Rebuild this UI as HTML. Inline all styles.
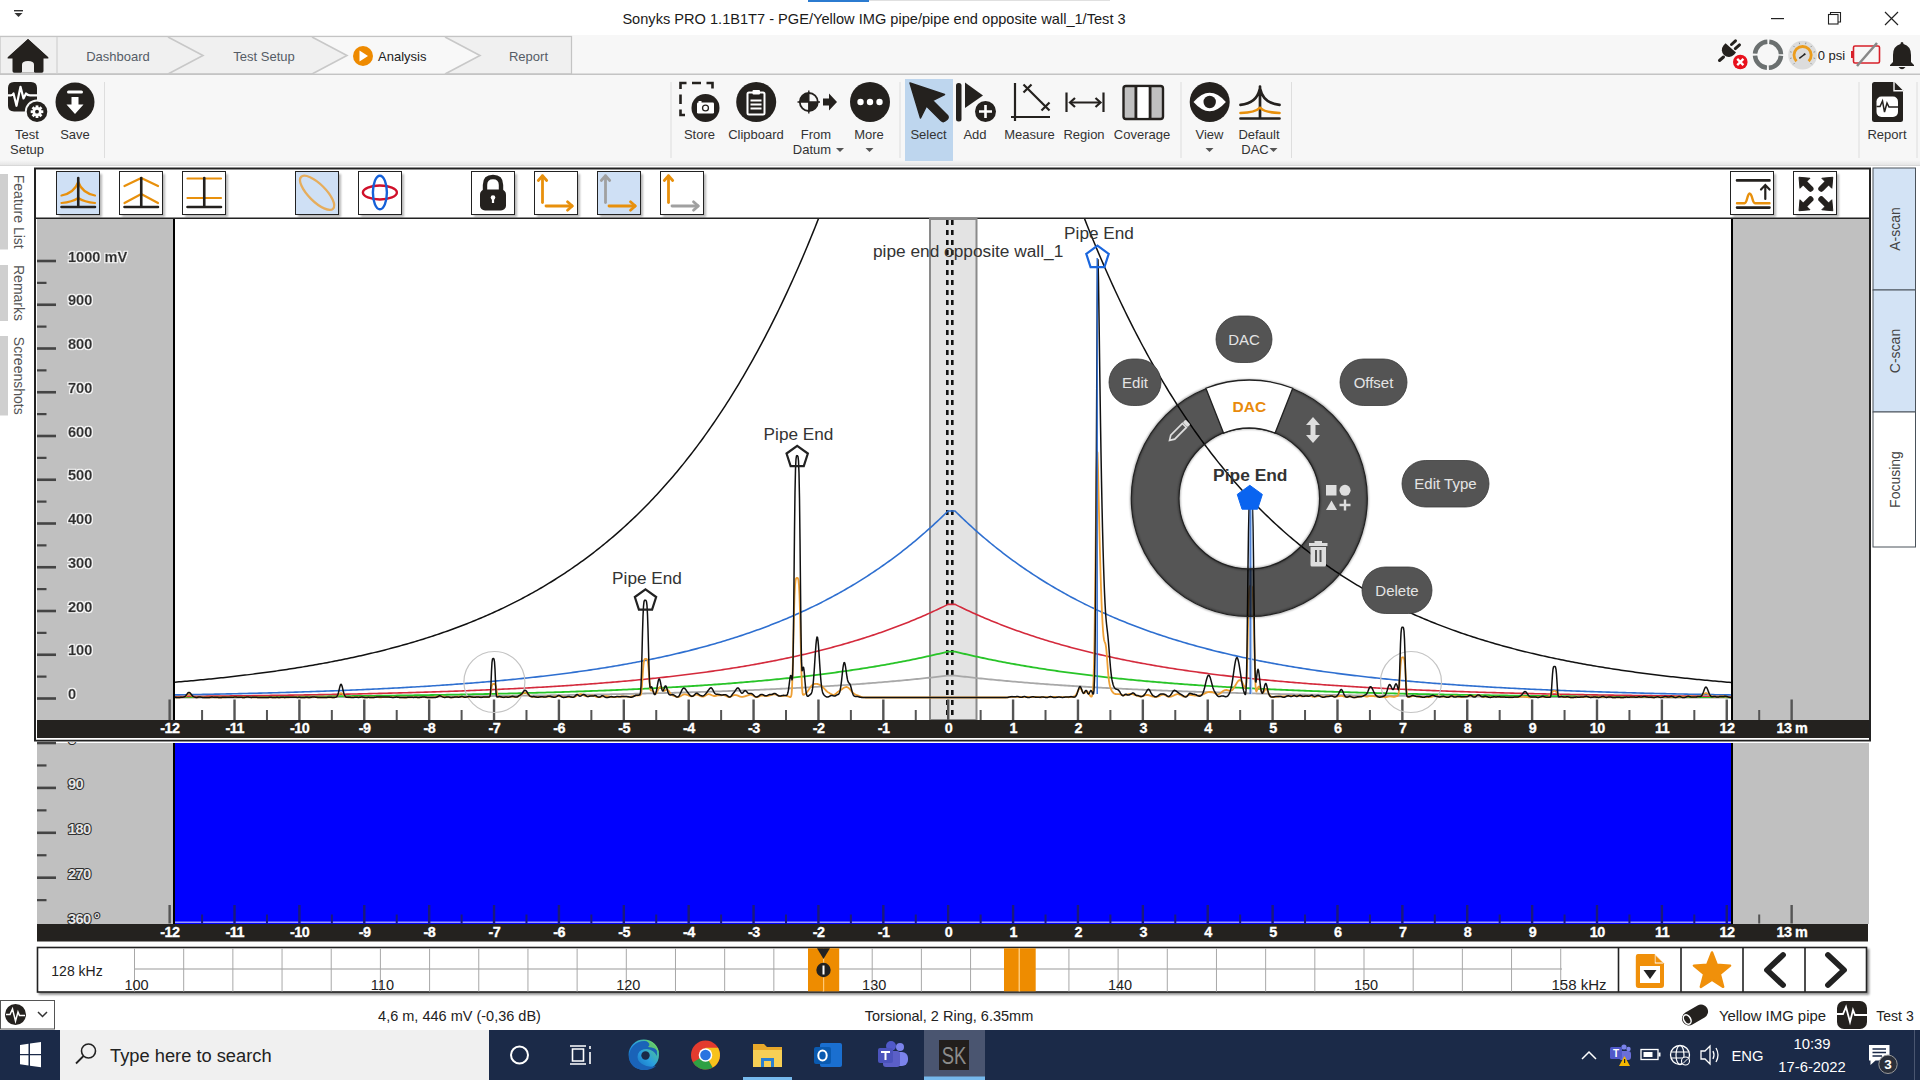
<!DOCTYPE html>
<html><head><meta charset="utf-8"><title>Sonyks PRO</title>
<style>
html,body{margin:0;padding:0;width:1920px;height:1080px;overflow:hidden;background:#fff;}
svg{position:absolute;left:0;top:0;font-family:"Liberation Sans", sans-serif;}
</style></head><body>
<svg width="1920" height="1080" viewBox="0 0 1920 1080">
<defs>
<linearGradient id="ribgrad" x1="0" y1="0" x2="0" y2="1"><stop offset="0" stop-color="#f7f7f7"/><stop offset="1" stop-color="#e6e6e6"/></linearGradient>
<filter id="btnsh" x="-20%" y="-20%" width="150%" height="150%"><feGaussianBlur in="SourceAlpha" stdDeviation="1.2"/><feOffset dx="1.5" dy="1.5"/><feComponentTransfer><feFuncA type="linear" slope="0.45"/></feComponentTransfer><feMerge><feMergeNode/><feMergeNode in="SourceGraphic"/></feMerge></filter>
<linearGradient id="edgegrad" x1="0" y1="1" x2="1" y2="0"><stop offset="0" stop-color="#0c59b0"/><stop offset="0.5" stop-color="#2a9ee0"/><stop offset="1" stop-color="#62d66a"/></linearGradient>
<filter id="blur1" x="-20%" y="-20%" width="140%" height="140%"><feGaussianBlur stdDeviation="0.9"/></filter>
<filter id="ringsh" x="-10%" y="-10%" width="120%" height="120%"><feGaussianBlur stdDeviation="0.8"/></filter>
<filter id="halo" x="-10%" y="-30%" width="120%" height="160%"><feMorphology in="SourceAlpha" operator="dilate" radius="1" result="d"/><feFlood flood-color="#ffffff" flood-opacity="0.9"/><feComposite in2="d" operator="in" result="w"/><feGaussianBlur in="w" stdDeviation="0.7" result="wb"/><feMerge><feMergeNode in="wb"/><feMergeNode in="SourceGraphic"/></feMerge></filter>
<clipPath id="plotclip"><rect x="175" y="219" width="1556" height="501"/></clipPath>
</defs>
<rect x="0" y="0" width="1920" height="35" fill="#ffffff"/>
<rect x="808" y="0" width="61" height="2" fill="#2b7bd0"/>
<rect x="869" y="0" width="241" height="1" fill="#e0e0e0"/>
<text x="874" y="24" font-size="14.6" fill="#1a1a1a" text-anchor="middle" font-weight="400" >Sonyks PRO 1.1B1T7 - PGE/Yellow IMG pipe/pipe end opposite wall_1/Test 3</text>
<rect x="14" y="10" width="9" height="1.4" fill="#333"/>
<path d="M14.5 13 L22.5 13 L18.5 17 Z" fill="#333"/>
<rect x="1771" y="18" width="13" height="1.2" fill="#222"/>
<rect x="1828.5" y="14.5" width="9.5" height="9.5" fill="none" stroke="#222" stroke-width="1.1"/>
<path d="M1830.5 14.5 V12.5 H1840.5 V22 H1838" fill="none" stroke="#222" stroke-width="1.1"/>
<path d="M1885 12 L1898 25 M1898 12 L1885 25" stroke="#222" stroke-width="1.2"/>
<rect x="0" y="35" width="1920" height="40" fill="#f7f7f7"/>
<rect x="0" y="36.5" width="571.5" height="37.5" fill="#f0f0f0" stroke="#c4c4c4" stroke-width="1.2"/>
<rect x="0" y="73.5" width="1920" height="1.5" fill="#c4c4c4"/>
<line x1="57" y1="37" x2="57" y2="74" stroke="#d0d0d0" stroke-width="1.2"/>
<path d="M312 37.2 L347 55.5 L312 73.6 L445 73.6 L480 55.5 L445 37.2 Z" fill="#f8f8f8"/>
<path d="M168 37 L203 55.5 L168 74" fill="none" stroke="#c8c8c8" stroke-width="1.6"/>
<path d="M312 37 L347 55.5 L312 74" fill="none" stroke="#c8c8c8" stroke-width="1.6"/>
<path d="M445 37 L480 55.5 L445 74" fill="none" stroke="#c8c8c8" stroke-width="1.6"/>
<path d="M28 39 L48 57 Q49.5 58.5 47 58.5 L43 58.5 L43 71 Q43 72.5 41.5 72.5 L35 72.5 L35 64 Q35 61 31.5 61 L24.5 61 Q21 61 21 64 L21 72.5 L14.5 72.5 Q13 72.5 13 71 L13 58.5 L9 58.5 Q6.5 58.5 8 57 Z" fill="#24211e"/>
<path d="M28 39 L48.2 57.5 L7.8 57.5 Z" fill="#24211e"/>
<rect x="12.5" y="56" width="31" height="16.5" rx="1.5" fill="#24211e"/>
<path d="M22 72.6 L22 64.5 Q22 61 28 61 Q34 61 34 64.5 L34 72.6 Z" fill="#f0f0f0"/>
<text x="118" y="61" font-size="13" fill="#555c66" text-anchor="middle" font-weight="400" >Dashboard</text>
<text x="264" y="61" font-size="13" fill="#555c66" text-anchor="middle" font-weight="400" >Test Setup</text>
<circle cx="363" cy="56" r="10" fill="#ee8a00"/>
<path d="M359.5 50.5 L368 56 L359.5 61.5 Z" fill="#fff"/>
<text x="378" y="61" font-size="13" fill="#222" text-anchor="start" font-weight="400" >Analysis</text>
<text x="528.5" y="61" font-size="13" fill="#555c66" text-anchor="middle" font-weight="400" >Report</text>
<rect x="0" y="75" width="1920" height="90" fill="#f7f7f7"/>
<rect x="0" y="160" width="1920" height="5" fill="url(#ribgrad)"/>
<rect x="0" y="165" width="1920" height="1" fill="#d8d8d8"/>
<rect x="104" y="82" width="1" height="76" fill="#dedede"/>
<rect x="670.5" y="82" width="1" height="76" fill="#dedede"/>
<rect x="899.5" y="82" width="1" height="76" fill="#dedede"/>
<rect x="1180.5" y="82" width="1" height="76" fill="#dedede"/>
<rect x="1291" y="82" width="1" height="76" fill="#dedede"/>
<rect x="1858.5" y="82" width="1" height="76" fill="#dedede"/>
<rect x="1916.5" y="82" width="1" height="76" fill="#dedede"/>
<rect x="905" y="79" width="48" height="82" fill="#bed6ee"/>
<text x="27" y="139" font-size="13" fill="#333" text-anchor="middle" font-weight="400" >Test</text>
<text x="27" y="153.5" font-size="13" fill="#333" text-anchor="middle" font-weight="400" >Setup</text>
<text x="75" y="139" font-size="13" fill="#333" text-anchor="middle" font-weight="400" >Save</text>
<text x="699.5" y="139" font-size="13" fill="#333" text-anchor="middle" font-weight="400" >Store</text>
<text x="756" y="139" font-size="13" fill="#333" text-anchor="middle" font-weight="400" >Clipboard</text>
<text x="816" y="139" font-size="13" fill="#333" text-anchor="middle" font-weight="400" >From</text>
<text x="812" y="153.5" font-size="13" fill="#333" text-anchor="middle" font-weight="400" >Datum</text>
<text x="869" y="139" font-size="13" fill="#333" text-anchor="middle" font-weight="400" >More</text>
<text x="928.5" y="139" font-size="13" fill="#333" text-anchor="middle" font-weight="400" >Select</text>
<text x="975" y="139" font-size="13" fill="#333" text-anchor="middle" font-weight="400" >Add</text>
<text x="1029.5" y="139" font-size="13" fill="#333" text-anchor="middle" font-weight="400" >Measure</text>
<text x="1084" y="139" font-size="13" fill="#333" text-anchor="middle" font-weight="400" >Region</text>
<text x="1142" y="139" font-size="13" fill="#333" text-anchor="middle" font-weight="400" >Coverage</text>
<text x="1209.5" y="139" font-size="13" fill="#333" text-anchor="middle" font-weight="400" >View</text>
<text x="1259" y="139" font-size="13" fill="#333" text-anchor="middle" font-weight="400" >Default</text>
<text x="1255" y="153.5" font-size="13" fill="#333" text-anchor="middle" font-weight="400" >DAC</text>
<text x="1887" y="139" font-size="13" fill="#333" text-anchor="middle" font-weight="400" >Report</text>
<path d="M836 148 L844 148 L840 152 Z" fill="#555"/>
<path d="M865.5 148 L873.5 148 L869.5 152 Z" fill="#555"/>
<path d="M1205.5 148 L1213.5 148 L1209.5 152 Z" fill="#555"/>
<path d="M1269.5 148 L1277.5 148 L1273.5 152 Z" fill="#555"/>
<path d="M14 82 H31 Q37 82 37 88 V111.4 H14 Q8 111.4 8 106 V88 Q8 82 14 82 Z" fill="#24211e"/>
<path d="M8 95.3 H11 Q12.5 95 13.5 93.5 L16.5 105.8 L20.5 86.8 L23.5 98.5 L26 93.5 Q27.5 95.3 30 95.3 H37" fill="none" stroke="#fff" stroke-width="2.2" stroke-linejoin="round"/>
<circle cx="37" cy="111.7" r="12.2" fill="#f7f7f7"/><circle cx="37" cy="111.7" r="10.3" fill="#24211e"/>
<rect x="35.6" y="105.4" width="2.8" height="12.6" fill="#fff" transform="rotate(0 37 111.7)"/><rect x="35.6" y="105.4" width="2.8" height="12.6" fill="#fff" transform="rotate(45 37 111.7)"/><rect x="35.6" y="105.4" width="2.8" height="12.6" fill="#fff" transform="rotate(90 37 111.7)"/><rect x="35.6" y="105.4" width="2.8" height="12.6" fill="#fff" transform="rotate(135 37 111.7)"/>
<circle cx="37" cy="111.7" r="4.6" fill="#fff"/><circle cx="37" cy="111.7" r="1.9" fill="#24211e"/>
<circle cx="75" cy="102" r="19.5" fill="#24211e"/>
<rect x="67" y="90.5" width="16" height="3" rx="1.5" fill="#fff"/>
<path d="M71.5 97 H78.5 V104.5 H83.5 L75 114 L66.5 104.5 H71.5 Z" fill="#fff"/>
<path d="M680.5 89 V83 H686.5 M692 83 H701 M706.5 83 H712.5 V88.5 M680.5 94.5 V104 M680.5 109.5 V115 H685" fill="none" stroke="#24211e" stroke-width="2.6"/>
<circle cx="705.5" cy="108" r="14" fill="#24211e"/>
<rect x="697" y="102.5" width="17" height="11" rx="1.2" fill="#fff"/><rect x="698.5" y="101" width="3" height="2" fill="#fff"/><circle cx="705.5" cy="108" r="3.6" fill="#24211e"/><circle cx="705.5" cy="108" r="2.3" fill="#fff"/>
<circle cx="756.2" cy="102" r="20" fill="#24211e"/>
<rect x="747.5" y="92.5" width="17" height="22" rx="1.5" fill="none" stroke="#fff" stroke-width="2"/><rect x="752.5" y="90" width="7.5" height="4.5" rx="1" fill="#fff"/>
<path d="M750.5 100.5 H761.5 M750.5 104.5 H761.5 M750.5 108.5 H761.5" stroke="#fff" stroke-width="2"/>
<circle cx="808.8" cy="102" r="9" fill="none" stroke="#24211e" stroke-width="1.8"/>
<path d="M808.8 102 V93 A9 9 0 0 0 799.8 102 Z M808.8 102 V111 A9 9 0 0 0 817.8 102 Z" fill="#24211e"/>
<path d="M808.8 90.5 V113.5 M797.5 102 H820" stroke="#24211e" stroke-width="1.4"/>
<path d="M823 98.5 H829 V93.5 L837 102 L829 110.5 V105.5 H823 Z" fill="#24211e"/>
<circle cx="870" cy="102" r="20" fill="#24211e"/>
<circle cx="860.5" cy="102" r="3.2" fill="#fff"/>
<circle cx="870" cy="102" r="3.2" fill="#fff"/>
<circle cx="879.5" cy="102" r="3.2" fill="#fff"/>
<path d="M910 83 L944.5 94.5 L932.5 100.5 L947.5 115.5 Q949 117.5 947 119.5 L945 121 Q943 122.5 941 120.5 L926.5 106 L920.5 118 Z" fill="#24211e" stroke="#24211e" stroke-width="1.5" stroke-linejoin="round"/>
<rect x="956" y="83" width="5.5" height="38.5" rx="2.5" fill="#24211e"/>
<path d="M965 82.5 L983 95.5 L965 108 Z" fill="#24211e"/>
<circle cx="985.5" cy="111.5" r="10.5" fill="#24211e"/><path d="M985.5 105 V118 M979 111.5 H992" stroke="#fff" stroke-width="2.6"/>
<path d="M1015 83 V121 M1011 117 H1050" stroke="#24211e" stroke-width="2.2"/>
<path d="M1027.5 88.5 L1045.5 106.5 M1023.5 84.5 L1031.5 92.5 M1031.5 84.5 L1023.5 92.5 M1041.5 102.5 L1049.5 110.5 M1049.5 102.5 L1041.5 110.5" stroke="#24211e" stroke-width="2.2"/>
<path d="M1066.5 92.5 V112 M1103.5 92.5 V112 M1070.5 102.5 H1100" stroke="#24211e" stroke-width="2.2"/>
<path d="M1075 98 L1070 102.5 L1075 107 M1095.5 98 L1100.5 102.5 L1095.5 107" fill="none" stroke="#24211e" stroke-width="2.2"/>
<rect x="1123.5" y="86" width="39.5" height="33" rx="2.5" fill="#c0c0c0" stroke="#24211e" stroke-width="2.4"/>
<rect x="1134.5" y="86" width="3" height="33" fill="#24211e"/><rect x="1148.5" y="86" width="3" height="33" fill="#24211e"/>
<rect x="1137.5" y="87.2" width="11" height="30.6" fill="#fff"/>
<circle cx="1209.7" cy="102" r="20" fill="#24211e"/>
<path d="M1193.5 102 Q1209.7 83.5 1225.9 102 Q1209.7 120.5 1193.5 102 Z" fill="#fff"/>
<circle cx="1209.7" cy="102" r="6.2" fill="#24211e"/>
<path d="M1260 86.5 V118 M1240.5 118.5 H1279.5 M1240.5 104.8 Q1256.5 103.5 1259.8 89 M1279.5 104.8 Q1263.5 103.5 1260.2 89" fill="none" stroke="#24211e" stroke-width="2.7" stroke-linecap="round"/>
<path d="M1240.5 113 Q1255.5 112.5 1259.5 108 M1279.5 113 Q1264.5 112.5 1260.5 108" fill="none" stroke="#e8900c" stroke-width="2.6" stroke-linecap="round"/>
<path d="M1872 84.5 Q1872 82 1874.5 82 H1894.5 L1903 90.5 V119.5 Q1903 122 1900.5 122 H1874.5 Q1872 122 1872 119.5 Z" fill="#24211e"/>
<path d="M1894 82 V90.8 H1903" fill="none" stroke="#f7f7f7" stroke-width="1.4"/>
<rect x="1876.5" y="96.5" width="21.5" height="20.5" rx="5" fill="#fff"/>
<path d="M1876.5 106.5 H1880 L1882.5 101 L1884.5 112 L1887 103 L1889 107 H1898" fill="none" stroke="#24211e" stroke-width="1.5"/>
<path d="M1725.5 43.2 L1736 52.6 L1734 54.84 A7.05 7.05 0 0 1 1723.5 45.44 Z" fill="#24211e"/>
<path d="M1731.5 44.5 L1735.5 40.8 M1735.3 48.6 L1739.5 44.9 M1719.5 60.5 L1723.5 57" stroke="#24211e" stroke-width="3" stroke-linecap="round"/>
<circle cx="1740.3" cy="62" r="8.3" fill="#f7f7f7"/><circle cx="1740.3" cy="62" r="7.3" fill="#e8101c"/><path d="M1737.2 58.9 L1743.4 65.1 M1743.4 58.9 L1737.2 65.1" stroke="#fff" stroke-width="2.3"/>
<circle cx="1768" cy="54.8" r="13" fill="none" stroke="#6b7070" stroke-width="4.5" stroke-dasharray="18.4 2" stroke-dashoffset="-1"/>
<circle cx="1802.6" cy="55.1" r="14.4" fill="#dcdcdc"/><path d="M1794.61 63.09 L1793.41 64.29 M1791.69 58.02 L1790.04 58.46 M1791.69 52.18 L1790.04 51.74 M1794.61 47.11 L1793.41 45.91 M1799.68 44.19 L1799.24 42.54 M1805.52 44.19 L1805.96 42.54 M1810.59 47.11 L1811.79 45.91 M1813.51 52.18 L1815.16 51.74 M1813.51 58.02 L1815.16 58.46 M1810.59 63.09 L1811.79 64.29 " stroke="#8a9090" stroke-width="0.9"/><path d="M1796.52 61.18 A8.6 8.6 0 1 1 1808.68 61.18" fill="none" stroke="#eb9c1c" stroke-width="2.8"/><path d="M1799.3 58.3 L1805 54" stroke="#222" stroke-width="1.5"/><circle cx="1804.6" cy="54.3" r="1" fill="#222"/>
<text x="1831.5" y="60" font-size="13" fill="#222" text-anchor="middle" font-weight="400" >0 psi</text>
<rect x="1853.5" y="46" width="26" height="17" rx="1.5" fill="none" stroke="#d8202a" stroke-width="1.6"/><rect x="1851" y="51" width="2" height="7" fill="#d8202a"/><path d="M1857 66 L1877 43" stroke="#888" stroke-width="2.5"/>
<path d="M1902 42 Q1903.5 42 1903.5 44 Q1911 46 1911 55 V62 L1914 65 V66 H1890 V65 L1893 62 V55 Q1893 46 1900.5 44 Q1900.5 42 1902 42 Z" fill="#24211e"/><path d="M1898.5 67 Q1902 71.5 1905.5 67 Z" fill="#24211e"/>
<rect x="0" y="166" width="35" height="864" fill="#ffffff"/>
<rect x="0" y="174" width="8" height="75.5" fill="#cfcfcf"/>
<text x="0" y="0" font-size="14" fill="#555" text-anchor="middle" transform="translate(13.5 211.75) rotate(90)">Feature List</text>
<rect x="0" y="265" width="8" height="56" fill="#cfcfcf"/>
<text x="0" y="0" font-size="14" fill="#555" text-anchor="middle" transform="translate(13.5 293.0) rotate(90)">Remarks</text>
<rect x="0" y="336" width="8" height="79.5" fill="#cfcfcf"/>
<text x="0" y="0" font-size="14" fill="#555" text-anchor="middle" transform="translate(13.5 375.75) rotate(90)">Screenshots</text>
<rect x="1870" y="166" width="50" height="834" fill="#ffffff"/>
<rect x="1873" y="168" width="42.5" height="122" fill="#d3e3f5" stroke="#4a525a" stroke-width="1"/>
<text x="0" y="0" font-size="14" fill="#444" text-anchor="middle" transform="translate(1899.5 229.0) rotate(-90)">A-scan</text>
<rect x="1873" y="290" width="42.5" height="122" fill="#d3e3f5" stroke="#4a525a" stroke-width="1"/>
<text x="0" y="0" font-size="14" fill="#444" text-anchor="middle" transform="translate(1899.5 351.0) rotate(-90)">C-scan</text>
<rect x="1873" y="412" width="42.5" height="135" fill="#ffffff" stroke="#4a525a" stroke-width="1"/>
<text x="0" y="0" font-size="14" fill="#444" text-anchor="middle" transform="translate(1899.5 479.5) rotate(-90)">Focusing</text>
<rect x="35" y="168.5" width="1835" height="572" fill="#ffffff" stroke="#222" stroke-width="2"/>
<rect x="59.0" y="174.0" width="43" height="43" fill="#000" opacity="0.28" filter="url(#blur1)"/>
<rect x="56.5" y="171.5" width="43" height="43" fill="#cfe0f5" stroke="#222" stroke-width="1"/>
<rect x="122.0" y="174.0" width="43" height="43" fill="#000" opacity="0.28" filter="url(#blur1)"/>
<rect x="119.5" y="171.5" width="43" height="43" fill="#fff" stroke="#222" stroke-width="1"/>
<rect x="185.0" y="174.0" width="43" height="43" fill="#000" opacity="0.28" filter="url(#blur1)"/>
<rect x="182.5" y="171.5" width="43" height="43" fill="#fff" stroke="#222" stroke-width="1"/>
<rect x="298.0" y="174.0" width="43" height="43" fill="#000" opacity="0.28" filter="url(#blur1)"/>
<rect x="295.5" y="171.5" width="43" height="43" fill="#cfe0f5" stroke="#222" stroke-width="1"/>
<rect x="361.0" y="174.0" width="43" height="43" fill="#000" opacity="0.28" filter="url(#blur1)"/>
<rect x="358.5" y="171.5" width="43" height="43" fill="#fff" stroke="#222" stroke-width="1"/>
<rect x="474.0" y="174.0" width="43" height="43" fill="#000" opacity="0.28" filter="url(#blur1)"/>
<rect x="471.5" y="171.5" width="43" height="43" fill="#fff" stroke="#222" stroke-width="1"/>
<rect x="537.0" y="174.0" width="43" height="43" fill="#000" opacity="0.28" filter="url(#blur1)"/>
<rect x="534.5" y="171.5" width="43" height="43" fill="#fff" stroke="#222" stroke-width="1"/>
<rect x="600.0" y="174.0" width="43" height="43" fill="#000" opacity="0.28" filter="url(#blur1)"/>
<rect x="597.5" y="171.5" width="43" height="43" fill="#cfe0f5" stroke="#222" stroke-width="1"/>
<rect x="663.0" y="174.0" width="43" height="43" fill="#000" opacity="0.28" filter="url(#blur1)"/>
<rect x="660.5" y="171.5" width="43" height="43" fill="#fff" stroke="#222" stroke-width="1"/>
<rect x="1733.0" y="174.0" width="43" height="43" fill="#000" opacity="0.28" filter="url(#blur1)"/>
<rect x="1730.5" y="171.5" width="43" height="43" fill="#fff" stroke="#222" stroke-width="1"/>
<rect x="1796.0" y="174.0" width="43" height="43" fill="#000" opacity="0.28" filter="url(#blur1)"/>
<rect x="1793.5" y="171.5" width="43" height="43" fill="#fff" stroke="#222" stroke-width="1"/>
<path d="M61.5 195.5 Q74.25 193 78.25 182 Q82.25 193 95.0 195.5" fill="none" stroke="#e8900c" stroke-width="2.2" stroke-linecap="round"/>
<path d="M61.5 203 Q72.25 202 78.25 198 Q84.25 202 95.0 203" fill="none" stroke="#e8900c" stroke-width="2.2" stroke-linecap="round"/>
<path d="M78.25 178 L78.25 207 M61.5 207 L95.0 207" fill="none" stroke="#24211e" stroke-width="2.6" stroke-linecap="round"/>
<path d="M124.5 186 L141.25 178 L158.0 186" fill="none" stroke="#e8900c" stroke-width="2.2" stroke-linecap="round"/>
<path d="M124.5 203 L141.25 194 L158.0 203" fill="none" stroke="#e8900c" stroke-width="2.2" stroke-linecap="round"/>
<path d="M141.25 178 L141.25 207 M124.5 207 L158.0 207" fill="none" stroke="#24211e" stroke-width="2.6" stroke-linecap="round"/>
<path d="M187.5 178.5 L221.0 178.5 M187.5 198 L221.0 198" fill="none" stroke="#e8900c" stroke-width="2.2" stroke-linecap="round"/>
<path d="M204.25 178 L204.25 207 M187.5 207 L221.0 207" fill="none" stroke="#24211e" stroke-width="2.6" stroke-linecap="round"/>
<ellipse cx="317.1" cy="192.8" rx="8.6" ry="22.6" transform="rotate(-45 317.1 192.8)" fill="none" stroke="#e6ad5c" stroke-width="2.3"/>
<ellipse cx="379.9" cy="192.5" rx="17" ry="7" fill="none" stroke="#d0102a" stroke-width="2.4"/>
<ellipse cx="379.9" cy="192.5" rx="7" ry="16.8" fill="none" stroke="#1560d8" stroke-width="2.4"/>
<path d="M485 192 L485 185 Q485 177 493 177 Q501 177 501 185 L501 192" fill="none" stroke="#24211e" stroke-width="4.4"/>
<rect x="480" y="189.5" width="26" height="21" rx="5" fill="#24211e"/>
<circle cx="493" cy="197.5" r="2.3" fill="#fff"/><rect x="491.9" y="197.5" width="2.2" height="5.5" fill="#fff"/>
<path d="M542.5 202.5 L542.5 176" stroke="#e8900c" stroke-width="2.8" stroke-linecap="round"/>
<path d="M538.3 180.5 L542.5 175.8 L546.7 180.5" fill="none" stroke="#e8900c" stroke-width="2.8" stroke-linecap="round" stroke-linejoin="round"/>
<path d="M546 206 L572 206" stroke="#e8900c" stroke-width="2.8" stroke-linecap="round"/>
<path d="M567.5 201.8 L572.3 206 L567.5 210.2" fill="none" stroke="#e8900c" stroke-width="2.8" stroke-linecap="round" stroke-linejoin="round"/>
<path d="M605.5 202.5 L605.5 176" stroke="#a0a0a0" stroke-width="2.8" stroke-linecap="round"/>
<path d="M601.3 180.5 L605.5 175.8 L609.7 180.5" fill="none" stroke="#a0a0a0" stroke-width="2.8" stroke-linecap="round" stroke-linejoin="round"/>
<path d="M609 206 L635 206" stroke="#e8900c" stroke-width="2.8" stroke-linecap="round"/>
<path d="M630.5 201.8 L635.3 206 L630.5 210.2" fill="none" stroke="#e8900c" stroke-width="2.8" stroke-linecap="round" stroke-linejoin="round"/>
<path d="M668.5 202.5 L668.5 176" stroke="#e8900c" stroke-width="2.8" stroke-linecap="round"/>
<path d="M664.3 180.5 L668.5 175.8 L672.7 180.5" fill="none" stroke="#e8900c" stroke-width="2.8" stroke-linecap="round" stroke-linejoin="round"/>
<path d="M672 206 L698 206" stroke="#a0a0a0" stroke-width="2.8" stroke-linecap="round"/>
<path d="M693.5 201.8 L698.3 206 L693.5 210.2" fill="none" stroke="#a0a0a0" stroke-width="2.8" stroke-linecap="round" stroke-linejoin="round"/>
<path d="M1737 180.4 H1769.5 M1737 207.6 H1769.5" stroke="#24211e" stroke-width="2.6" stroke-linecap="round"/>
<path d="M1737 203.2 H1744.5 Q1746 203.2 1747 199 Q1748.5 193.5 1749.5 193.5 Q1751 193.5 1752.5 199 Q1753.5 203.2 1755 203.2 H1769.5" fill="none" stroke="#e8900c" stroke-width="2.4" stroke-linecap="round"/>
<path d="M1765.3 199 V185.5 M1761 189.5 L1765.3 185 L1769.6 189.5" fill="none" stroke="#24211e" stroke-width="2.2" stroke-linecap="round"/>
<path d="M1799.0 177.25 L1810.0 178.25 L1800.0 188.25 Z" fill="#24211e" stroke="#24211e" stroke-width="1" stroke-linejoin="round"/>
<path d="M1803.0 181.25 L1810.5 188.75" stroke="#24211e" stroke-width="6" stroke-linecap="round"/>
<path d="M1832.8000000000002 177.25 L1821.8000000000002 178.25 L1831.8000000000002 188.25 Z" fill="#24211e" stroke="#24211e" stroke-width="1" stroke-linejoin="round"/>
<path d="M1828.8000000000002 181.25 L1821.3000000000002 188.75" stroke="#24211e" stroke-width="6" stroke-linecap="round"/>
<path d="M1799.0 210.75 L1810.0 209.75 L1800.0 199.75 Z" fill="#24211e" stroke="#24211e" stroke-width="1" stroke-linejoin="round"/>
<path d="M1803.0 206.75 L1810.5 199.25" stroke="#24211e" stroke-width="6" stroke-linecap="round"/>
<path d="M1832.8000000000002 210.75 L1821.8000000000002 209.75 L1831.8000000000002 199.75 Z" fill="#24211e" stroke="#24211e" stroke-width="1" stroke-linejoin="round"/>
<path d="M1828.8000000000002 206.75 L1821.3000000000002 199.25" stroke="#24211e" stroke-width="6" stroke-linecap="round"/>
<rect x="36" y="217.5" width="1833" height="1.5" fill="#222"/>
<rect x="37" y="219" width="137" height="501" fill="#c0c0c0"/>
<rect x="1732" y="219" width="137" height="501" fill="#c0c0c0"/>
<rect x="173" y="219" width="2" height="501" fill="#000"/>
<rect x="1731" y="219" width="2" height="501" fill="#000"/>
<rect x="37" y="697.20" width="19" height="2.6" fill="#444"/>
<rect x="37" y="675.52" width="9.5" height="2.2" fill="#444"/>
<rect x="37" y="653.45" width="19" height="2.6" fill="#444"/>
<rect x="37" y="631.77" width="9.5" height="2.2" fill="#444"/>
<rect x="37" y="609.70" width="19" height="2.6" fill="#444"/>
<rect x="37" y="588.02" width="9.5" height="2.2" fill="#444"/>
<rect x="37" y="565.95" width="19" height="2.6" fill="#444"/>
<rect x="37" y="544.27" width="9.5" height="2.2" fill="#444"/>
<rect x="37" y="522.20" width="19" height="2.6" fill="#444"/>
<rect x="37" y="500.52" width="9.5" height="2.2" fill="#444"/>
<rect x="37" y="478.45" width="19" height="2.6" fill="#444"/>
<rect x="37" y="456.77" width="9.5" height="2.2" fill="#444"/>
<rect x="37" y="434.70" width="19" height="2.6" fill="#444"/>
<rect x="37" y="413.02" width="9.5" height="2.2" fill="#444"/>
<rect x="37" y="390.95" width="19" height="2.6" fill="#444"/>
<rect x="37" y="369.27" width="9.5" height="2.2" fill="#444"/>
<rect x="37" y="347.20" width="19" height="2.6" fill="#444"/>
<rect x="37" y="325.52" width="9.5" height="2.2" fill="#444"/>
<rect x="37" y="303.45" width="19" height="2.6" fill="#444"/>
<rect x="37" y="281.77" width="9.5" height="2.2" fill="#444"/>
<rect x="37" y="259.70" width="19" height="2.6" fill="#444"/>
<text x="68" y="699.0" font-size="14.6" font-weight="700" fill="#2e2e2e" stroke="#2e2e2e" stroke-width="0.4" filter="url(#halo)">0</text>
<text x="68" y="655.2" font-size="14.6" font-weight="700" fill="#2e2e2e" stroke="#2e2e2e" stroke-width="0.4" filter="url(#halo)">100</text>
<text x="68" y="611.5" font-size="14.6" font-weight="700" fill="#2e2e2e" stroke="#2e2e2e" stroke-width="0.4" filter="url(#halo)">200</text>
<text x="68" y="567.8" font-size="14.6" font-weight="700" fill="#2e2e2e" stroke="#2e2e2e" stroke-width="0.4" filter="url(#halo)">300</text>
<text x="68" y="524.0" font-size="14.6" font-weight="700" fill="#2e2e2e" stroke="#2e2e2e" stroke-width="0.4" filter="url(#halo)">400</text>
<text x="68" y="480.2" font-size="14.6" font-weight="700" fill="#2e2e2e" stroke="#2e2e2e" stroke-width="0.4" filter="url(#halo)">500</text>
<text x="68" y="436.5" font-size="14.6" font-weight="700" fill="#2e2e2e" stroke="#2e2e2e" stroke-width="0.4" filter="url(#halo)">600</text>
<text x="68" y="392.8" font-size="14.6" font-weight="700" fill="#2e2e2e" stroke="#2e2e2e" stroke-width="0.4" filter="url(#halo)">700</text>
<text x="68" y="349.0" font-size="14.6" font-weight="700" fill="#2e2e2e" stroke="#2e2e2e" stroke-width="0.4" filter="url(#halo)">800</text>
<text x="68" y="305.2" font-size="14.6" font-weight="700" fill="#2e2e2e" stroke="#2e2e2e" stroke-width="0.4" filter="url(#halo)">900</text>
<text x="68" y="261.5" font-size="14.6" font-weight="700" fill="#2e2e2e" stroke="#2e2e2e" stroke-width="0.4" filter="url(#halo)">1000 mV</text>
<rect x="175" y="219" width="1556" height="501" fill="#ffffff"/>
<rect x="930" y="219" width="46.5" height="501" fill="#e3e3e3" stroke="#8a8a8a" stroke-width="2"/>
<rect x="946" y="220" width="2.6" height="5" fill="#111"/><rect x="951" y="220" width="2.6" height="5" fill="#111"/>
<rect x="946" y="230" width="2.6" height="5" fill="#111"/><rect x="951" y="230" width="2.6" height="5" fill="#111"/>
<rect x="946" y="240" width="2.6" height="5" fill="#111"/><rect x="951" y="240" width="2.6" height="5" fill="#111"/>
<rect x="946" y="250" width="2.6" height="5" fill="#111"/><rect x="951" y="250" width="2.6" height="5" fill="#111"/>
<rect x="946" y="260" width="2.6" height="5" fill="#111"/><rect x="951" y="260" width="2.6" height="5" fill="#111"/>
<rect x="946" y="270" width="2.6" height="5" fill="#111"/><rect x="951" y="270" width="2.6" height="5" fill="#111"/>
<rect x="946" y="280" width="2.6" height="5" fill="#111"/><rect x="951" y="280" width="2.6" height="5" fill="#111"/>
<rect x="946" y="290" width="2.6" height="5" fill="#111"/><rect x="951" y="290" width="2.6" height="5" fill="#111"/>
<rect x="946" y="300" width="2.6" height="5" fill="#111"/><rect x="951" y="300" width="2.6" height="5" fill="#111"/>
<rect x="946" y="310" width="2.6" height="5" fill="#111"/><rect x="951" y="310" width="2.6" height="5" fill="#111"/>
<rect x="946" y="320" width="2.6" height="5" fill="#111"/><rect x="951" y="320" width="2.6" height="5" fill="#111"/>
<rect x="946" y="330" width="2.6" height="5" fill="#111"/><rect x="951" y="330" width="2.6" height="5" fill="#111"/>
<rect x="946" y="340" width="2.6" height="5" fill="#111"/><rect x="951" y="340" width="2.6" height="5" fill="#111"/>
<rect x="946" y="350" width="2.6" height="5" fill="#111"/><rect x="951" y="350" width="2.6" height="5" fill="#111"/>
<rect x="946" y="360" width="2.6" height="5" fill="#111"/><rect x="951" y="360" width="2.6" height="5" fill="#111"/>
<rect x="946" y="370" width="2.6" height="5" fill="#111"/><rect x="951" y="370" width="2.6" height="5" fill="#111"/>
<rect x="946" y="380" width="2.6" height="5" fill="#111"/><rect x="951" y="380" width="2.6" height="5" fill="#111"/>
<rect x="946" y="390" width="2.6" height="5" fill="#111"/><rect x="951" y="390" width="2.6" height="5" fill="#111"/>
<rect x="946" y="400" width="2.6" height="5" fill="#111"/><rect x="951" y="400" width="2.6" height="5" fill="#111"/>
<rect x="946" y="410" width="2.6" height="5" fill="#111"/><rect x="951" y="410" width="2.6" height="5" fill="#111"/>
<rect x="946" y="420" width="2.6" height="5" fill="#111"/><rect x="951" y="420" width="2.6" height="5" fill="#111"/>
<rect x="946" y="430" width="2.6" height="5" fill="#111"/><rect x="951" y="430" width="2.6" height="5" fill="#111"/>
<rect x="946" y="440" width="2.6" height="5" fill="#111"/><rect x="951" y="440" width="2.6" height="5" fill="#111"/>
<rect x="946" y="450" width="2.6" height="5" fill="#111"/><rect x="951" y="450" width="2.6" height="5" fill="#111"/>
<rect x="946" y="460" width="2.6" height="5" fill="#111"/><rect x="951" y="460" width="2.6" height="5" fill="#111"/>
<rect x="946" y="470" width="2.6" height="5" fill="#111"/><rect x="951" y="470" width="2.6" height="5" fill="#111"/>
<rect x="946" y="480" width="2.6" height="5" fill="#111"/><rect x="951" y="480" width="2.6" height="5" fill="#111"/>
<rect x="946" y="490" width="2.6" height="5" fill="#111"/><rect x="951" y="490" width="2.6" height="5" fill="#111"/>
<rect x="946" y="500" width="2.6" height="5" fill="#111"/><rect x="951" y="500" width="2.6" height="5" fill="#111"/>
<rect x="946" y="510" width="2.6" height="5" fill="#111"/><rect x="951" y="510" width="2.6" height="5" fill="#111"/>
<rect x="946" y="520" width="2.6" height="5" fill="#111"/><rect x="951" y="520" width="2.6" height="5" fill="#111"/>
<rect x="946" y="530" width="2.6" height="5" fill="#111"/><rect x="951" y="530" width="2.6" height="5" fill="#111"/>
<rect x="946" y="540" width="2.6" height="5" fill="#111"/><rect x="951" y="540" width="2.6" height="5" fill="#111"/>
<rect x="946" y="550" width="2.6" height="5" fill="#111"/><rect x="951" y="550" width="2.6" height="5" fill="#111"/>
<rect x="946" y="560" width="2.6" height="5" fill="#111"/><rect x="951" y="560" width="2.6" height="5" fill="#111"/>
<rect x="946" y="570" width="2.6" height="5" fill="#111"/><rect x="951" y="570" width="2.6" height="5" fill="#111"/>
<rect x="946" y="580" width="2.6" height="5" fill="#111"/><rect x="951" y="580" width="2.6" height="5" fill="#111"/>
<rect x="946" y="590" width="2.6" height="5" fill="#111"/><rect x="951" y="590" width="2.6" height="5" fill="#111"/>
<rect x="946" y="600" width="2.6" height="5" fill="#111"/><rect x="951" y="600" width="2.6" height="5" fill="#111"/>
<rect x="946" y="610" width="2.6" height="5" fill="#111"/><rect x="951" y="610" width="2.6" height="5" fill="#111"/>
<rect x="946" y="620" width="2.6" height="5" fill="#111"/><rect x="951" y="620" width="2.6" height="5" fill="#111"/>
<rect x="946" y="630" width="2.6" height="5" fill="#111"/><rect x="951" y="630" width="2.6" height="5" fill="#111"/>
<rect x="946" y="640" width="2.6" height="5" fill="#111"/><rect x="951" y="640" width="2.6" height="5" fill="#111"/>
<rect x="946" y="650" width="2.6" height="5" fill="#111"/><rect x="951" y="650" width="2.6" height="5" fill="#111"/>
<rect x="946" y="660" width="2.6" height="5" fill="#111"/><rect x="951" y="660" width="2.6" height="5" fill="#111"/>
<rect x="946" y="670" width="2.6" height="5" fill="#111"/><rect x="951" y="670" width="2.6" height="5" fill="#111"/>
<rect x="946" y="680" width="2.6" height="5" fill="#111"/><rect x="951" y="680" width="2.6" height="5" fill="#111"/>
<rect x="946" y="690" width="2.6" height="5" fill="#111"/><rect x="951" y="690" width="2.6" height="5" fill="#111"/>
<rect x="946" y="700" width="2.6" height="5" fill="#111"/><rect x="951" y="700" width="2.6" height="5" fill="#111"/>
<rect x="946" y="710" width="2.6" height="5" fill="#111"/><rect x="951" y="710" width="2.6" height="5" fill="#111"/>
<rect x="168.44" y="699.5" width="2.4" height="20.5" fill="#555"/>
<rect x="201.08" y="710" width="2" height="10" fill="#555"/>
<rect x="233.32" y="699.5" width="2.4" height="20.5" fill="#555"/>
<rect x="265.96" y="710" width="2" height="10" fill="#555"/>
<rect x="298.20" y="699.5" width="2.4" height="20.5" fill="#555"/>
<rect x="330.84" y="710" width="2" height="10" fill="#555"/>
<rect x="363.08" y="699.5" width="2.4" height="20.5" fill="#555"/>
<rect x="395.72" y="710" width="2" height="10" fill="#555"/>
<rect x="427.96" y="699.5" width="2.4" height="20.5" fill="#555"/>
<rect x="460.60" y="710" width="2" height="10" fill="#555"/>
<rect x="492.84" y="699.5" width="2.4" height="20.5" fill="#555"/>
<rect x="525.48" y="710" width="2" height="10" fill="#555"/>
<rect x="557.72" y="699.5" width="2.4" height="20.5" fill="#555"/>
<rect x="590.36" y="710" width="2" height="10" fill="#555"/>
<rect x="622.60" y="699.5" width="2.4" height="20.5" fill="#555"/>
<rect x="655.24" y="710" width="2" height="10" fill="#555"/>
<rect x="687.48" y="699.5" width="2.4" height="20.5" fill="#555"/>
<rect x="720.12" y="710" width="2" height="10" fill="#555"/>
<rect x="752.36" y="699.5" width="2.4" height="20.5" fill="#555"/>
<rect x="785.00" y="710" width="2" height="10" fill="#555"/>
<rect x="817.24" y="699.5" width="2.4" height="20.5" fill="#555"/>
<rect x="849.88" y="710" width="2" height="10" fill="#555"/>
<rect x="882.12" y="699.5" width="2.4" height="20.5" fill="#555"/>
<rect x="914.76" y="710" width="2" height="10" fill="#555"/>
<rect x="947.00" y="699.5" width="2.4" height="20.5" fill="#555"/>
<rect x="979.64" y="710" width="2" height="10" fill="#555"/>
<rect x="1011.88" y="699.5" width="2.4" height="20.5" fill="#555"/>
<rect x="1044.52" y="710" width="2" height="10" fill="#555"/>
<rect x="1076.76" y="699.5" width="2.4" height="20.5" fill="#555"/>
<rect x="1109.40" y="710" width="2" height="10" fill="#555"/>
<rect x="1141.64" y="699.5" width="2.4" height="20.5" fill="#555"/>
<rect x="1174.28" y="710" width="2" height="10" fill="#555"/>
<rect x="1206.52" y="699.5" width="2.4" height="20.5" fill="#555"/>
<rect x="1239.16" y="710" width="2" height="10" fill="#555"/>
<rect x="1271.40" y="699.5" width="2.4" height="20.5" fill="#555"/>
<rect x="1304.04" y="710" width="2" height="10" fill="#555"/>
<rect x="1336.28" y="699.5" width="2.4" height="20.5" fill="#555"/>
<rect x="1368.92" y="710" width="2" height="10" fill="#555"/>
<rect x="1401.16" y="699.5" width="2.4" height="20.5" fill="#555"/>
<rect x="1433.80" y="710" width="2" height="10" fill="#555"/>
<rect x="1466.04" y="699.5" width="2.4" height="20.5" fill="#555"/>
<rect x="1498.68" y="710" width="2" height="10" fill="#555"/>
<rect x="1530.92" y="699.5" width="2.4" height="20.5" fill="#555"/>
<rect x="1563.56" y="710" width="2" height="10" fill="#555"/>
<rect x="1595.80" y="699.5" width="2.4" height="20.5" fill="#555"/>
<rect x="1628.44" y="710" width="2" height="10" fill="#555"/>
<rect x="1660.68" y="699.5" width="2.4" height="20.5" fill="#555"/>
<rect x="1693.32" y="710" width="2" height="10" fill="#555"/>
<rect x="1725.56" y="699.5" width="2.4" height="20.5" fill="#555"/>
<rect x="1758.20" y="710" width="2" height="10" fill="#555"/>
<rect x="1790.44" y="699.5" width="2.4" height="20.5" fill="#555"/>
<g clip-path="url(#plotclip)">
<path d="M175,697.63 L177,697.62 L179,697.62 L181,697.62 L183,697.61 L185,697.61 L187,697.60 L189,697.60 L191,697.60 L193,697.59 L195,697.59 L197,697.58 L199,697.58 L201,697.57 L203,697.57 L205,697.56 L207,697.56 L209,697.56 L211,697.55 L213,697.55 L215,697.54 L217,697.54 L219,697.53 L221,697.53 L223,697.52 L225,697.52 L227,697.51 L229,697.51 L231,697.50 L233,697.50 L235,697.49 L237,697.48 L239,697.48 L241,697.47 L243,697.47 L245,697.46 L247,697.46 L249,697.45 L251,697.44 L253,697.44 L255,697.43 L257,697.43 L259,697.42 L261,697.41 L263,697.41 L265,697.40 L267,697.40 L269,697.39 L271,697.38 L273,697.38 L275,697.37 L277,697.36 L279,697.36 L281,697.35 L283,697.34 L285,697.33 L287,697.33 L289,697.32 L291,697.31 L293,697.31 L295,697.30 L297,697.29 L299,697.28 L301,697.28 L303,697.27 L305,697.26 L307,697.25 L309,697.24 L311,697.24 L313,697.23 L315,697.22 L317,697.21 L319,697.20 L321,697.19 L323,697.19 L325,697.18 L327,697.17 L329,697.16 L331,697.15 L333,697.14 L335,697.13 L337,697.12 L339,697.11 L341,697.10 L343,697.10 L345,697.09 L347,697.08 L349,697.07 L351,697.06 L353,697.05 L355,697.04 L357,697.03 L359,697.01 L361,697.00 L363,696.99 L365,696.98 L367,696.97 L369,696.96 L371,696.95 L373,696.94 L375,696.93 L377,696.92 L379,696.90 L381,696.89 L383,696.88 L385,696.87 L387,696.86 L389,696.84 L391,696.83 L393,696.82 L395,696.81 L397,696.79 L399,696.78 L401,696.77 L403,696.76 L405,696.74 L407,696.73 L409,696.72 L411,696.70 L413,696.69 L415,696.67 L417,696.66 L419,696.65 L421,696.63 L423,696.62 L425,696.60 L427,696.59 L429,696.57 L431,696.56 L433,696.54 L435,696.53 L437,696.51 L439,696.49 L441,696.48 L443,696.46 L445,696.45 L447,696.43 L449,696.41 L451,696.40 L453,696.38 L455,696.36 L457,696.34 L459,696.33 L461,696.31 L463,696.29 L465,696.27 L467,696.25 L469,696.23 L471,696.22 L473,696.20 L475,696.18 L477,696.16 L479,696.14 L481,696.12 L483,696.10 L485,696.08 L487,696.06 L489,696.04 L491,696.02 L493,695.99 L495,695.97 L497,695.95 L499,695.93 L501,695.91 L503,695.89 L505,695.86 L507,695.84 L509,695.82 L511,695.79 L513,695.77 L515,695.75 L517,695.72 L519,695.70 L521,695.67 L523,695.65 L525,695.62 L527,695.60 L529,695.57 L531,695.55 L533,695.52 L535,695.49 L537,695.47 L539,695.44 L541,695.41 L543,695.39 L545,695.36 L547,695.33 L549,695.30 L551,695.27 L553,695.24 L555,695.21 L557,695.18 L559,695.15 L561,695.12 L563,695.09 L565,695.06 L567,695.03 L569,695.00 L571,694.97 L573,694.93 L575,694.90 L577,694.87 L579,694.84 L581,694.80 L583,694.77 L585,694.73 L587,694.70 L589,694.66 L591,694.63 L593,694.59 L595,694.56 L597,694.52 L599,694.48 L601,694.44 L603,694.41 L605,694.37 L607,694.33 L609,694.29 L611,694.25 L613,694.21 L615,694.17 L617,694.13 L619,694.09 L621,694.05 L623,694.00 L625,693.96 L627,693.92 L629,693.87 L631,693.83 L633,693.79 L635,693.74 L637,693.70 L639,693.65 L641,693.60 L643,693.56 L645,693.51 L647,693.46 L649,693.41 L651,693.36 L653,693.31 L655,693.26 L657,693.21 L659,693.16 L661,693.11 L663,693.06 L665,693.01 L667,692.95 L669,692.90 L671,692.85 L673,692.79 L675,692.74 L677,692.68 L679,692.62 L681,692.56 L683,692.51 L685,692.45 L687,692.39 L689,692.33 L691,692.27 L693,692.21 L695,692.15 L697,692.08 L699,692.02 L701,691.96 L703,691.89 L705,691.83 L707,691.76 L709,691.69 L711,691.63 L713,691.56 L715,691.49 L717,691.42 L719,691.35 L721,691.28 L723,691.21 L725,691.14 L727,691.06 L729,690.99 L731,690.91 L733,690.84 L735,690.76 L737,690.69 L739,690.61 L741,690.53 L743,690.45 L745,690.37 L747,690.29 L749,690.20 L751,690.12 L753,690.04 L755,689.95 L757,689.87 L759,689.78 L761,689.69 L763,689.60 L765,689.51 L767,689.42 L769,689.33 L771,689.24 L773,689.15 L775,689.05 L777,688.96 L779,688.86 L781,688.76 L783,688.66 L785,688.56 L787,688.46 L789,688.36 L791,688.26 L793,688.16 L795,688.05 L797,687.94 L799,687.84 L801,687.73 L803,687.62 L805,687.51 L807,687.40 L809,687.28 L811,687.17 L813,687.05 L815,686.94 L817,686.82 L819,686.70 L821,686.58 L823,686.46 L825,686.33 L827,686.21 L829,686.08 L831,685.96 L833,685.83 L835,685.70 L837,685.57 L839,685.43 L841,685.30 L843,685.17 L845,685.03 L847,684.89 L849,684.75 L851,684.61 L853,684.47 L855,684.32 L857,684.18 L859,684.03 L861,683.88 L863,683.73 L865,683.58 L867,683.42 L869,683.27 L871,683.11 L873,682.95 L875,682.79 L877,682.63 L879,682.47 L881,682.30 L883,682.13 L885,681.96 L887,681.79 L889,681.62 L891,681.44 L893,681.27 L895,681.09 L897,680.91 L899,680.73 L901,680.54 L903,680.36 L905,680.17 L907,679.98 L909,679.79 L911,679.59 L913,679.40 L915,679.20 L917,679.00 L919,678.79 L921,678.59 L923,678.38 L925,678.17 L927,677.96 L929,677.75 L931,677.53 L933,677.31 L935,677.09 L937,676.87 L939,676.64 L941,676.42 L943,676.19 L945,675.95 L947,675.72 L948.0,675.60 L955.0,675.60 L949,675.60 L951,675.60 L953,675.60 L955,675.60 L957,675.84 L959,676.07 L961,676.30 L963,676.53 L965,676.76 L967,676.98 L969,677.20 L971,677.42 L973,677.64 L975,677.85 L977,678.07 L979,678.28 L981,678.49 L983,678.69 L985,678.90 L987,679.10 L989,679.30 L991,679.49 L993,679.69 L995,679.88 L997,680.07 L999,680.26 L1001,680.45 L1003,680.63 L1005,680.82 L1007,681.00 L1009,681.18 L1011,681.36 L1013,681.53 L1015,681.71 L1017,681.88 L1019,682.05 L1021,682.22 L1023,682.38 L1025,682.55 L1027,682.71 L1029,682.87 L1031,683.03 L1033,683.19 L1035,683.35 L1037,683.50 L1039,683.65 L1041,683.80 L1043,683.95 L1045,684.10 L1047,684.25 L1049,684.39 L1051,684.54 L1053,684.68 L1055,684.82 L1057,684.96 L1059,685.10 L1061,685.23 L1063,685.37 L1065,685.50 L1067,685.63 L1069,685.76 L1071,685.89 L1073,686.02 L1075,686.15 L1077,686.27 L1079,686.40 L1081,686.52 L1083,686.64 L1085,686.76 L1087,686.88 L1089,687.00 L1091,687.11 L1093,687.23 L1095,687.34 L1097,687.45 L1099,687.56 L1101,687.67 L1103,687.78 L1105,687.89 L1107,688.00 L1109,688.10 L1111,688.21 L1113,688.31 L1115,688.41 L1117,688.51 L1119,688.61 L1121,688.71 L1123,688.81 L1125,688.91 L1127,689.00 L1129,689.10 L1131,689.19 L1133,689.29 L1135,689.38 L1137,689.47 L1139,689.56 L1141,689.65 L1143,689.74 L1145,689.82 L1147,689.91 L1149,689.99 L1151,690.08 L1153,690.16 L1155,690.25 L1157,690.33 L1159,690.41 L1161,690.49 L1163,690.57 L1165,690.65 L1167,690.72 L1169,690.80 L1171,690.88 L1173,690.95 L1175,691.03 L1177,691.10 L1179,691.17 L1181,691.24 L1183,691.32 L1185,691.39 L1187,691.46 L1189,691.53 L1191,691.59 L1193,691.66 L1195,691.73 L1197,691.79 L1199,691.86 L1201,691.92 L1203,691.99 L1205,692.05 L1207,692.11 L1209,692.18 L1211,692.24 L1213,692.30 L1215,692.36 L1217,692.42 L1219,692.48 L1221,692.54 L1223,692.59 L1225,692.65 L1227,692.71 L1229,692.76 L1231,692.82 L1233,692.87 L1235,692.93 L1237,692.98 L1239,693.03 L1241,693.09 L1243,693.14 L1245,693.19 L1247,693.24 L1249,693.29 L1251,693.34 L1253,693.39 L1255,693.44 L1257,693.49 L1259,693.53 L1261,693.58 L1263,693.63 L1265,693.67 L1267,693.72 L1269,693.76 L1271,693.81 L1273,693.85 L1275,693.90 L1277,693.94 L1279,693.98 L1281,694.03 L1283,694.07 L1285,694.11 L1287,694.15 L1289,694.19 L1291,694.23 L1293,694.27 L1295,694.31 L1297,694.35 L1299,694.39 L1301,694.43 L1303,694.46 L1305,694.50 L1307,694.54 L1309,694.57 L1311,694.61 L1313,694.65 L1315,694.68 L1317,694.72 L1319,694.75 L1321,694.79 L1323,694.82 L1325,694.85 L1327,694.89 L1329,694.92 L1331,694.95 L1333,694.98 L1335,695.02 L1337,695.05 L1339,695.08 L1341,695.11 L1343,695.14 L1345,695.17 L1347,695.20 L1349,695.23 L1351,695.26 L1353,695.29 L1355,695.32 L1357,695.34 L1359,695.37 L1361,695.40 L1363,695.43 L1365,695.45 L1367,695.48 L1369,695.51 L1371,695.53 L1373,695.56 L1375,695.59 L1377,695.61 L1379,695.64 L1381,695.66 L1383,695.69 L1385,695.71 L1387,695.73 L1389,695.76 L1391,695.78 L1393,695.81 L1395,695.83 L1397,695.85 L1399,695.87 L1401,695.90 L1403,695.92 L1405,695.94 L1407,695.96 L1409,695.98 L1411,696.01 L1413,696.03 L1415,696.05 L1417,696.07 L1419,696.09 L1421,696.11 L1423,696.13 L1425,696.15 L1427,696.17 L1429,696.19 L1431,696.21 L1433,696.23 L1435,696.24 L1437,696.26 L1439,696.28 L1441,696.30 L1443,696.32 L1445,696.33 L1447,696.35 L1449,696.37 L1451,696.39 L1453,696.40 L1455,696.42 L1457,696.44 L1459,696.45 L1461,696.47 L1463,696.49 L1465,696.50 L1467,696.52 L1469,696.53 L1471,696.55 L1473,696.56 L1475,696.58 L1477,696.59 L1479,696.61 L1481,696.62 L1483,696.64 L1485,696.65 L1487,696.67 L1489,696.68 L1491,696.70 L1493,696.71 L1495,696.72 L1497,696.74 L1499,696.75 L1501,696.76 L1503,696.78 L1505,696.79 L1507,696.80 L1509,696.81 L1511,696.83 L1513,696.84 L1515,696.85 L1517,696.86 L1519,696.88 L1521,696.89 L1523,696.90 L1525,696.91 L1527,696.92 L1529,696.93 L1531,696.94 L1533,696.96 L1535,696.97 L1537,696.98 L1539,696.99 L1541,697.00 L1543,697.01 L1545,697.02 L1547,697.03 L1549,697.04 L1551,697.05 L1553,697.06 L1555,697.07 L1557,697.08 L1559,697.09 L1561,697.10 L1563,697.11 L1565,697.12 L1567,697.13 L1569,697.14 L1571,697.15 L1573,697.16 L1575,697.16 L1577,697.17 L1579,697.18 L1581,697.19 L1583,697.20 L1585,697.21 L1587,697.22 L1589,697.22 L1591,697.23 L1593,697.24 L1595,697.25 L1597,697.26 L1599,697.26 L1601,697.27 L1603,697.28 L1605,697.29 L1607,697.29 L1609,697.30 L1611,697.31 L1613,697.32 L1615,697.32 L1617,697.33 L1619,697.34 L1621,697.35 L1623,697.35 L1625,697.36 L1627,697.37 L1629,697.37 L1631,697.38 L1633,697.39 L1635,697.39 L1637,697.40 L1639,697.40 L1641,697.41 L1643,697.42 L1645,697.42 L1647,697.43 L1649,697.44 L1651,697.44 L1653,697.45 L1655,697.45 L1657,697.46 L1659,697.46 L1661,697.47 L1663,697.48 L1665,697.48 L1667,697.49 L1669,697.49 L1671,697.50 L1673,697.50 L1675,697.51 L1677,697.51 L1679,697.52 L1681,697.52 L1683,697.53 L1685,697.53 L1687,697.54 L1689,697.54 L1691,697.55 L1693,697.55 L1695,697.56 L1697,697.56 L1699,697.57 L1701,697.57 L1703,697.58 L1705,697.58 L1707,697.59 L1709,697.59 L1711,697.59 L1713,697.60 L1715,697.60 L1717,697.61 L1719,697.61 L1721,697.61 L1723,697.62 L1725,697.62 L1727,697.63 L1729,697.63 L1731,697.63" fill="none" stroke="#a8a8a8" stroke-width="1.8"/>
<path d="M175,697.23 L177,697.22 L179,697.21 L181,697.21 L183,697.20 L185,697.19 L187,697.18 L189,697.17 L191,697.16 L193,697.15 L195,697.14 L197,697.14 L199,697.13 L201,697.12 L203,697.11 L205,697.10 L207,697.09 L209,697.08 L211,697.07 L213,697.06 L215,697.05 L217,697.04 L219,697.03 L221,697.02 L223,697.01 L225,697.00 L227,696.99 L229,696.98 L231,696.97 L233,696.95 L235,696.94 L237,696.93 L239,696.92 L241,696.91 L243,696.90 L245,696.89 L247,696.87 L249,696.86 L251,696.85 L253,696.84 L255,696.82 L257,696.81 L259,696.80 L261,696.79 L263,696.77 L265,696.76 L267,696.75 L269,696.73 L271,696.72 L273,696.71 L275,696.69 L277,696.68 L279,696.67 L281,696.65 L283,696.64 L285,696.62 L287,696.61 L289,696.59 L291,696.58 L293,696.56 L295,696.55 L297,696.53 L299,696.52 L301,696.50 L303,696.48 L305,696.47 L307,696.45 L309,696.43 L311,696.42 L313,696.40 L315,696.38 L317,696.37 L319,696.35 L321,696.33 L323,696.31 L325,696.30 L327,696.28 L329,696.26 L331,696.24 L333,696.22 L335,696.20 L337,696.18 L339,696.16 L341,696.15 L343,696.13 L345,696.11 L347,696.09 L349,696.06 L351,696.04 L353,696.02 L355,696.00 L357,695.98 L359,695.96 L361,695.94 L363,695.92 L365,695.89 L367,695.87 L369,695.85 L371,695.83 L373,695.80 L375,695.78 L377,695.75 L379,695.73 L381,695.71 L383,695.68 L385,695.66 L387,695.63 L389,695.61 L391,695.58 L393,695.56 L395,695.53 L397,695.50 L399,695.48 L401,695.45 L403,695.42 L405,695.40 L407,695.37 L409,695.34 L411,695.31 L413,695.28 L415,695.25 L417,695.22 L419,695.19 L421,695.16 L423,695.13 L425,695.10 L427,695.07 L429,695.04 L431,695.01 L433,694.98 L435,694.95 L437,694.91 L439,694.88 L441,694.85 L443,694.81 L445,694.78 L447,694.75 L449,694.71 L451,694.68 L453,694.64 L455,694.60 L457,694.57 L459,694.53 L461,694.49 L463,694.46 L465,694.42 L467,694.38 L469,694.34 L471,694.30 L473,694.26 L475,694.22 L477,694.18 L479,694.14 L481,694.10 L483,694.06 L485,694.02 L487,693.98 L489,693.93 L491,693.89 L493,693.85 L495,693.80 L497,693.76 L499,693.71 L501,693.67 L503,693.62 L505,693.57 L507,693.53 L509,693.48 L511,693.43 L513,693.38 L515,693.33 L517,693.28 L519,693.23 L521,693.18 L523,693.13 L525,693.08 L527,693.03 L529,692.97 L531,692.92 L533,692.86 L535,692.81 L537,692.75 L539,692.70 L541,692.64 L543,692.58 L545,692.53 L547,692.47 L549,692.41 L551,692.35 L553,692.29 L555,692.23 L557,692.17 L559,692.11 L561,692.04 L563,691.98 L565,691.91 L567,691.85 L569,691.78 L571,691.72 L573,691.65 L575,691.58 L577,691.51 L579,691.45 L581,691.38 L583,691.31 L585,691.23 L587,691.16 L589,691.09 L591,691.01 L593,690.94 L595,690.87 L597,690.79 L599,690.71 L601,690.63 L603,690.56 L605,690.48 L607,690.40 L609,690.32 L611,690.23 L613,690.15 L615,690.07 L617,689.98 L619,689.90 L621,689.81 L623,689.72 L625,689.63 L627,689.55 L629,689.46 L631,689.36 L633,689.27 L635,689.18 L637,689.08 L639,688.99 L641,688.89 L643,688.80 L645,688.70 L647,688.60 L649,688.50 L651,688.40 L653,688.30 L655,688.19 L657,688.09 L659,687.98 L661,687.87 L663,687.77 L665,687.66 L667,687.55 L669,687.44 L671,687.32 L673,687.21 L675,687.09 L677,686.98 L679,686.86 L681,686.74 L683,686.62 L685,686.50 L687,686.38 L689,686.25 L691,686.13 L693,686.00 L695,685.87 L697,685.74 L699,685.61 L701,685.48 L703,685.35 L705,685.21 L707,685.08 L709,684.94 L711,684.80 L713,684.66 L715,684.52 L717,684.37 L719,684.23 L721,684.08 L723,683.93 L725,683.78 L727,683.63 L729,683.48 L731,683.32 L733,683.17 L735,683.01 L737,682.85 L739,682.69 L741,682.52 L743,682.36 L745,682.19 L747,682.02 L749,681.85 L751,681.68 L753,681.51 L755,681.33 L757,681.15 L759,680.97 L761,680.79 L763,680.61 L765,680.42 L767,680.23 L769,680.04 L771,679.85 L773,679.66 L775,679.46 L777,679.27 L779,679.07 L781,678.86 L783,678.66 L785,678.45 L787,678.25 L789,678.04 L791,677.82 L793,677.61 L795,677.39 L797,677.17 L799,676.95 L801,676.72 L803,676.50 L805,676.27 L807,676.04 L809,675.80 L811,675.56 L813,675.33 L815,675.08 L817,674.84 L819,674.59 L821,674.34 L823,674.09 L825,673.83 L827,673.58 L829,673.32 L831,673.05 L833,672.79 L835,672.52 L837,672.25 L839,671.97 L841,671.69 L843,671.41 L845,671.13 L847,670.84 L849,670.55 L851,670.26 L853,669.97 L855,669.67 L857,669.36 L859,669.06 L861,668.75 L863,668.44 L865,668.12 L867,667.81 L869,667.48 L871,667.16 L873,666.83 L875,666.50 L877,666.16 L879,665.82 L881,665.48 L883,665.13 L885,664.78 L887,664.43 L889,664.07 L891,663.71 L893,663.34 L895,662.97 L897,662.60 L899,662.22 L901,661.84 L903,661.45 L905,661.06 L907,660.67 L909,660.27 L911,659.87 L913,659.46 L915,659.05 L917,658.64 L919,658.22 L921,657.79 L923,657.36 L925,656.93 L927,656.49 L929,656.05 L931,655.60 L933,655.15 L935,654.69 L937,654.23 L939,653.76 L941,653.29 L943,652.81 L945,652.33 L947,651.85 L948.0,651.60 L955.0,651.60 L949,651.60 L951,651.60 L953,651.60 L955,651.60 L957,652.09 L959,652.57 L961,653.05 L963,653.53 L965,654.00 L967,654.46 L969,654.92 L971,655.38 L973,655.83 L975,656.27 L977,656.71 L979,657.15 L981,657.58 L983,658.00 L985,658.43 L987,658.84 L989,659.26 L991,659.67 L993,660.07 L995,660.47 L997,660.87 L999,661.26 L1001,661.65 L1003,662.03 L1005,662.41 L1007,662.78 L1009,663.16 L1011,663.52 L1013,663.89 L1015,664.25 L1017,664.60 L1019,664.96 L1021,665.30 L1023,665.65 L1025,665.99 L1027,666.33 L1029,666.66 L1031,666.99 L1033,667.32 L1035,667.64 L1037,667.96 L1039,668.28 L1041,668.60 L1043,668.91 L1045,669.21 L1047,669.52 L1049,669.82 L1051,670.11 L1053,670.41 L1055,670.70 L1057,670.99 L1059,671.27 L1061,671.55 L1063,671.83 L1065,672.11 L1067,672.38 L1069,672.65 L1071,672.92 L1073,673.19 L1075,673.45 L1077,673.71 L1079,673.96 L1081,674.22 L1083,674.47 L1085,674.72 L1087,674.96 L1089,675.20 L1091,675.45 L1093,675.68 L1095,675.92 L1097,676.15 L1099,676.38 L1101,676.61 L1103,676.84 L1105,677.06 L1107,677.28 L1109,677.50 L1111,677.72 L1113,677.93 L1115,678.14 L1117,678.35 L1119,678.56 L1121,678.76 L1123,678.97 L1125,679.17 L1127,679.37 L1129,679.56 L1131,679.76 L1133,679.95 L1135,680.14 L1137,680.33 L1139,680.51 L1141,680.70 L1143,680.88 L1145,681.06 L1147,681.24 L1149,681.42 L1151,681.59 L1153,681.77 L1155,681.94 L1157,682.11 L1159,682.27 L1161,682.44 L1163,682.60 L1165,682.77 L1167,682.93 L1169,683.09 L1171,683.24 L1173,683.40 L1175,683.55 L1177,683.71 L1179,683.86 L1181,684.01 L1183,684.15 L1185,684.30 L1187,684.44 L1189,684.59 L1191,684.73 L1193,684.87 L1195,685.01 L1197,685.15 L1199,685.28 L1201,685.41 L1203,685.55 L1205,685.68 L1207,685.81 L1209,685.94 L1211,686.06 L1213,686.19 L1215,686.32 L1217,686.44 L1219,686.56 L1221,686.68 L1223,686.80 L1225,686.92 L1227,687.04 L1229,687.15 L1231,687.27 L1233,687.38 L1235,687.49 L1237,687.60 L1239,687.71 L1241,687.82 L1243,687.93 L1245,688.03 L1247,688.14 L1249,688.24 L1251,688.35 L1253,688.45 L1255,688.55 L1257,688.65 L1259,688.75 L1261,688.85 L1263,688.94 L1265,689.04 L1267,689.13 L1269,689.23 L1271,689.32 L1273,689.41 L1275,689.50 L1277,689.59 L1279,689.68 L1281,689.77 L1283,689.85 L1285,689.94 L1287,690.02 L1289,690.11 L1291,690.19 L1293,690.27 L1295,690.36 L1297,690.44 L1299,690.52 L1301,690.60 L1303,690.67 L1305,690.75 L1307,690.83 L1309,690.90 L1311,690.98 L1313,691.05 L1315,691.13 L1317,691.20 L1319,691.27 L1321,691.34 L1323,691.41 L1325,691.48 L1327,691.55 L1329,691.62 L1331,691.68 L1333,691.75 L1335,691.82 L1337,691.88 L1339,691.95 L1341,692.01 L1343,692.07 L1345,692.14 L1347,692.20 L1349,692.26 L1351,692.32 L1353,692.38 L1355,692.44 L1357,692.50 L1359,692.56 L1361,692.61 L1363,692.67 L1365,692.73 L1367,692.78 L1369,692.84 L1371,692.89 L1373,692.95 L1375,693.00 L1377,693.05 L1379,693.10 L1381,693.16 L1383,693.21 L1385,693.26 L1387,693.31 L1389,693.36 L1391,693.41 L1393,693.45 L1395,693.50 L1397,693.55 L1399,693.60 L1401,693.64 L1403,693.69 L1405,693.73 L1407,693.78 L1409,693.82 L1411,693.87 L1413,693.91 L1415,693.96 L1417,694.00 L1419,694.04 L1421,694.08 L1423,694.12 L1425,694.16 L1427,694.20 L1429,694.24 L1431,694.28 L1433,694.32 L1435,694.36 L1437,694.40 L1439,694.44 L1441,694.48 L1443,694.51 L1445,694.55 L1447,694.59 L1449,694.62 L1451,694.66 L1453,694.69 L1455,694.73 L1457,694.76 L1459,694.80 L1461,694.83 L1463,694.86 L1465,694.90 L1467,694.93 L1469,694.96 L1471,694.99 L1473,695.03 L1475,695.06 L1477,695.09 L1479,695.12 L1481,695.15 L1483,695.18 L1485,695.21 L1487,695.24 L1489,695.27 L1491,695.30 L1493,695.33 L1495,695.35 L1497,695.38 L1499,695.41 L1501,695.44 L1503,695.46 L1505,695.49 L1507,695.52 L1509,695.54 L1511,695.57 L1513,695.59 L1515,695.62 L1517,695.65 L1519,695.67 L1521,695.69 L1523,695.72 L1525,695.74 L1527,695.77 L1529,695.79 L1531,695.81 L1533,695.84 L1535,695.86 L1537,695.88 L1539,695.90 L1541,695.93 L1543,695.95 L1545,695.97 L1547,695.99 L1549,696.01 L1551,696.03 L1553,696.05 L1555,696.08 L1557,696.10 L1559,696.12 L1561,696.14 L1563,696.16 L1565,696.17 L1567,696.19 L1569,696.21 L1571,696.23 L1573,696.25 L1575,696.27 L1577,696.29 L1579,696.31 L1581,696.32 L1583,696.34 L1585,696.36 L1587,696.38 L1589,696.39 L1591,696.41 L1593,696.43 L1595,696.44 L1597,696.46 L1599,696.48 L1601,696.49 L1603,696.51 L1605,696.52 L1607,696.54 L1609,696.55 L1611,696.57 L1613,696.58 L1615,696.60 L1617,696.61 L1619,696.63 L1621,696.64 L1623,696.66 L1625,696.67 L1627,696.69 L1629,696.70 L1631,696.71 L1633,696.73 L1635,696.74 L1637,696.75 L1639,696.77 L1641,696.78 L1643,696.79 L1645,696.81 L1647,696.82 L1649,696.83 L1651,696.84 L1653,696.86 L1655,696.87 L1657,696.88 L1659,696.89 L1661,696.90 L1663,696.91 L1665,696.93 L1667,696.94 L1669,696.95 L1671,696.96 L1673,696.97 L1675,696.98 L1677,696.99 L1679,697.00 L1681,697.01 L1683,697.02 L1685,697.03 L1687,697.04 L1689,697.05 L1691,697.06 L1693,697.07 L1695,697.08 L1697,697.09 L1699,697.10 L1701,697.11 L1703,697.12 L1705,697.13 L1707,697.14 L1709,697.15 L1711,697.16 L1713,697.17 L1715,697.18 L1717,697.18 L1719,697.19 L1721,697.20 L1723,697.21 L1725,697.22 L1727,697.23 L1729,697.24 L1731,697.24" fill="none" stroke="#28c428" stroke-width="1.8"/>
<path d="M175,696.45 L177,696.43 L179,696.42 L181,696.40 L183,696.38 L185,696.36 L187,696.35 L189,696.33 L191,696.31 L193,696.29 L195,696.28 L197,696.26 L199,696.24 L201,696.22 L203,696.20 L205,696.18 L207,696.16 L209,696.14 L211,696.12 L213,696.10 L215,696.08 L217,696.06 L219,696.04 L221,696.02 L223,696.00 L225,695.98 L227,695.96 L229,695.93 L231,695.91 L233,695.89 L235,695.87 L237,695.84 L239,695.82 L241,695.80 L243,695.78 L245,695.75 L247,695.73 L249,695.70 L251,695.68 L253,695.65 L255,695.63 L257,695.60 L259,695.58 L261,695.55 L263,695.53 L265,695.50 L267,695.47 L269,695.45 L271,695.42 L273,695.39 L275,695.36 L277,695.34 L279,695.31 L281,695.28 L283,695.25 L285,695.22 L287,695.19 L289,695.16 L291,695.13 L293,695.10 L295,695.07 L297,695.04 L299,695.01 L301,694.97 L303,694.94 L305,694.91 L307,694.88 L309,694.84 L311,694.81 L313,694.77 L315,694.74 L317,694.71 L319,694.67 L321,694.64 L323,694.60 L325,694.56 L327,694.53 L329,694.49 L331,694.45 L333,694.41 L335,694.38 L337,694.34 L339,694.30 L341,694.26 L343,694.22 L345,694.18 L347,694.14 L349,694.10 L351,694.05 L353,694.01 L355,693.97 L357,693.93 L359,693.88 L361,693.84 L363,693.80 L365,693.75 L367,693.71 L369,693.66 L371,693.61 L373,693.57 L375,693.52 L377,693.47 L379,693.42 L381,693.37 L383,693.32 L385,693.27 L387,693.22 L389,693.17 L391,693.12 L393,693.07 L395,693.02 L397,692.96 L399,692.91 L401,692.86 L403,692.80 L405,692.75 L407,692.69 L409,692.63 L411,692.58 L413,692.52 L415,692.46 L417,692.40 L419,692.34 L421,692.28 L423,692.22 L425,692.16 L427,692.10 L429,692.03 L431,691.97 L433,691.90 L435,691.84 L437,691.77 L439,691.71 L441,691.64 L443,691.57 L445,691.50 L447,691.44 L449,691.37 L451,691.29 L453,691.22 L455,691.15 L457,691.08 L459,691.00 L461,690.93 L463,690.85 L465,690.78 L467,690.70 L469,690.62 L471,690.54 L473,690.46 L475,690.38 L477,690.30 L479,690.22 L481,690.14 L483,690.05 L485,689.97 L487,689.88 L489,689.80 L491,689.71 L493,689.62 L495,689.53 L497,689.44 L499,689.35 L501,689.26 L503,689.16 L505,689.07 L507,688.98 L509,688.88 L511,688.78 L513,688.68 L515,688.58 L517,688.48 L519,688.38 L521,688.28 L523,688.18 L525,688.07 L527,687.97 L529,687.86 L531,687.75 L533,687.64 L535,687.53 L537,687.42 L539,687.31 L541,687.19 L543,687.08 L545,686.96 L547,686.84 L549,686.72 L551,686.60 L553,686.48 L555,686.36 L557,686.23 L559,686.11 L561,685.98 L563,685.85 L565,685.72 L567,685.59 L569,685.46 L571,685.33 L573,685.19 L575,685.06 L577,684.92 L579,684.78 L581,684.64 L583,684.49 L585,684.35 L587,684.21 L589,684.06 L591,683.91 L593,683.76 L595,683.61 L597,683.45 L599,683.30 L601,683.14 L603,682.98 L605,682.82 L607,682.66 L609,682.50 L611,682.33 L613,682.17 L615,682.00 L617,681.83 L619,681.65 L621,681.48 L623,681.30 L625,681.12 L627,680.94 L629,680.76 L631,680.58 L633,680.39 L635,680.21 L637,680.02 L639,679.82 L641,679.63 L643,679.43 L645,679.24 L647,679.04 L649,678.83 L651,678.63 L653,678.42 L655,678.21 L657,678.00 L659,677.79 L661,677.57 L663,677.36 L665,677.14 L667,676.91 L669,676.69 L671,676.46 L673,676.23 L675,676.00 L677,675.77 L679,675.53 L681,675.29 L683,675.05 L685,674.80 L687,674.55 L689,674.30 L691,674.05 L693,673.80 L695,673.54 L697,673.28 L699,673.01 L701,672.75 L703,672.48 L705,672.21 L707,671.93 L709,671.65 L711,671.37 L713,671.09 L715,670.80 L717,670.51 L719,670.22 L721,669.92 L723,669.62 L725,669.32 L727,669.01 L729,668.70 L731,668.39 L733,668.08 L735,667.76 L737,667.43 L739,667.11 L741,666.78 L743,666.45 L745,666.11 L747,665.77 L749,665.43 L751,665.08 L753,664.73 L755,664.37 L757,664.01 L759,663.65 L761,663.28 L763,662.91 L765,662.54 L767,662.16 L769,661.78 L771,661.39 L773,661.00 L775,660.61 L777,660.21 L779,659.81 L781,659.40 L783,658.99 L785,658.57 L787,658.15 L789,657.73 L791,657.30 L793,656.86 L795,656.42 L797,655.98 L799,655.53 L801,655.08 L803,654.62 L805,654.16 L807,653.69 L809,653.22 L811,652.74 L813,652.26 L815,651.77 L817,651.28 L819,650.78 L821,650.28 L823,649.77 L825,649.25 L827,648.73 L829,648.21 L831,647.68 L833,647.14 L835,646.60 L837,646.05 L839,645.50 L841,644.94 L843,644.37 L845,643.80 L847,643.22 L849,642.64 L851,642.05 L853,641.45 L855,640.85 L857,640.24 L859,639.62 L861,639.00 L863,638.37 L865,637.73 L867,637.09 L869,636.44 L871,635.78 L873,635.12 L875,634.45 L877,633.77 L879,633.09 L881,632.39 L883,631.69 L885,630.99 L887,630.27 L889,629.55 L891,628.82 L893,628.08 L895,627.34 L897,626.58 L899,625.82 L901,625.05 L903,624.27 L905,623.49 L907,622.69 L909,621.89 L911,621.08 L913,620.26 L915,619.43 L917,618.59 L919,617.74 L921,616.89 L923,616.02 L925,615.15 L927,614.27 L929,613.37 L931,612.47 L933,611.56 L935,610.64 L937,609.70 L939,608.76 L941,607.81 L943,606.85 L945,605.88 L947,604.90 L948.0,604.40 L955.0,604.40 L949,604.40 L951,604.40 L953,604.40 L955,604.40 L957,605.39 L959,606.36 L961,607.33 L963,608.29 L965,609.24 L967,610.17 L969,611.10 L971,612.02 L973,612.92 L975,613.82 L977,614.71 L979,615.59 L981,616.46 L983,617.32 L985,618.17 L987,619.01 L989,619.84 L991,620.67 L993,621.49 L995,622.29 L997,623.09 L999,623.88 L1001,624.66 L1003,625.44 L1005,626.20 L1007,626.96 L1009,627.71 L1011,628.45 L1013,629.19 L1015,629.91 L1017,630.63 L1019,631.34 L1021,632.05 L1023,632.74 L1025,633.43 L1027,634.11 L1029,634.79 L1031,635.45 L1033,636.11 L1035,636.77 L1037,637.41 L1039,638.05 L1041,638.68 L1043,639.31 L1045,639.93 L1047,640.54 L1049,641.15 L1051,641.75 L1053,642.34 L1055,642.93 L1057,643.51 L1059,644.08 L1061,644.65 L1063,645.22 L1065,645.77 L1067,646.32 L1069,646.87 L1071,647.41 L1073,647.94 L1075,648.47 L1077,648.99 L1079,649.51 L1081,650.02 L1083,650.53 L1085,651.03 L1087,651.53 L1089,652.02 L1091,652.50 L1093,652.98 L1095,653.46 L1097,653.93 L1099,654.39 L1101,654.85 L1103,655.31 L1105,655.76 L1107,656.20 L1109,656.64 L1111,657.08 L1113,657.51 L1115,657.94 L1117,658.36 L1119,658.78 L1121,659.19 L1123,659.60 L1125,660.01 L1127,660.41 L1129,660.81 L1131,661.20 L1133,661.59 L1135,661.97 L1137,662.35 L1139,662.73 L1141,663.10 L1143,663.47 L1145,663.83 L1147,664.19 L1149,664.55 L1151,664.90 L1153,665.25 L1155,665.60 L1157,665.94 L1159,666.28 L1161,666.61 L1163,666.94 L1165,667.27 L1167,667.60 L1169,667.92 L1171,668.23 L1173,668.55 L1175,668.86 L1177,669.17 L1179,669.47 L1181,669.77 L1183,670.07 L1185,670.36 L1187,670.66 L1189,670.94 L1191,671.23 L1193,671.51 L1195,671.79 L1197,672.07 L1199,672.34 L1201,672.61 L1203,672.88 L1205,673.15 L1207,673.41 L1209,673.67 L1211,673.92 L1213,674.18 L1215,674.43 L1217,674.68 L1219,674.92 L1221,675.17 L1223,675.41 L1225,675.65 L1227,675.88 L1229,676.12 L1231,676.35 L1233,676.58 L1235,676.80 L1237,677.03 L1239,677.25 L1241,677.47 L1243,677.68 L1245,677.90 L1247,678.11 L1249,678.32 L1251,678.53 L1253,678.73 L1255,678.94 L1257,679.14 L1259,679.34 L1261,679.53 L1263,679.73 L1265,679.92 L1267,680.11 L1269,680.30 L1271,680.49 L1273,680.67 L1275,680.85 L1277,681.04 L1279,681.21 L1281,681.39 L1283,681.57 L1285,681.74 L1287,681.91 L1289,682.08 L1291,682.25 L1293,682.42 L1295,682.58 L1297,682.74 L1299,682.90 L1301,683.06 L1303,683.22 L1305,683.38 L1307,683.53 L1309,683.68 L1311,683.83 L1313,683.98 L1315,684.13 L1317,684.28 L1319,684.42 L1321,684.57 L1323,684.71 L1325,684.85 L1327,684.99 L1329,685.12 L1331,685.26 L1333,685.39 L1335,685.53 L1337,685.66 L1339,685.79 L1341,685.92 L1343,686.05 L1345,686.17 L1347,686.30 L1349,686.42 L1351,686.54 L1353,686.66 L1355,686.78 L1357,686.90 L1359,687.02 L1361,687.13 L1363,687.25 L1365,687.36 L1367,687.47 L1369,687.59 L1371,687.70 L1373,687.80 L1375,687.91 L1377,688.02 L1379,688.12 L1381,688.23 L1383,688.33 L1385,688.43 L1387,688.53 L1389,688.63 L1391,688.73 L1393,688.83 L1395,688.93 L1397,689.02 L1399,689.12 L1401,689.21 L1403,689.30 L1405,689.40 L1407,689.49 L1409,689.58 L1411,689.67 L1413,689.75 L1415,689.84 L1417,689.93 L1419,690.01 L1421,690.10 L1423,690.18 L1425,690.26 L1427,690.34 L1429,690.42 L1431,690.50 L1433,690.58 L1435,690.66 L1437,690.74 L1439,690.82 L1441,690.89 L1443,690.97 L1445,691.04 L1447,691.11 L1449,691.19 L1451,691.26 L1453,691.33 L1455,691.40 L1457,691.47 L1459,691.54 L1461,691.61 L1463,691.67 L1465,691.74 L1467,691.81 L1469,691.87 L1471,691.94 L1473,692.00 L1475,692.06 L1477,692.13 L1479,692.19 L1481,692.25 L1483,692.31 L1485,692.37 L1487,692.43 L1489,692.49 L1491,692.55 L1493,692.60 L1495,692.66 L1497,692.72 L1499,692.77 L1501,692.83 L1503,692.88 L1505,692.94 L1507,692.99 L1509,693.04 L1511,693.10 L1513,693.15 L1515,693.20 L1517,693.25 L1519,693.30 L1521,693.35 L1523,693.40 L1525,693.45 L1527,693.50 L1529,693.54 L1531,693.59 L1533,693.64 L1535,693.68 L1537,693.73 L1539,693.77 L1541,693.82 L1543,693.86 L1545,693.91 L1547,693.95 L1549,693.99 L1551,694.03 L1553,694.08 L1555,694.12 L1557,694.16 L1559,694.20 L1561,694.24 L1563,694.28 L1565,694.32 L1567,694.36 L1569,694.39 L1571,694.43 L1573,694.47 L1575,694.51 L1577,694.54 L1579,694.58 L1581,694.62 L1583,694.65 L1585,694.69 L1587,694.72 L1589,694.76 L1591,694.79 L1593,694.83 L1595,694.86 L1597,694.89 L1599,694.93 L1601,694.96 L1603,694.99 L1605,695.02 L1607,695.05 L1609,695.08 L1611,695.11 L1613,695.15 L1615,695.18 L1617,695.21 L1619,695.23 L1621,695.26 L1623,695.29 L1625,695.32 L1627,695.35 L1629,695.38 L1631,695.41 L1633,695.43 L1635,695.46 L1637,695.49 L1639,695.51 L1641,695.54 L1643,695.57 L1645,695.59 L1647,695.62 L1649,695.64 L1651,695.67 L1653,695.69 L1655,695.72 L1657,695.74 L1659,695.76 L1661,695.79 L1663,695.81 L1665,695.83 L1667,695.86 L1669,695.88 L1671,695.90 L1673,695.92 L1675,695.95 L1677,695.97 L1679,695.99 L1681,696.01 L1683,696.03 L1685,696.05 L1687,696.07 L1689,696.09 L1691,696.11 L1693,696.13 L1695,696.15 L1697,696.17 L1699,696.19 L1701,696.21 L1703,696.23 L1705,696.25 L1707,696.27 L1709,696.28 L1711,696.30 L1713,696.32 L1715,696.34 L1717,696.36 L1719,696.37 L1721,696.39 L1723,696.41 L1725,696.42 L1727,696.44 L1729,696.46 L1731,696.47" fill="none" stroke="#d42a3c" stroke-width="1.6"/>
<path d="M175,694.90 L177,694.87 L179,694.83 L181,694.80 L183,694.77 L185,694.73 L187,694.70 L189,694.66 L191,694.63 L193,694.59 L195,694.55 L197,694.52 L199,694.48 L201,694.44 L203,694.40 L205,694.37 L207,694.33 L209,694.29 L211,694.25 L213,694.21 L215,694.17 L217,694.13 L219,694.09 L221,694.04 L223,694.00 L225,693.96 L227,693.92 L229,693.87 L231,693.83 L233,693.78 L235,693.74 L237,693.69 L239,693.65 L241,693.60 L243,693.55 L245,693.51 L247,693.46 L249,693.41 L251,693.36 L253,693.31 L255,693.26 L257,693.21 L259,693.16 L261,693.11 L263,693.06 L265,693.00 L267,692.95 L269,692.90 L271,692.84 L273,692.79 L275,692.73 L277,692.68 L279,692.62 L281,692.56 L283,692.50 L285,692.45 L287,692.39 L289,692.33 L291,692.27 L293,692.21 L295,692.14 L297,692.08 L299,692.02 L301,691.95 L303,691.89 L305,691.82 L307,691.76 L309,691.69 L311,691.62 L313,691.56 L315,691.49 L317,691.42 L319,691.35 L321,691.28 L323,691.21 L325,691.13 L327,691.06 L329,690.99 L331,690.91 L333,690.84 L335,690.76 L337,690.68 L339,690.60 L341,690.52 L343,690.45 L345,690.36 L347,690.28 L349,690.20 L351,690.12 L353,690.03 L355,689.95 L357,689.86 L359,689.78 L361,689.69 L363,689.60 L365,689.51 L367,689.42 L369,689.33 L371,689.24 L373,689.14 L375,689.05 L377,688.95 L379,688.86 L381,688.76 L383,688.66 L385,688.56 L387,688.46 L389,688.36 L391,688.25 L393,688.15 L395,688.05 L397,687.94 L399,687.83 L401,687.72 L403,687.61 L405,687.50 L407,687.39 L409,687.28 L411,687.16 L413,687.05 L415,686.93 L417,686.81 L419,686.69 L421,686.57 L423,686.45 L425,686.33 L427,686.20 L429,686.08 L431,685.95 L433,685.82 L435,685.69 L437,685.56 L439,685.43 L441,685.30 L443,685.16 L445,685.02 L447,684.88 L449,684.74 L451,684.60 L453,684.46 L455,684.32 L457,684.17 L459,684.02 L461,683.87 L463,683.72 L465,683.57 L467,683.42 L469,683.26 L471,683.10 L473,682.95 L475,682.78 L477,682.62 L479,682.46 L481,682.29 L483,682.12 L485,681.96 L487,681.78 L489,681.61 L491,681.44 L493,681.26 L495,681.08 L497,680.90 L499,680.72 L501,680.53 L503,680.35 L505,680.16 L507,679.97 L509,679.78 L511,679.58 L513,679.39 L515,679.19 L517,678.99 L519,678.78 L521,678.58 L523,678.37 L525,678.16 L527,677.95 L529,677.74 L531,677.52 L533,677.30 L535,677.08 L537,676.86 L539,676.63 L541,676.41 L543,676.18 L545,675.94 L547,675.71 L549,675.47 L551,675.23 L553,674.99 L555,674.74 L557,674.49 L559,674.24 L561,673.99 L563,673.73 L565,673.48 L567,673.21 L569,672.95 L571,672.68 L573,672.41 L575,672.14 L577,671.86 L579,671.58 L581,671.30 L583,671.02 L585,670.73 L587,670.44 L589,670.15 L591,669.85 L593,669.55 L595,669.25 L597,668.94 L599,668.63 L601,668.32 L603,668.00 L605,667.68 L607,667.36 L609,667.03 L611,666.70 L613,666.36 L615,666.03 L617,665.69 L619,665.34 L621,664.99 L623,664.64 L625,664.29 L627,663.93 L629,663.56 L631,663.20 L633,662.82 L635,662.45 L637,662.07 L639,661.69 L641,661.30 L643,660.91 L645,660.51 L647,660.11 L649,659.71 L651,659.30 L653,658.89 L655,658.47 L657,658.05 L659,657.62 L661,657.19 L663,656.76 L665,656.32 L667,655.87 L669,655.42 L671,654.97 L673,654.51 L675,654.05 L677,653.58 L679,653.10 L681,652.63 L683,652.14 L685,651.65 L687,651.16 L689,650.66 L691,650.15 L693,649.64 L695,649.13 L697,648.61 L699,648.08 L701,647.55 L703,647.01 L705,646.47 L707,645.92 L709,645.36 L711,644.80 L713,644.23 L715,643.66 L717,643.08 L719,642.49 L721,641.90 L723,641.30 L725,640.70 L727,640.09 L729,639.47 L731,638.85 L733,638.22 L735,637.58 L737,636.93 L739,636.28 L741,635.62 L743,634.96 L745,634.29 L747,633.61 L749,632.92 L751,632.23 L753,631.52 L755,630.82 L757,630.10 L759,629.38 L761,628.64 L763,627.90 L765,627.16 L767,626.40 L769,625.64 L771,624.87 L773,624.09 L775,623.30 L777,622.50 L779,621.70 L781,620.88 L783,620.06 L785,619.23 L787,618.39 L789,617.54 L791,616.68 L793,615.81 L795,614.94 L797,614.05 L799,613.16 L801,612.25 L803,611.34 L805,610.41 L807,609.48 L809,608.53 L811,607.58 L813,606.62 L815,605.64 L817,604.66 L819,603.66 L821,602.66 L823,601.64 L825,600.61 L827,599.57 L829,598.52 L831,597.46 L833,596.39 L835,595.31 L837,594.21 L839,593.10 L841,591.98 L843,590.85 L845,589.71 L847,588.56 L849,587.39 L851,586.21 L853,585.02 L855,583.81 L857,582.60 L859,581.36 L861,580.12 L863,578.86 L865,577.59 L867,576.31 L869,575.01 L871,573.70 L873,572.37 L875,571.03 L877,569.68 L879,568.31 L881,566.93 L883,565.53 L885,564.12 L887,562.69 L889,561.25 L891,559.79 L893,558.32 L895,556.83 L897,555.32 L899,553.80 L901,552.26 L903,550.71 L905,549.14 L907,547.55 L909,545.94 L911,544.32 L913,542.68 L915,541.03 L917,539.35 L919,537.66 L921,535.95 L923,534.22 L925,532.48 L927,530.71 L929,528.93 L931,527.12 L933,525.30 L935,523.46 L937,521.60 L939,519.72 L941,517.82 L943,515.89 L945,513.95 L947,511.99 L948.0,511.00 L955.0,511.00 L949,511.00 L951,511.00 L953,511.00 L955,511.00 L957,512.97 L959,514.93 L961,516.86 L963,518.77 L965,520.66 L967,522.53 L969,524.38 L971,526.21 L973,528.03 L975,529.82 L977,531.60 L979,533.35 L981,535.09 L983,536.81 L985,538.51 L987,540.19 L989,541.86 L991,543.50 L993,545.13 L995,546.75 L997,548.34 L999,549.92 L1001,551.49 L1003,553.03 L1005,554.56 L1007,556.07 L1009,557.57 L1011,559.05 L1013,560.52 L1015,561.97 L1017,563.41 L1019,564.83 L1021,566.23 L1023,567.62 L1025,569.00 L1027,570.36 L1029,571.71 L1031,573.04 L1033,574.36 L1035,575.66 L1037,576.95 L1039,578.23 L1041,579.49 L1043,580.74 L1045,581.98 L1047,583.21 L1049,584.42 L1051,585.62 L1053,586.80 L1055,587.97 L1057,589.14 L1059,590.28 L1061,591.42 L1063,592.55 L1065,593.66 L1067,594.76 L1069,595.85 L1071,596.93 L1073,597.99 L1075,599.05 L1077,600.09 L1079,601.13 L1081,602.15 L1083,603.16 L1085,604.16 L1087,605.15 L1089,606.13 L1091,607.10 L1093,608.06 L1095,609.01 L1097,609.95 L1099,610.88 L1101,611.80 L1103,612.70 L1105,613.60 L1107,614.50 L1109,615.38 L1111,616.25 L1113,617.11 L1115,617.96 L1117,618.81 L1119,619.64 L1121,620.47 L1123,621.29 L1125,622.10 L1127,622.90 L1129,623.69 L1131,624.48 L1133,625.25 L1135,626.02 L1137,626.78 L1139,627.53 L1141,628.27 L1143,629.01 L1145,629.74 L1147,630.46 L1149,631.17 L1151,631.88 L1153,632.57 L1155,633.26 L1157,633.95 L1159,634.62 L1161,635.29 L1163,635.95 L1165,636.61 L1167,637.26 L1169,637.90 L1171,638.53 L1173,639.16 L1175,639.78 L1177,640.39 L1179,641.00 L1181,641.60 L1183,642.20 L1185,642.79 L1187,643.37 L1189,643.95 L1191,644.52 L1193,645.08 L1195,645.64 L1197,646.19 L1199,646.74 L1201,647.28 L1203,647.81 L1205,648.34 L1207,648.87 L1209,649.39 L1211,649.90 L1213,650.41 L1215,650.91 L1217,651.41 L1219,651.90 L1221,652.38 L1223,652.87 L1225,653.34 L1227,653.81 L1229,654.28 L1231,654.74 L1233,655.20 L1235,655.65 L1237,656.10 L1239,656.54 L1241,656.98 L1243,657.41 L1245,657.84 L1247,658.26 L1249,658.68 L1251,659.09 L1253,659.51 L1255,659.91 L1257,660.31 L1259,660.71 L1261,661.10 L1263,661.49 L1265,661.88 L1267,662.26 L1269,662.64 L1271,663.01 L1273,663.38 L1275,663.75 L1277,664.11 L1279,664.46 L1281,664.82 L1283,665.17 L1285,665.51 L1287,665.86 L1289,666.20 L1291,666.53 L1293,666.86 L1295,667.19 L1297,667.52 L1299,667.84 L1301,668.16 L1303,668.47 L1305,668.78 L1307,669.09 L1309,669.40 L1311,669.70 L1313,670.00 L1315,670.29 L1317,670.59 L1319,670.88 L1321,671.16 L1323,671.44 L1325,671.72 L1327,672.00 L1329,672.28 L1331,672.55 L1333,672.82 L1335,673.08 L1337,673.34 L1339,673.61 L1341,673.86 L1343,674.12 L1345,674.37 L1347,674.62 L1349,674.87 L1351,675.11 L1353,675.35 L1355,675.59 L1357,675.83 L1359,676.06 L1361,676.29 L1363,676.52 L1365,676.75 L1367,676.97 L1369,677.19 L1371,677.41 L1373,677.63 L1375,677.85 L1377,678.06 L1379,678.27 L1381,678.48 L1383,678.68 L1385,678.89 L1387,679.09 L1389,679.29 L1391,679.49 L1393,679.68 L1395,679.87 L1397,680.07 L1399,680.25 L1401,680.44 L1403,680.63 L1405,680.81 L1407,680.99 L1409,681.17 L1411,681.35 L1413,681.52 L1415,681.70 L1417,681.87 L1419,682.04 L1421,682.21 L1423,682.38 L1425,682.54 L1427,682.70 L1429,682.86 L1431,683.02 L1433,683.18 L1435,683.34 L1437,683.49 L1439,683.65 L1441,683.80 L1443,683.95 L1445,684.10 L1447,684.24 L1449,684.39 L1451,684.53 L1453,684.67 L1455,684.81 L1457,684.95 L1459,685.09 L1461,685.23 L1463,685.36 L1465,685.50 L1467,685.63 L1469,685.76 L1471,685.89 L1473,686.02 L1475,686.14 L1477,686.27 L1479,686.39 L1481,686.51 L1483,686.63 L1485,686.75 L1487,686.87 L1489,686.99 L1491,687.11 L1493,687.22 L1495,687.34 L1497,687.45 L1499,687.56 L1501,687.67 L1503,687.78 L1505,687.89 L1507,687.99 L1509,688.10 L1511,688.20 L1513,688.31 L1515,688.41 L1517,688.51 L1519,688.61 L1521,688.71 L1523,688.81 L1525,688.90 L1527,689.00 L1529,689.10 L1531,689.19 L1533,689.28 L1535,689.37 L1537,689.46 L1539,689.56 L1541,689.64 L1543,689.73 L1545,689.82 L1547,689.91 L1549,689.99 L1551,690.08 L1553,690.16 L1555,690.24 L1557,690.32 L1559,690.40 L1561,690.49 L1563,690.56 L1565,690.64 L1567,690.72 L1569,690.80 L1571,690.87 L1573,690.95 L1575,691.02 L1577,691.10 L1579,691.17 L1581,691.24 L1583,691.31 L1585,691.38 L1587,691.45 L1589,691.52 L1591,691.59 L1593,691.66 L1595,691.73 L1597,691.79 L1599,691.86 L1601,691.92 L1603,691.99 L1605,692.05 L1607,692.11 L1609,692.17 L1611,692.24 L1613,692.30 L1615,692.36 L1617,692.42 L1619,692.48 L1621,692.53 L1623,692.59 L1625,692.65 L1627,692.70 L1629,692.76 L1631,692.82 L1633,692.87 L1635,692.92 L1637,692.98 L1639,693.03 L1641,693.08 L1643,693.14 L1645,693.19 L1647,693.24 L1649,693.29 L1651,693.34 L1653,693.39 L1655,693.44 L1657,693.48 L1659,693.53 L1661,693.58 L1663,693.63 L1665,693.67 L1667,693.72 L1669,693.76 L1671,693.81 L1673,693.85 L1675,693.89 L1677,693.94 L1679,693.98 L1681,694.02 L1683,694.07 L1685,694.11 L1687,694.15 L1689,694.19 L1691,694.23 L1693,694.27 L1695,694.31 L1697,694.35 L1699,694.39 L1701,694.42 L1703,694.46 L1705,694.50 L1707,694.54 L1709,694.57 L1711,694.61 L1713,694.64 L1715,694.68 L1717,694.71 L1719,694.75 L1721,694.78 L1723,694.82 L1725,694.85 L1727,694.88 L1729,694.92 L1731,694.95" fill="none" stroke="#2e6fd0" stroke-width="1.6"/>
<circle cx="494.4" cy="682" r="30.5" fill="none" stroke="#c4c4c4" stroke-width="1.2"/>
<circle cx="1411" cy="682" r="30.5" fill="none" stroke="#c4c4c4" stroke-width="1.2"/>
<path d="M175.0,697.3 L175.5,697.3 L176.0,697.3 L176.5,697.3 L177.0,697.4 L177.5,697.4 L178.0,697.4 L178.5,697.4 L179.0,697.4 L179.5,697.4 L180.0,697.3 L180.5,697.3 L181.0,697.3 L181.5,697.3 L182.0,697.3 L182.5,697.2 L183.0,697.2 L183.5,697.1 L184.0,696.9 L184.5,696.8 L185.0,696.5 L185.5,696.3 L186.0,695.9 L186.5,695.6 L187.0,695.2 L187.5,694.9 L188.0,694.6 L188.5,694.5 L189.0,694.4 L189.5,694.5 L190.0,694.6 L190.5,694.9 L191.0,695.2 L191.5,695.6 L192.0,695.9 L192.5,696.3 L193.0,696.5 L193.5,696.8 L194.0,697.0 L194.5,697.1 L195.0,697.2 L195.5,697.2 L196.0,697.3 L196.5,697.3 L197.0,697.3 L197.5,697.3 L198.0,697.3 L198.5,697.2 L199.0,697.2 L199.5,697.2 L200.0,697.2 L200.5,697.1 L201.0,697.1 L201.5,697.1 L202.0,697.1 L202.5,697.2 L203.0,697.2 L203.5,697.2 L204.0,697.3 L204.5,697.3 L205.0,697.3 L205.5,697.3 L206.0,697.3 L206.5,697.4 L207.0,697.4 L207.5,697.4 L208.0,697.4 L208.5,697.4 L209.0,697.4 L209.5,697.3 L210.0,697.3 L210.5,697.3 L211.0,697.3 L211.5,697.2 L212.0,697.2 L212.5,697.2 L213.0,697.2 L213.5,697.2 L214.0,697.2 L214.5,697.3 L215.0,697.3 L215.5,697.3 L216.0,697.3 L216.5,697.3 L217.0,697.3 L217.5,697.4 L218.0,697.4 L218.5,697.4 L219.0,697.4 L219.5,697.4 L220.0,697.4 L220.5,697.4 L221.0,697.4 L221.5,697.4 L222.0,697.4 L222.5,697.4 L223.0,697.3 L223.5,697.3 L224.0,697.3 L224.5,697.3 L225.0,697.3 L225.5,697.3 L226.0,697.3 L226.5,697.2 L227.0,697.2 L227.5,697.2 L228.0,697.2 L228.5,697.2 L229.0,697.2 L229.5,697.2 L230.0,697.2 L230.5,697.1 L231.0,697.1 L231.5,697.1 L232.0,697.1 L232.5,697.0 L233.0,697.0 L233.5,697.0 L234.0,697.0 L234.5,697.0 L235.0,697.0 L235.5,697.1 L236.0,697.1 L236.5,697.1 L237.0,697.1 L237.5,697.1 L238.0,697.2 L238.5,697.2 L239.0,697.2 L239.5,697.2 L240.0,697.2 L240.5,697.2 L241.0,697.2 L241.5,697.2 L242.0,697.3 L242.5,697.3 L243.0,697.3 L243.5,697.3 L244.0,697.3 L244.5,697.3 L245.0,697.3 L245.5,697.2 L246.0,697.2 L246.5,697.2 L247.0,697.2 L247.5,697.2 L248.0,697.2 L248.5,697.2 L249.0,697.2 L249.5,697.2 L250.0,697.2 L250.5,697.2 L251.0,697.3 L251.5,697.3 L252.0,697.3 L252.5,697.3 L253.0,697.3 L253.5,697.3 L254.0,697.3 L254.5,697.3 L255.0,697.3 L255.5,697.3 L256.0,697.3 L256.5,697.3 L257.0,697.3 L257.5,697.3 L258.0,697.3 L258.5,697.3 L259.0,697.3 L259.5,697.3 L260.0,697.4 L260.5,697.4 L261.0,697.4 L261.5,697.4 L262.0,697.4 L262.5,697.4 L263.0,697.4 L263.5,697.4 L264.0,697.4 L264.5,697.4 L265.0,697.4 L265.5,697.4 L266.0,697.4 L266.5,697.4 L267.0,697.4 L267.5,697.4 L268.0,697.4 L268.5,697.4 L269.0,697.4 L269.5,697.4 L270.0,697.3 L270.5,697.3 L271.0,697.3 L271.5,697.3 L272.0,697.3 L272.5,697.3 L273.0,697.3 L273.5,697.3 L274.0,697.3 L274.5,697.3 L275.0,697.4 L275.5,697.4 L276.0,697.4 L276.5,697.4 L277.0,697.4 L277.5,697.4 L278.0,697.4 L278.5,697.4 L279.0,697.4 L279.5,697.4 L280.0,697.4 L280.5,697.4 L281.0,697.4 L281.5,697.4 L282.0,697.4 L282.5,697.4 L283.0,697.3 L283.5,697.3 L284.0,697.3 L284.5,697.3 L285.0,697.3 L285.5,697.3 L286.0,697.3 L286.5,697.3 L287.0,697.3 L287.5,697.3 L288.0,697.3 L288.5,697.3 L289.0,697.3 L289.5,697.2 L290.0,697.2 L290.5,697.2 L291.0,697.2 L291.5,697.2 L292.0,697.2 L292.5,697.2 L293.0,697.2 L293.5,697.2 L294.0,697.2 L294.5,697.2 L295.0,697.2 L295.5,697.2 L296.0,697.2 L296.5,697.2 L297.0,697.2 L297.5,697.2 L298.0,697.2 L298.5,697.2 L299.0,697.3 L299.5,697.3 L300.0,697.3 L300.5,697.3 L301.0,697.4 L301.5,697.4 L302.0,697.4 L302.5,697.4 L303.0,697.4 L303.5,697.4 L304.0,697.4 L304.5,697.4 L305.0,697.4 L305.5,697.4 L306.0,697.3 L306.5,697.3 L307.0,697.3 L307.5,697.3 L308.0,697.3 L308.5,697.3 L309.0,697.3 L309.5,697.3 L310.0,697.3 L310.5,697.3 L311.0,697.3 L311.5,697.2 L312.0,697.2 L312.5,697.2 L313.0,697.2 L313.5,697.2 L314.0,697.2 L314.5,697.2 L315.0,697.2 L315.5,697.2 L316.0,697.2 L316.5,697.3 L317.0,697.3 L317.5,697.3 L318.0,697.4 L318.5,697.4 L319.0,697.4 L319.5,697.4 L320.0,697.4 L320.5,697.4 L321.0,697.4 L321.5,697.4 L322.0,697.4 L322.5,697.4 L323.0,697.4 L323.5,697.4 L324.0,697.3 L324.5,697.3 L325.0,697.3 L325.5,697.3 L326.0,697.3 L326.5,697.3 L327.0,697.3 L327.5,697.3 L328.0,697.3 L328.5,697.3 L329.0,697.3 L329.5,697.3 L330.0,697.3 L330.5,697.3 L331.0,697.3 L331.5,697.3 L332.0,697.3 L332.5,697.3 L333.0,697.3 L333.5,697.3 L334.0,697.3 L334.5,697.2 L335.0,697.2 L335.5,697.0 L336.0,696.8 L336.5,696.6 L337.0,696.3 L337.5,695.9 L338.0,695.4 L338.5,694.9 L339.0,694.4 L339.5,693.9 L340.0,693.5 L340.5,693.3 L341.0,693.2 L341.5,693.3 L342.0,693.5 L342.5,693.8 L343.0,694.3 L343.5,694.8 L344.0,695.3 L344.5,695.8 L345.0,696.2 L345.5,696.6 L346.0,696.8 L346.5,697.0 L347.0,697.2 L347.5,697.2 L348.0,697.3 L348.5,697.3 L349.0,697.3 L349.5,697.3 L350.0,697.3 L350.5,697.3 L351.0,697.2 L351.5,697.2 L352.0,697.2 L352.5,697.2 L353.0,697.2 L353.5,697.1 L354.0,697.1 L354.5,697.1 L355.0,697.1 L355.5,697.1 L356.0,697.1 L356.5,697.1 L357.0,697.1 L357.5,697.1 L358.0,697.2 L358.5,697.2 L359.0,697.2 L359.5,697.2 L360.0,697.2 L360.5,697.2 L361.0,697.2 L361.5,697.2 L362.0,697.2 L362.5,697.3 L363.0,697.3 L363.5,697.3 L364.0,697.3 L364.5,697.3 L365.0,697.3 L365.5,697.3 L366.0,697.3 L366.5,697.4 L367.0,697.4 L367.5,697.4 L368.0,697.4 L368.5,697.4 L369.0,697.4 L369.5,697.4 L370.0,697.4 L370.5,697.4 L371.0,697.4 L371.5,697.4 L372.0,697.4 L372.5,697.4 L373.0,697.4 L373.5,697.3 L374.0,697.3 L374.5,697.3 L375.0,697.2 L375.5,697.2 L376.0,697.2 L376.5,697.2 L377.0,697.2 L377.5,697.2 L378.0,697.2 L378.5,697.2 L379.0,697.3 L379.5,697.3 L380.0,697.3 L380.5,697.3 L381.0,697.3 L381.5,697.3 L382.0,697.2 L382.5,697.2 L383.0,697.2 L383.5,697.2 L384.0,697.2 L384.5,697.2 L385.0,697.2 L385.5,697.2 L386.0,697.2 L386.5,697.2 L387.0,697.2 L387.5,697.2 L388.0,697.2 L388.5,697.2 L389.0,697.2 L389.5,697.2 L390.0,697.2 L390.5,697.2 L391.0,697.2 L391.5,697.2 L392.0,697.2 L392.5,697.2 L393.0,697.2 L393.5,697.2 L394.0,697.2 L394.5,697.2 L395.0,697.2 L395.5,697.2 L396.0,697.2 L396.5,697.2 L397.0,697.2 L397.5,697.2 L398.0,697.2 L398.5,697.2 L399.0,697.3 L399.5,697.3 L400.0,697.3 L400.5,697.3 L401.0,697.4 L401.5,697.4 L402.0,697.4 L402.5,697.4 L403.0,697.4 L403.5,697.4 L404.0,697.5 L404.5,697.5 L405.0,697.5 L405.5,697.5 L406.0,697.5 L406.5,697.4 L407.0,697.4 L407.5,697.4 L408.0,697.4 L408.5,697.4 L409.0,697.4 L409.5,697.3 L410.0,697.3 L410.5,697.3 L411.0,697.3 L411.5,697.3 L412.0,697.2 L412.5,697.2 L413.0,697.2 L413.5,697.2 L414.0,697.2 L414.5,697.2 L415.0,697.2 L415.5,697.3 L416.0,697.3 L416.5,697.3 L417.0,697.3 L417.5,697.3 L418.0,697.4 L418.5,697.4 L419.0,697.4 L419.5,697.3 L420.0,697.3 L420.5,697.3 L421.0,697.3 L421.5,697.2 L422.0,697.2 L422.5,697.2 L423.0,697.2 L423.5,697.2 L424.0,697.2 L424.5,697.2 L425.0,697.2 L425.5,697.3 L426.0,697.3 L426.5,697.3 L427.0,697.4 L427.5,697.4 L428.0,697.4 L428.5,697.4 L429.0,697.4 L429.5,697.4 L430.0,697.4 L430.5,697.4 L431.0,697.4 L431.5,697.4 L432.0,697.4 L432.5,697.3 L433.0,697.3 L433.5,697.2 L434.0,697.2 L434.5,697.1 L435.0,697.1 L435.5,697.0 L436.0,696.9 L436.5,696.8 L437.0,696.6 L437.5,696.5 L438.0,696.4 L438.5,696.4 L439.0,696.3 L439.5,696.2 L440.0,696.2 L440.5,696.2 L441.0,696.3 L441.5,696.4 L442.0,696.4 L442.5,696.5 L443.0,696.6 L443.5,696.7 L444.0,696.8 L444.5,696.8 L445.0,696.9 L445.5,697.0 L446.0,697.0 L446.5,697.0 L447.0,697.1 L447.5,697.1 L448.0,697.2 L448.5,697.2 L449.0,697.2 L449.5,697.3 L450.0,697.3 L450.5,697.3 L451.0,697.4 L451.5,697.4 L452.0,697.4 L452.5,697.4 L453.0,697.3 L453.5,697.3 L454.0,697.2 L454.5,697.2 L455.0,697.1 L455.5,697.0 L456.0,696.9 L456.5,696.8 L457.0,696.8 L457.5,696.7 L458.0,696.6 L458.5,696.6 L459.0,696.6 L459.5,696.6 L460.0,696.6 L460.5,696.6 L461.0,696.7 L461.5,696.7 L462.0,696.8 L462.5,696.9 L463.0,696.9 L463.5,697.0 L464.0,697.0 L464.5,697.0 L465.0,697.0 L465.5,697.0 L466.0,697.0 L466.5,697.0 L467.0,696.9 L467.5,696.9 L468.0,696.9 L468.5,696.8 L469.0,696.8 L469.5,696.8 L470.0,696.9 L470.5,696.9 L471.0,696.9 L471.5,697.0 L472.0,697.0 L472.5,697.1 L473.0,697.1 L473.5,697.1 L474.0,697.1 L474.5,697.1 L475.0,697.1 L475.5,697.1 L476.0,697.1 L476.5,697.0 L477.0,697.0 L477.5,697.0 L478.0,697.0 L478.5,697.1 L479.0,697.1 L479.5,697.1 L480.0,697.1 L480.5,697.1 L481.0,697.1 L481.5,697.1 L482.0,697.1 L482.5,697.1 L483.0,697.1 L483.5,697.1 L484.0,697.1 L484.5,697.1 L485.0,697.1 L485.5,697.2 L486.0,697.2 L486.5,697.2 L487.0,697.2 L487.5,697.2 L488.0,697.2 L488.5,697.2 L489.0,697.1 L489.5,696.8 L490.0,695.7 L490.5,693.5 L491.0,690.3 L491.5,687.4 L492.0,685.3 L492.5,684.3 L493.0,684.0 L493.5,683.9 L494.0,684.0 L494.5,684.0 L495.0,684.3 L495.5,685.2 L496.0,687.0 L496.5,689.8 L497.0,692.9 L497.5,695.3 L498.0,696.5 L498.5,696.8 L499.0,696.9 L499.5,696.9 L500.0,696.9 L500.5,696.9 L501.0,697.0 L501.5,697.0 L502.0,697.1 L502.5,697.2 L503.0,697.2 L503.5,697.3 L504.0,697.3 L504.5,697.2 L505.0,697.2 L505.5,697.1 L506.0,697.1 L506.5,697.0 L507.0,697.0 L507.5,696.9 L508.0,696.9 L508.5,696.8 L509.0,696.8 L509.5,696.7 L510.0,696.7 L510.5,696.6 L511.0,696.6 L511.5,696.6 L512.0,696.6 L512.5,696.7 L513.0,696.7 L513.5,696.8 L514.0,696.8 L514.5,696.9 L515.0,696.9 L515.5,696.9 L516.0,696.9 L516.5,696.9 L517.0,696.8 L517.5,696.7 L518.0,696.5 L518.5,696.3 L519.0,696.0 L519.5,695.8 L520.0,695.5 L520.5,695.2 L521.0,694.8 L521.5,694.5 L522.0,694.1 L522.5,693.7 L523.0,693.3 L523.5,693.0 L524.0,692.8 L524.5,692.6 L525.0,692.6 L525.5,692.6 L526.0,692.8 L526.5,693.1 L527.0,693.5 L527.5,693.9 L528.0,694.4 L528.5,694.9 L529.0,695.3 L529.5,695.7 L530.0,696.0 L530.5,696.3 L531.0,696.5 L531.5,696.6 L532.0,696.7 L532.5,696.8 L533.0,696.8 L533.5,696.8 L534.0,696.8 L534.5,696.8 L535.0,696.9 L535.5,696.9 L536.0,696.9 L536.5,697.0 L537.0,697.0 L537.5,697.0 L538.0,697.0 L538.5,697.0 L539.0,697.0 L539.5,696.9 L540.0,696.9 L540.5,696.9 L541.0,696.9 L541.5,696.8 L542.0,696.8 L542.5,696.8 L543.0,696.8 L543.5,696.8 L544.0,696.8 L544.5,696.8 L545.0,696.7 L545.5,696.7 L546.0,696.6 L546.5,696.6 L547.0,696.5 L547.5,696.5 L548.0,696.5 L548.5,696.5 L549.0,696.5 L549.5,696.6 L550.0,696.7 L550.5,696.7 L551.0,696.8 L551.5,696.9 L552.0,696.9 L552.5,696.9 L553.0,696.9 L553.5,696.8 L554.0,696.7 L554.5,696.6 L555.0,696.5 L555.5,696.4 L556.0,696.3 L556.5,696.3 L557.0,696.2 L557.5,696.2 L558.0,696.2 L558.5,696.2 L559.0,696.2 L559.5,696.3 L560.0,696.3 L560.5,696.4 L561.0,696.5 L561.5,696.6 L562.0,696.6 L562.5,696.7 L563.0,696.8 L563.5,696.9 L564.0,697.0 L564.5,697.0 L565.0,697.1 L565.5,697.1 L566.0,697.1 L566.5,697.0 L567.0,697.0 L567.5,696.9 L568.0,696.9 L568.5,696.8 L569.0,696.8 L569.5,696.8 L570.0,696.8 L570.5,696.9 L571.0,697.0 L571.5,697.0 L572.0,697.1 L572.5,697.1 L573.0,697.1 L573.5,697.1 L574.0,697.0 L574.5,696.9 L575.0,696.7 L575.5,696.5 L576.0,696.2 L576.5,695.9 L577.0,695.6 L577.5,695.3 L578.0,695.0 L578.5,694.8 L579.0,694.5 L579.5,694.4 L580.0,694.3 L580.5,694.2 L581.0,694.2 L581.5,694.3 L582.0,694.4 L582.5,694.6 L583.0,694.9 L583.5,695.1 L584.0,695.4 L584.5,695.6 L585.0,695.9 L585.5,696.1 L586.0,696.2 L586.5,696.3 L587.0,696.4 L587.5,696.4 L588.0,696.3 L588.5,696.2 L589.0,696.1 L589.5,696.0 L590.0,695.9 L590.5,695.8 L591.0,695.6 L591.5,695.6 L592.0,695.5 L592.5,695.6 L593.0,695.6 L593.5,695.7 L594.0,695.9 L594.5,696.0 L595.0,696.2 L595.5,696.4 L596.0,696.6 L596.5,696.8 L597.0,697.0 L597.5,697.1 L598.0,697.1 L598.5,697.2 L599.0,697.1 L599.5,697.1 L600.0,697.0 L600.5,696.9 L601.0,696.8 L601.5,696.7 L602.0,696.5 L602.5,696.4 L603.0,696.3 L603.5,696.2 L604.0,696.1 L604.5,696.1 L605.0,696.1 L605.5,696.1 L606.0,696.1 L606.5,696.1 L607.0,696.2 L607.5,696.3 L608.0,696.4 L608.5,696.4 L609.0,696.5 L609.5,696.6 L610.0,696.7 L610.5,696.8 L611.0,696.8 L611.5,696.9 L612.0,697.0 L612.5,697.0 L613.0,697.1 L613.5,697.1 L614.0,697.1 L614.5,697.1 L615.0,697.1 L615.5,697.0 L616.0,697.0 L616.5,696.9 L617.0,696.8 L617.5,696.8 L618.0,696.7 L618.5,696.7 L619.0,696.6 L619.5,696.6 L620.0,696.5 L620.5,696.5 L621.0,696.5 L621.5,696.5 L622.0,696.5 L622.5,696.5 L623.0,696.5 L623.5,696.5 L624.0,696.6 L624.5,696.6 L625.0,696.6 L625.5,696.6 L626.0,696.6 L626.5,696.6 L627.0,696.7 L627.5,696.7 L628.0,696.7 L628.5,696.7 L629.0,696.8 L629.5,696.8 L630.0,696.7 L630.5,696.7 L631.0,696.6 L631.5,696.5 L632.0,696.4 L632.5,696.3 L633.0,696.1 L633.5,696.0 L634.0,695.9 L634.5,695.8 L635.0,695.8 L635.5,695.7 L636.0,695.7 L636.5,695.6 L637.0,695.5 L637.5,695.5 L638.0,695.4 L638.5,695.4 L639.0,695.3 L639.5,695.3 L640.0,695.3 L640.5,695.1 L641.0,694.1 L641.5,691.0 L642.0,685.3 L642.5,677.7 L643.0,670.2 L643.5,664.5 L644.0,661.0 L644.5,659.4 L645.0,659.0 L645.5,658.9 L646.0,658.9 L646.5,658.9 L647.0,659.2 L647.5,660.3 L648.0,663.1 L648.5,668.0 L649.0,674.7 L649.5,681.7 L650.0,687.2 L650.5,689.9 L651.0,690.6 L651.5,690.4 L652.0,690.3 L652.5,690.5 L653.0,691.0 L653.5,691.7 L654.0,692.5 L654.5,693.2 L655.0,693.7 L655.5,693.8 L656.0,693.6 L656.5,693.1 L657.0,692.2 L657.5,691.2 L658.0,690.0 L658.5,688.9 L659.0,687.9 L659.5,687.3 L660.0,686.9 L660.5,686.9 L661.0,687.2 L661.5,687.8 L662.0,688.6 L662.5,689.3 L663.0,690.0 L663.5,690.5 L664.0,690.8 L664.5,690.8 L665.0,690.6 L665.5,690.3 L666.0,689.9 L666.5,689.7 L667.0,689.6 L667.5,689.7 L668.0,690.1 L668.5,690.6 L669.0,691.3 L669.5,692.0 L670.0,692.7 L670.5,693.5 L671.0,694.1 L671.5,694.6 L672.0,695.0 L672.5,695.3 L673.0,695.6 L673.5,695.8 L674.0,695.9 L674.5,696.1 L675.0,696.2 L675.5,696.4 L676.0,696.5 L676.5,696.7 L677.0,696.8 L677.5,696.9 L678.0,696.9 L678.5,696.9 L679.0,696.8 L679.5,696.7 L680.0,696.5 L680.5,696.2 L681.0,695.9 L681.5,695.6 L682.0,695.3 L682.5,695.0 L683.0,694.7 L683.5,694.6 L684.0,694.4 L684.5,694.4 L685.0,694.4 L685.5,694.4 L686.0,694.5 L686.5,694.6 L687.0,694.8 L687.5,695.0 L688.0,695.2 L688.5,695.4 L689.0,695.7 L689.5,695.9 L690.0,696.1 L690.5,696.2 L691.0,696.3 L691.5,696.4 L692.0,696.3 L692.5,696.2 L693.0,696.0 L693.5,695.8 L694.0,695.5 L694.5,695.2 L695.0,695.0 L695.5,694.8 L696.0,694.7 L696.5,694.7 L697.0,694.7 L697.5,694.8 L698.0,695.0 L698.5,695.2 L699.0,695.4 L699.5,695.7 L700.0,695.9 L700.5,696.1 L701.0,696.3 L701.5,696.4 L702.0,696.6 L702.5,696.6 L703.0,696.6 L703.5,696.5 L704.0,696.4 L704.5,696.1 L705.0,695.9 L705.5,695.5 L706.0,695.2 L706.5,694.9 L707.0,694.6 L707.5,694.4 L708.0,694.3 L708.5,694.2 L709.0,694.2 L709.5,694.3 L710.0,694.4 L710.5,694.6 L711.0,694.8 L711.5,695.0 L712.0,695.3 L712.5,695.5 L713.0,695.7 L713.5,695.9 L714.0,696.0 L714.5,696.0 L715.0,696.0 L715.5,695.9 L716.0,695.8 L716.5,695.6 L717.0,695.5 L717.5,695.4 L718.0,695.3 L718.5,695.3 L719.0,695.3 L719.5,695.3 L720.0,695.3 L720.5,695.3 L721.0,695.3 L721.5,695.3 L722.0,695.2 L722.5,695.2 L723.0,695.2 L723.5,695.2 L724.0,695.2 L724.5,695.3 L725.0,695.5 L725.5,695.7 L726.0,695.9 L726.5,696.1 L727.0,696.4 L727.5,696.6 L728.0,696.8 L728.5,697.0 L729.0,697.0 L729.5,697.0 L730.0,696.9 L730.5,696.7 L731.0,696.5 L731.5,696.2 L732.0,696.0 L732.5,695.7 L733.0,695.4 L733.5,695.3 L734.0,695.1 L734.5,695.1 L735.0,695.0 L735.5,695.1 L736.0,695.1 L736.5,695.2 L737.0,695.4 L737.5,695.5 L738.0,695.7 L738.5,695.9 L739.0,696.2 L739.5,696.4 L740.0,696.5 L740.5,696.7 L741.0,696.8 L741.5,696.9 L742.0,696.9 L742.5,696.9 L743.0,696.8 L743.5,696.7 L744.0,696.6 L744.5,696.4 L745.0,696.3 L745.5,696.1 L746.0,696.0 L746.5,695.8 L747.0,695.6 L747.5,695.5 L748.0,695.3 L748.5,695.1 L749.0,695.0 L749.5,694.8 L750.0,694.7 L750.5,694.7 L751.0,694.7 L751.5,694.9 L752.0,695.0 L752.5,695.3 L753.0,695.6 L753.5,695.9 L754.0,696.2 L754.5,696.5 L755.0,696.8 L755.5,697.0 L756.0,697.1 L756.5,697.2 L757.0,697.1 L757.5,697.0 L758.0,696.9 L758.5,696.7 L759.0,696.5 L759.5,696.2 L760.0,696.0 L760.5,695.8 L761.0,695.6 L761.5,695.5 L762.0,695.5 L762.5,695.5 L763.0,695.6 L763.5,695.7 L764.0,695.8 L764.5,695.9 L765.0,696.0 L765.5,696.1 L766.0,696.2 L766.5,696.2 L767.0,696.1 L767.5,696.0 L768.0,695.9 L768.5,695.8 L769.0,695.6 L769.5,695.4 L770.0,695.3 L770.5,695.1 L771.0,694.9 L771.5,694.8 L772.0,694.6 L772.5,694.5 L773.0,694.4 L773.5,694.4 L774.0,694.3 L774.5,694.3 L775.0,694.4 L775.5,694.4 L776.0,694.6 L776.5,694.7 L777.0,694.9 L777.5,695.2 L778.0,695.4 L778.5,695.6 L779.0,695.8 L779.5,696.0 L780.0,696.1 L780.5,696.1 L781.0,696.2 L781.5,696.1 L782.0,696.1 L782.5,696.0 L783.0,695.9 L783.5,695.8 L784.0,695.7 L784.5,695.7 L785.0,695.6 L785.5,695.7 L786.0,695.7 L786.5,695.8 L787.0,696.0 L787.5,696.1 L788.0,696.3 L788.5,696.5 L789.0,696.7 L789.5,696.9 L790.0,697.0 L790.5,697.0 L791.0,696.6 L791.5,694.6 L792.0,688.6 L792.5,676.0 L793.0,656.8 L793.5,634.1 L794.0,612.7 L794.5,596.4 L795.0,586.0 L795.5,580.7 L796.0,578.6 L796.5,578.0 L797.0,577.9 L797.5,577.9 L798.0,578.4 L798.5,580.4 L799.0,585.6 L799.5,595.8 L800.0,612.1 L800.5,633.2 L801.0,655.7 L801.5,674.8 L802.0,687.1 L802.5,692.9 L803.0,694.7 L803.5,694.9 L804.0,694.7 L804.5,694.3 L805.0,694.0 L805.5,693.6 L806.0,693.1 L806.5,692.6 L807.0,692.1 L807.5,691.5 L808.0,690.8 L808.5,690.1 L809.0,689.3 L809.5,688.5 L810.0,687.8 L810.5,687.0 L811.0,686.4 L811.5,685.8 L812.0,685.3 L812.5,684.9 L813.0,684.5 L813.5,684.3 L814.0,684.1 L814.5,683.9 L815.0,683.8 L815.5,683.8 L816.0,683.8 L816.5,683.8 L817.0,683.9 L817.5,684.0 L818.0,684.1 L818.5,684.3 L819.0,684.5 L819.5,684.7 L820.0,685.0 L820.5,685.3 L821.0,685.6 L821.5,685.9 L822.0,686.3 L822.5,686.8 L823.0,687.2 L823.5,687.8 L824.0,688.3 L824.5,688.9 L825.0,689.4 L825.5,690.0 L826.0,690.5 L826.5,691.0 L827.0,691.5 L827.5,691.9 L828.0,692.2 L828.5,692.5 L829.0,692.8 L829.5,693.1 L830.0,693.4 L830.5,693.7 L831.0,694.0 L831.5,694.2 L832.0,694.5 L832.5,694.7 L833.0,694.8 L833.5,694.9 L834.0,694.8 L834.5,694.6 L835.0,694.3 L835.5,694.0 L836.0,693.5 L836.5,693.1 L837.0,692.6 L837.5,692.2 L838.0,691.8 L838.5,691.5 L839.0,691.1 L839.5,690.8 L840.0,690.5 L840.5,690.2 L841.0,689.9 L841.5,689.5 L842.0,689.2 L842.5,688.8 L843.0,688.4 L843.5,688.1 L844.0,687.8 L844.5,687.5 L845.0,687.3 L845.5,687.2 L846.0,687.1 L846.5,687.0 L847.0,687.1 L847.5,687.3 L848.0,687.5 L848.5,687.9 L849.0,688.4 L849.5,688.9 L850.0,689.4 L850.5,690.0 L851.0,690.6 L851.5,691.2 L852.0,691.8 L852.5,692.3 L853.0,692.8 L853.5,693.2 L854.0,693.6 L854.5,694.0 L855.0,694.3 L855.5,694.6 L856.0,694.8 L856.5,695.0 L857.0,695.2 L857.5,695.3 L858.0,695.5 L858.5,695.7 L859.0,695.9 L859.5,696.2 L860.0,696.4 L860.5,696.6 L861.0,696.8 L861.5,696.9 L862.0,697.1 L862.5,697.2 L863.0,697.3 L863.5,697.3 L864.0,697.4 L864.5,697.4 L865.0,697.4 L865.5,697.5 L866.0,697.5 L866.5,697.5 L867.0,697.5 L867.5,697.5 L868.0,697.5 L868.5,697.5 L869.0,697.5 L869.5,697.5 L870.0,697.5 L870.5,697.5 L871.0,697.5 L871.5,697.5 L872.0,697.5 L872.5,697.5 L873.0,697.5 L873.5,697.5 L874.0,697.5 L874.5,697.5 L875.0,697.5 L875.5,697.5 L876.0,697.5 L876.5,697.5 L877.0,697.5 L877.5,697.5 L878.0,697.5 L878.5,697.5 L879.0,697.5 L879.5,697.5 L880.0,697.5 L880.5,697.5 L881.0,697.5 L881.5,697.5 L882.0,697.5 L882.5,697.5 L883.0,697.5 L883.5,697.5 L884.0,697.5 L884.5,697.5 L885.0,697.5 L885.5,697.5 L886.0,697.5 L886.5,697.5 L887.0,697.5 L887.5,697.5 L888.0,697.5 L888.5,697.5 L889.0,697.5 L889.5,697.5 L890.0,697.5 L890.5,697.5 L891.0,697.5 L891.5,697.5 L892.0,697.5 L892.5,697.5 L893.0,697.5 L893.5,697.5 L894.0,697.5 L894.5,697.5 L895.0,697.5 L895.5,697.5 L896.0,697.5 L896.5,697.5 L897.0,697.5 L897.5,697.5 L898.0,697.5 L898.5,697.5 L899.0,697.5 L899.5,697.5 L900.0,697.5 L900.5,697.5 L901.0,697.5 L901.5,697.5 L902.0,697.5 L902.5,697.5 L903.0,697.5 L903.5,697.5 L904.0,697.5 L904.5,697.5 L905.0,697.5 L905.5,697.5 L906.0,697.5 L906.5,697.5 L907.0,697.5 L907.5,697.5 L908.0,697.5 L908.5,697.5 L909.0,697.5 L909.5,697.5 L910.0,697.5 L910.5,697.5 L911.0,697.5 L911.5,697.5 L912.0,697.5 L912.5,697.5 L913.0,697.5 L913.5,697.5 L914.0,697.5 L914.5,697.5 L915.0,697.5 L915.5,697.5 L916.0,697.5 L916.5,697.5 L917.0,697.5 L917.5,697.5 L918.0,697.5 L918.5,697.5 L919.0,697.5 L919.5,697.5 L920.0,697.5 L920.5,697.5 L921.0,697.5 L921.5,697.5 L922.0,697.5 L922.5,697.5 L923.0,697.5 L923.5,697.5 L924.0,697.5 L924.5,697.5 L925.0,697.5 L925.5,697.5 L926.0,697.5 L926.5,697.5 L927.0,697.5 L927.5,697.5 L928.0,697.5 L928.5,697.5 L929.0,697.5 L929.5,697.5 L930.0,697.5 L930.5,697.5 L931.0,697.5 L931.5,697.5 L932.0,697.5 L932.5,697.5 L933.0,697.5 L933.5,697.5 L934.0,697.5 L934.5,697.5 L935.0,697.5 L935.5,697.5 L936.0,697.5 L936.5,697.5 L937.0,697.5 L937.5,697.5 L938.0,697.5 L938.5,697.5 L939.0,697.5 L939.5,697.5 L940.0,697.5 L940.5,697.5 L941.0,697.5 L941.5,697.5 L942.0,697.5 L942.5,697.5 L943.0,697.5 L943.5,697.5 L944.0,697.5 L944.5,697.5 L945.0,697.5 L945.5,697.5 L946.0,697.5 L946.5,697.5 L947.0,697.5 L947.5,697.5 L948.0,697.5 L948.5,697.5 L949.0,697.5 L949.5,697.5 L950.0,697.5 L950.5,697.5 L951.0,697.5 L951.5,697.5 L952.0,697.5 L952.5,697.5 L953.0,697.5 L953.5,697.5 L954.0,697.5 L954.5,697.5 L955.0,697.5 L955.5,697.5 L956.0,697.5 L956.5,697.5 L957.0,697.5 L957.5,697.5 L958.0,697.5 L958.5,697.5 L959.0,697.5 L959.5,697.5 L960.0,697.5 L960.5,697.5 L961.0,697.5 L961.5,697.5 L962.0,697.5 L962.5,697.5 L963.0,697.5 L963.5,697.5 L964.0,697.5 L964.5,697.5 L965.0,697.5 L965.5,697.5 L966.0,697.5 L966.5,697.5 L967.0,697.5 L967.5,697.5 L968.0,697.5 L968.5,697.5 L969.0,697.5 L969.5,697.5 L970.0,697.5 L970.5,697.5 L971.0,697.5 L971.5,697.5 L972.0,697.5 L972.5,697.5 L973.0,697.5 L973.5,697.5 L974.0,697.5 L974.5,697.5 L975.0,697.5 L975.5,697.5 L976.0,697.5 L976.5,697.5 L977.0,697.5 L977.5,697.5 L978.0,697.5 L978.5,697.5 L979.0,697.5 L979.5,697.5 L980.0,697.5 L980.5,697.5 L981.0,697.5 L981.5,697.5 L982.0,697.5 L982.5,697.5 L983.0,697.5 L983.5,697.5 L984.0,697.5 L984.5,697.5 L985.0,697.5 L985.5,697.5 L986.0,697.5 L986.5,697.5 L987.0,697.5 L987.5,697.5 L988.0,697.5 L988.5,697.5 L989.0,697.5 L989.5,697.5 L990.0,697.5 L990.5,697.5 L991.0,697.5 L991.5,697.5 L992.0,697.5 L992.5,697.5 L993.0,697.5 L993.5,697.5 L994.0,697.5 L994.5,697.5 L995.0,697.5 L995.5,697.5 L996.0,697.5 L996.5,697.5 L997.0,697.5 L997.5,697.5 L998.0,697.5 L998.5,697.5 L999.0,697.5 L999.5,697.5 L1000.0,697.5 L1000.5,697.5 L1001.0,697.5 L1001.5,697.5 L1002.0,697.5 L1002.5,697.5 L1003.0,697.5 L1003.5,697.5 L1004.0,697.5 L1004.5,697.5 L1005.0,697.5 L1005.5,697.5 L1006.0,697.5 L1006.5,697.4 L1007.0,697.4 L1007.5,697.4 L1008.0,697.3 L1008.5,697.3 L1009.0,697.2 L1009.5,697.1 L1010.0,697.0 L1010.5,697.0 L1011.0,696.9 L1011.5,696.9 L1012.0,696.9 L1012.5,696.9 L1013.0,696.9 L1013.5,696.9 L1014.0,696.9 L1014.5,696.9 L1015.0,696.9 L1015.5,696.9 L1016.0,696.9 L1016.5,696.8 L1017.0,696.8 L1017.5,696.8 L1018.0,696.8 L1018.5,696.8 L1019.0,696.9 L1019.5,696.9 L1020.0,697.0 L1020.5,697.0 L1021.0,697.1 L1021.5,697.1 L1022.0,697.1 L1022.5,697.1 L1023.0,697.0 L1023.5,697.0 L1024.0,696.9 L1024.5,696.9 L1025.0,696.8 L1025.5,696.8 L1026.0,696.8 L1026.5,696.9 L1027.0,696.9 L1027.5,697.0 L1028.0,697.0 L1028.5,697.1 L1029.0,697.1 L1029.5,697.2 L1030.0,697.2 L1030.5,697.2 L1031.0,697.2 L1031.5,697.1 L1032.0,697.1 L1032.5,697.0 L1033.0,697.0 L1033.5,696.9 L1034.0,696.9 L1034.5,696.9 L1035.0,696.9 L1035.5,696.9 L1036.0,696.9 L1036.5,697.0 L1037.0,697.0 L1037.5,697.1 L1038.0,697.1 L1038.5,697.2 L1039.0,697.2 L1039.5,697.3 L1040.0,697.3 L1040.5,697.3 L1041.0,697.3 L1041.5,697.3 L1042.0,697.2 L1042.5,697.2 L1043.0,697.2 L1043.5,697.2 L1044.0,697.2 L1044.5,697.2 L1045.0,697.2 L1045.5,697.2 L1046.0,697.2 L1046.5,697.2 L1047.0,697.2 L1047.5,697.2 L1048.0,697.2 L1048.5,697.2 L1049.0,697.1 L1049.5,697.1 L1050.0,697.0 L1050.5,697.0 L1051.0,696.9 L1051.5,696.9 L1052.0,696.9 L1052.5,696.8 L1053.0,696.8 L1053.5,696.9 L1054.0,696.9 L1054.5,696.9 L1055.0,697.0 L1055.5,697.0 L1056.0,697.0 L1056.5,697.1 L1057.0,697.1 L1057.5,697.1 L1058.0,697.1 L1058.5,697.1 L1059.0,697.2 L1059.5,697.2 L1060.0,697.2 L1060.5,697.2 L1061.0,697.2 L1061.5,697.2 L1062.0,697.2 L1062.5,697.2 L1063.0,697.2 L1063.5,697.2 L1064.0,697.1 L1064.5,697.1 L1065.0,697.1 L1065.5,697.1 L1066.0,697.1 L1066.5,697.2 L1067.0,697.2 L1067.5,697.2 L1068.0,697.2 L1068.5,697.3 L1069.0,697.2 L1069.5,697.2 L1070.0,697.1 L1070.5,697.1 L1071.0,697.0 L1071.5,696.9 L1072.0,696.9 L1072.5,696.8 L1073.0,696.7 L1073.5,696.6 L1074.0,696.5 L1074.5,696.2 L1075.0,695.9 L1075.5,695.4 L1076.0,694.7 L1076.5,693.9 L1077.0,693.0 L1077.5,691.9 L1078.0,690.9 L1078.5,689.9 L1079.0,689.2 L1079.5,688.7 L1080.0,688.5 L1080.5,688.6 L1081.0,689.1 L1081.5,689.8 L1082.0,690.7 L1082.5,691.6 L1083.0,692.3 L1083.5,692.8 L1084.0,693.0 L1084.5,693.0 L1085.0,692.6 L1085.5,692.2 L1086.0,691.7 L1086.5,691.4 L1087.0,691.3 L1087.5,691.6 L1088.0,692.2 L1088.5,692.9 L1089.0,693.8 L1089.5,694.7 L1090.0,695.5 L1090.5,696.2 L1091.0,696.6 L1091.5,696.6 L1092.0,696.0 L1092.5,694.0 L1093.0,689.5 L1093.5,680.4 L1094.0,663.9 L1094.5,637.8 L1095.0,601.1 L1095.5,556.5 L1096.0,510.3 L1096.5,472.1 L1097.0,451.4 L1097.5,452.5 L1098.0,468.1 L1098.5,489.9 L1099.0,512.7 L1099.5,534.4 L1100.0,554.1 L1100.5,571.8 L1101.0,587.5 L1101.5,601.2 L1102.0,612.9 L1102.5,622.8 L1103.0,630.5 L1103.5,636.1 L1104.0,639.7 L1104.5,641.5 L1105.0,642.6 L1105.5,644.0 L1106.0,646.8 L1106.5,651.5 L1107.0,657.7 L1107.5,664.6 L1108.0,671.2 L1108.5,676.8 L1109.0,681.1 L1109.5,684.1 L1110.0,686.3 L1110.5,688.0 L1111.0,689.2 L1111.5,690.3 L1112.0,691.2 L1112.5,691.9 L1113.0,692.5 L1113.5,693.0 L1114.0,693.4 L1114.5,693.7 L1115.0,693.9 L1115.5,694.0 L1116.0,694.1 L1116.5,694.1 L1117.0,694.1 L1117.5,694.1 L1118.0,694.1 L1118.5,694.1 L1119.0,694.1 L1119.5,694.2 L1120.0,694.3 L1120.5,694.5 L1121.0,694.7 L1121.5,694.9 L1122.0,695.1 L1122.5,695.2 L1123.0,695.3 L1123.5,695.3 L1124.0,695.3 L1124.5,695.2 L1125.0,695.1 L1125.5,695.0 L1126.0,694.8 L1126.5,694.7 L1127.0,694.5 L1127.5,694.4 L1128.0,694.3 L1128.5,694.2 L1129.0,694.1 L1129.5,694.0 L1130.0,694.0 L1130.5,694.0 L1131.0,694.0 L1131.5,694.0 L1132.0,694.1 L1132.5,694.2 L1133.0,694.3 L1133.5,694.5 L1134.0,694.6 L1134.5,694.8 L1135.0,695.0 L1135.5,695.2 L1136.0,695.4 L1136.5,695.5 L1137.0,695.7 L1137.5,695.9 L1138.0,696.0 L1138.5,696.2 L1139.0,696.3 L1139.5,696.4 L1140.0,696.5 L1140.5,696.5 L1141.0,696.5 L1141.5,696.5 L1142.0,696.4 L1142.5,696.3 L1143.0,696.1 L1143.5,695.9 L1144.0,695.7 L1144.5,695.5 L1145.0,695.3 L1145.5,695.2 L1146.0,695.0 L1146.5,695.0 L1147.0,694.9 L1147.5,695.0 L1148.0,695.0 L1148.5,695.1 L1149.0,695.3 L1149.5,695.4 L1150.0,695.6 L1150.5,695.8 L1151.0,695.9 L1151.5,696.1 L1152.0,696.3 L1152.5,696.4 L1153.0,696.6 L1153.5,696.7 L1154.0,696.8 L1154.5,696.9 L1155.0,697.0 L1155.5,697.0 L1156.0,697.0 L1156.5,696.9 L1157.0,696.8 L1157.5,696.7 L1158.0,696.5 L1158.5,696.3 L1159.0,696.1 L1159.5,695.9 L1160.0,695.6 L1160.5,695.4 L1161.0,695.2 L1161.5,695.0 L1162.0,694.8 L1162.5,694.7 L1163.0,694.7 L1163.5,694.7 L1164.0,694.7 L1164.5,694.9 L1165.0,695.1 L1165.5,695.3 L1166.0,695.6 L1166.5,695.9 L1167.0,696.2 L1167.5,696.4 L1168.0,696.6 L1168.5,696.7 L1169.0,696.8 L1169.5,696.9 L1170.0,696.8 L1170.5,696.7 L1171.0,696.6 L1171.5,696.4 L1172.0,696.3 L1172.5,696.0 L1173.0,695.8 L1173.5,695.6 L1174.0,695.3 L1174.5,695.1 L1175.0,694.9 L1175.5,694.6 L1176.0,694.5 L1176.5,694.3 L1177.0,694.2 L1177.5,694.2 L1178.0,694.2 L1178.5,694.3 L1179.0,694.4 L1179.5,694.6 L1180.0,694.8 L1180.5,695.0 L1181.0,695.3 L1181.5,695.5 L1182.0,695.8 L1182.5,696.1 L1183.0,696.3 L1183.5,696.5 L1184.0,696.6 L1184.5,696.6 L1185.0,696.6 L1185.5,696.5 L1186.0,696.3 L1186.5,696.1 L1187.0,695.8 L1187.5,695.5 L1188.0,695.3 L1188.5,695.1 L1189.0,695.0 L1189.5,694.9 L1190.0,694.9 L1190.5,694.9 L1191.0,695.0 L1191.5,695.0 L1192.0,695.1 L1192.5,695.2 L1193.0,695.3 L1193.5,695.4 L1194.0,695.4 L1194.5,695.5 L1195.0,695.5 L1195.5,695.6 L1196.0,695.6 L1196.5,695.6 L1197.0,695.6 L1197.5,695.6 L1198.0,695.6 L1198.5,695.6 L1199.0,695.5 L1199.5,695.4 L1200.0,695.3 L1200.5,695.2 L1201.0,695.1 L1201.5,694.9 L1202.0,694.8 L1202.5,694.6 L1203.0,694.3 L1203.5,694.1 L1204.0,693.9 L1204.5,693.6 L1205.0,693.4 L1205.5,693.1 L1206.0,692.9 L1206.5,692.6 L1207.0,692.4 L1207.5,692.3 L1208.0,692.2 L1208.5,692.1 L1209.0,692.0 L1209.5,692.0 L1210.0,692.0 L1210.5,692.0 L1211.0,692.0 L1211.5,692.0 L1212.0,692.1 L1212.5,692.2 L1213.0,692.3 L1213.5,692.5 L1214.0,692.7 L1214.5,693.0 L1215.0,693.3 L1215.5,693.6 L1216.0,693.9 L1216.5,694.1 L1217.0,694.3 L1217.5,694.4 L1218.0,694.4 L1218.5,694.3 L1219.0,694.1 L1219.5,693.8 L1220.0,693.5 L1220.5,693.1 L1221.0,692.7 L1221.5,692.3 L1222.0,691.9 L1222.5,691.5 L1223.0,691.1 L1223.5,690.8 L1224.0,690.5 L1224.5,690.3 L1225.0,690.1 L1225.5,690.1 L1226.0,690.0 L1226.5,690.0 L1227.0,690.1 L1227.5,690.2 L1228.0,690.3 L1228.5,690.5 L1229.0,690.6 L1229.5,690.7 L1230.0,690.8 L1230.5,690.8 L1231.0,690.7 L1231.5,690.6 L1232.0,690.2 L1232.5,689.8 L1233.0,689.2 L1233.5,688.5 L1234.0,687.8 L1234.5,686.9 L1235.0,686.1 L1235.5,685.2 L1236.0,684.3 L1236.5,683.5 L1237.0,682.6 L1237.5,681.9 L1238.0,681.2 L1238.5,680.7 L1239.0,680.3 L1239.5,680.1 L1240.0,680.1 L1240.5,680.3 L1241.0,680.7 L1241.5,681.3 L1242.0,682.1 L1242.5,682.9 L1243.0,683.9 L1243.5,684.9 L1244.0,686.0 L1244.5,687.0 L1245.0,688.0 L1245.5,688.6 L1246.0,687.6 L1246.5,682.1 L1247.0,669.0 L1247.5,648.9 L1248.0,626.5 L1248.5,607.4 L1249.0,594.7 L1249.5,588.3 L1250.0,586.0 L1250.5,585.7 L1251.0,586.0 L1251.5,586.2 L1252.0,587.0 L1252.5,589.8 L1253.0,596.7 L1253.5,609.9 L1254.0,629.4 L1254.5,652.2 L1255.0,672.5 L1255.5,685.6 L1256.0,690.9 L1256.5,691.5 L1257.0,690.4 L1257.5,688.9 L1258.0,687.6 L1258.5,686.8 L1259.0,686.4 L1259.5,686.7 L1260.0,687.6 L1260.5,688.8 L1261.0,690.1 L1261.5,691.4 L1262.0,692.3 L1262.5,692.8 L1263.0,692.8 L1263.5,692.4 L1264.0,691.6 L1264.5,690.7 L1265.0,689.8 L1265.5,689.1 L1266.0,688.9 L1266.5,689.1 L1267.0,689.8 L1267.5,690.8 L1268.0,692.0 L1268.5,693.1 L1269.0,694.2 L1269.5,695.1 L1270.0,695.8 L1270.5,696.2 L1271.0,696.6 L1271.5,696.8 L1272.0,696.9 L1272.5,697.0 L1273.0,697.1 L1273.5,697.1 L1274.0,697.1 L1274.5,697.0 L1275.0,697.0 L1275.5,696.9 L1276.0,696.8 L1276.5,696.7 L1277.0,696.6 L1277.5,696.6 L1278.0,696.5 L1278.5,696.5 L1279.0,696.4 L1279.5,696.4 L1280.0,696.4 L1280.5,696.4 L1281.0,696.4 L1281.5,696.4 L1282.0,696.4 L1282.5,696.4 L1283.0,696.4 L1283.5,696.4 L1284.0,696.4 L1284.5,696.4 L1285.0,696.3 L1285.5,696.2 L1286.0,696.2 L1286.5,696.1 L1287.0,696.1 L1287.5,696.0 L1288.0,696.0 L1288.5,696.0 L1289.0,696.0 L1289.5,695.9 L1290.0,695.9 L1290.5,695.9 L1291.0,695.9 L1291.5,695.9 L1292.0,695.9 L1292.5,695.9 L1293.0,695.9 L1293.5,695.9 L1294.0,695.9 L1294.5,695.9 L1295.0,695.9 L1295.5,695.9 L1296.0,695.9 L1296.5,695.8 L1297.0,695.8 L1297.5,695.7 L1298.0,695.7 L1298.5,695.7 L1299.0,695.8 L1299.5,695.9 L1300.0,696.0 L1300.5,696.1 L1301.0,696.2 L1301.5,696.3 L1302.0,696.3 L1302.5,696.3 L1303.0,696.3 L1303.5,696.3 L1304.0,696.3 L1304.5,696.2 L1305.0,696.2 L1305.5,696.2 L1306.0,696.1 L1306.5,696.1 L1307.0,696.0 L1307.5,696.0 L1308.0,695.9 L1308.5,695.8 L1309.0,695.8 L1309.5,695.8 L1310.0,695.8 L1310.5,695.9 L1311.0,696.0 L1311.5,696.2 L1312.0,696.4 L1312.5,696.5 L1313.0,696.6 L1313.5,696.7 L1314.0,696.8 L1314.5,696.8 L1315.0,696.7 L1315.5,696.6 L1316.0,696.5 L1316.5,696.4 L1317.0,696.3 L1317.5,696.2 L1318.0,696.1 L1318.5,696.1 L1319.0,696.1 L1319.5,696.1 L1320.0,696.2 L1320.5,696.2 L1321.0,696.3 L1321.5,696.4 L1322.0,696.5 L1322.5,696.6 L1323.0,696.7 L1323.5,696.8 L1324.0,696.8 L1324.5,696.8 L1325.0,696.8 L1325.5,696.8 L1326.0,696.7 L1326.5,696.6 L1327.0,696.4 L1327.5,696.3 L1328.0,696.1 L1328.5,696.0 L1329.0,695.9 L1329.5,695.8 L1330.0,695.8 L1330.5,695.8 L1331.0,695.8 L1331.5,695.9 L1332.0,696.0 L1332.5,696.1 L1333.0,696.3 L1333.5,696.4 L1334.0,696.5 L1334.5,696.6 L1335.0,696.7 L1335.5,696.7 L1336.0,696.7 L1336.5,696.6 L1337.0,696.5 L1337.5,696.4 L1338.0,696.3 L1338.5,696.2 L1339.0,696.1 L1339.5,696.0 L1340.0,696.0 L1340.5,695.9 L1341.0,695.9 L1341.5,695.9 L1342.0,696.0 L1342.5,696.1 L1343.0,696.2 L1343.5,696.4 L1344.0,696.5 L1344.5,696.6 L1345.0,696.7 L1345.5,696.8 L1346.0,696.8 L1346.5,696.8 L1347.0,696.8 L1347.5,696.8 L1348.0,696.7 L1348.5,696.7 L1349.0,696.6 L1349.5,696.6 L1350.0,696.6 L1350.5,696.7 L1351.0,696.7 L1351.5,696.8 L1352.0,696.9 L1352.5,697.0 L1353.0,697.1 L1353.5,697.2 L1354.0,697.3 L1354.5,697.3 L1355.0,697.4 L1355.5,697.4 L1356.0,697.3 L1356.5,697.3 L1357.0,697.2 L1357.5,697.1 L1358.0,697.0 L1358.5,696.9 L1359.0,696.7 L1359.5,696.6 L1360.0,696.4 L1360.5,696.3 L1361.0,696.1 L1361.5,696.0 L1362.0,695.9 L1362.5,695.9 L1363.0,695.9 L1363.5,696.0 L1364.0,696.1 L1364.5,696.2 L1365.0,696.3 L1365.5,696.4 L1366.0,696.5 L1366.5,696.5 L1367.0,696.5 L1367.5,696.5 L1368.0,696.4 L1368.5,696.3 L1369.0,696.2 L1369.5,696.1 L1370.0,696.0 L1370.5,696.0 L1371.0,696.0 L1371.5,696.0 L1372.0,696.0 L1372.5,696.1 L1373.0,696.1 L1373.5,696.2 L1374.0,696.2 L1374.5,696.3 L1375.0,696.3 L1375.5,696.4 L1376.0,696.4 L1376.5,696.5 L1377.0,696.5 L1377.5,696.5 L1378.0,696.6 L1378.5,696.6 L1379.0,696.6 L1379.5,696.7 L1380.0,696.7 L1380.5,696.7 L1381.0,696.7 L1381.5,696.7 L1382.0,696.8 L1382.5,696.8 L1383.0,696.9 L1383.5,696.9 L1384.0,697.0 L1384.5,697.0 L1385.0,697.0 L1385.5,697.1 L1386.0,697.0 L1386.5,697.0 L1387.0,696.9 L1387.5,696.8 L1388.0,696.7 L1388.5,696.6 L1389.0,696.5 L1389.5,696.4 L1390.0,696.4 L1390.5,696.4 L1391.0,696.5 L1391.5,696.5 L1392.0,696.6 L1392.5,696.7 L1393.0,696.8 L1393.5,696.8 L1394.0,696.8 L1394.5,696.8 L1395.0,696.7 L1395.5,696.6 L1396.0,696.4 L1396.5,696.2 L1397.0,696.1 L1397.5,695.9 L1398.0,695.6 L1398.5,694.3 L1399.0,690.4 L1399.5,683.1 L1400.0,674.1 L1400.5,666.1 L1401.0,660.8 L1401.5,658.3 L1402.0,657.4 L1402.5,657.4 L1403.0,657.4 L1403.5,657.5 L1404.0,658.3 L1404.5,660.5 L1405.0,665.3 L1405.5,673.0 L1406.0,682.2 L1406.5,690.2 L1407.0,694.8 L1407.5,696.6 L1408.0,697.0 L1408.5,697.0 L1409.0,697.0 L1409.5,696.9 L1410.0,696.8 L1410.5,696.7 L1411.0,696.5 L1411.5,696.4 L1412.0,696.2 L1412.5,696.1 L1413.0,696.0 L1413.5,695.9 L1414.0,695.9 L1414.5,695.9 L1415.0,695.9 L1415.5,696.0 L1416.0,696.1 L1416.5,696.2 L1417.0,696.3 L1417.5,696.4 L1418.0,696.5 L1418.5,696.7 L1419.0,696.8 L1419.5,696.9 L1420.0,697.0 L1420.5,697.0 L1421.0,697.1 L1421.5,697.1 L1422.0,697.0 L1422.5,697.0 L1423.0,697.0 L1423.5,696.9 L1424.0,696.9 L1424.5,696.9 L1425.0,696.9 L1425.5,696.9 L1426.0,696.9 L1426.5,697.0 L1427.0,697.0 L1427.5,697.1 L1428.0,697.1 L1428.5,697.2 L1429.0,697.2 L1429.5,697.2 L1430.0,697.1 L1430.5,697.0 L1431.0,696.9 L1431.5,696.8 L1432.0,696.6 L1432.5,696.4 L1433.0,696.2 L1433.5,696.0 L1434.0,695.9 L1434.5,695.8 L1435.0,695.8 L1435.5,695.8 L1436.0,695.9 L1436.5,696.0 L1437.0,696.1 L1437.5,696.2 L1438.0,696.4 L1438.5,696.5 L1439.0,696.6 L1439.5,696.6 L1440.0,696.6 L1440.5,696.7 L1441.0,696.7 L1441.5,696.6 L1442.0,696.6 L1442.5,696.6 L1443.0,696.6 L1443.5,696.6 L1444.0,696.6 L1444.5,696.7 L1445.0,696.7 L1445.5,696.8 L1446.0,696.8 L1446.5,696.9 L1447.0,697.0 L1447.5,697.0 L1448.0,697.0 L1448.5,697.0 L1449.0,697.0 L1449.5,696.9 L1450.0,696.8 L1450.5,696.7 L1451.0,696.6 L1451.5,696.4 L1452.0,696.3 L1452.5,696.3 L1453.0,696.2 L1453.5,696.2 L1454.0,696.2 L1454.5,696.2 L1455.0,696.2 L1455.5,696.3 L1456.0,696.3 L1456.5,696.4 L1457.0,696.5 L1457.5,696.5 L1458.0,696.6 L1458.5,696.7 L1459.0,696.8 L1459.5,696.9 L1460.0,696.9 L1460.5,697.0 L1461.0,697.0 L1461.5,697.0 L1462.0,697.0 L1462.5,696.9 L1463.0,696.8 L1463.5,696.8 L1464.0,696.7 L1464.5,696.6 L1465.0,696.5 L1465.5,696.3 L1466.0,696.2 L1466.5,696.1 L1467.0,696.1 L1467.5,696.0 L1468.0,695.9 L1468.5,695.9 L1469.0,695.9 L1469.5,695.9 L1470.0,695.9 L1470.5,696.0 L1471.0,696.1 L1471.5,696.1 L1472.0,696.2 L1472.5,696.3 L1473.0,696.3 L1473.5,696.3 L1474.0,696.3 L1474.5,696.2 L1475.0,696.1 L1475.5,695.9 L1476.0,695.8 L1476.5,695.6 L1477.0,695.4 L1477.5,695.3 L1478.0,695.3 L1478.5,695.3 L1479.0,695.3 L1479.5,695.4 L1480.0,695.6 L1480.5,695.8 L1481.0,696.0 L1481.5,696.3 L1482.0,696.5 L1482.5,696.6 L1483.0,696.7 L1483.5,696.8 L1484.0,696.8 L1484.5,696.8 L1485.0,696.8 L1485.5,696.7 L1486.0,696.7 L1486.5,696.7 L1487.0,696.6 L1487.5,696.6 L1488.0,696.7 L1488.5,696.7 L1489.0,696.8 L1489.5,696.9 L1490.0,696.9 L1490.5,697.0 L1491.0,697.0 L1491.5,697.0 L1492.0,697.0 L1492.5,697.0 L1493.0,696.9 L1493.5,696.9 L1494.0,696.8 L1494.5,696.7 L1495.0,696.7 L1495.5,696.6 L1496.0,696.6 L1496.5,696.6 L1497.0,696.6 L1497.5,696.6 L1498.0,696.6 L1498.5,696.7 L1499.0,696.8 L1499.5,696.8 L1500.0,696.9 L1500.5,697.0 L1501.0,697.0 L1501.5,697.1 L1502.0,697.1 L1502.5,697.1 L1503.0,697.1 L1503.5,697.1 L1504.0,697.2 L1504.5,697.2 L1505.0,697.2 L1505.5,697.2 L1506.0,697.2 L1506.5,697.2 L1507.0,697.2 L1507.5,697.2 L1508.0,697.2 L1508.5,697.3 L1509.0,697.3 L1509.5,697.3 L1510.0,697.3 L1510.5,697.3 L1511.0,697.3 L1511.5,697.3 L1512.0,697.3 L1512.5,697.3 L1513.0,697.2 L1513.5,697.2 L1514.0,697.2 L1514.5,697.2 L1515.0,697.2 L1515.5,697.1 L1516.0,697.1 L1516.5,697.1 L1517.0,697.1 L1517.5,697.1 L1518.0,697.1 L1518.5,697.1 L1519.0,697.0 L1519.5,697.0 L1520.0,696.9 L1520.5,696.9 L1521.0,696.8 L1521.5,696.8 L1522.0,696.7 L1522.5,696.7 L1523.0,696.7 L1523.5,696.7 L1524.0,696.7 L1524.5,696.8 L1525.0,696.8 L1525.5,696.9 L1526.0,696.9 L1526.5,697.0 L1527.0,697.1 L1527.5,697.2 L1528.0,697.2 L1528.5,697.3 L1529.0,697.3 L1529.5,697.3 L1530.0,697.3 L1530.5,697.3 L1531.0,697.2 L1531.5,697.2 L1532.0,697.2 L1532.5,697.1 L1533.0,697.1 L1533.5,697.1 L1534.0,697.1 L1534.5,697.1 L1535.0,697.1 L1535.5,697.1 L1536.0,697.1 L1536.5,697.1 L1537.0,697.1 L1537.5,697.0 L1538.0,697.0 L1538.5,696.9 L1539.0,696.8 L1539.5,696.8 L1540.0,696.7 L1540.5,696.7 L1541.0,696.6 L1541.5,696.6 L1542.0,696.7 L1542.5,696.7 L1543.0,696.7 L1543.5,696.8 L1544.0,696.8 L1544.5,696.9 L1545.0,697.0 L1545.5,697.0 L1546.0,697.0 L1546.5,697.0 L1547.0,696.9 L1547.5,696.8 L1548.0,696.6 L1548.5,696.4 L1549.0,696.0 L1549.5,695.6 L1550.0,695.1 L1550.5,694.5 L1551.0,693.8 L1551.5,693.2 L1552.0,692.5 L1552.5,691.9 L1553.0,691.4 L1553.5,691.0 L1554.0,690.8 L1554.5,690.8 L1555.0,690.9 L1555.5,691.2 L1556.0,691.6 L1556.5,692.2 L1557.0,692.7 L1557.5,693.3 L1558.0,693.9 L1558.5,694.4 L1559.0,694.9 L1559.5,695.4 L1560.0,695.8 L1560.5,696.1 L1561.0,696.3 L1561.5,696.5 L1562.0,696.7 L1562.5,696.8 L1563.0,696.9 L1563.5,696.9 L1564.0,697.0 L1564.5,697.0 L1565.0,697.0 L1565.5,697.0 L1566.0,697.0 L1566.5,697.0 L1567.0,697.0 L1567.5,697.0 L1568.0,697.0 L1568.5,697.1 L1569.0,697.1 L1569.5,697.2 L1570.0,697.3 L1570.5,697.3 L1571.0,697.3 L1571.5,697.4 L1572.0,697.4 L1572.5,697.4 L1573.0,697.4 L1573.5,697.4 L1574.0,697.3 L1574.5,697.3 L1575.0,697.3 L1575.5,697.3 L1576.0,697.3 L1576.5,697.3 L1577.0,697.2 L1577.5,697.2 L1578.0,697.2 L1578.5,697.2 L1579.0,697.2 L1579.5,697.2 L1580.0,697.2 L1580.5,697.2 L1581.0,697.2 L1581.5,697.1 L1582.0,697.1 L1582.5,697.1 L1583.0,697.0 L1583.5,697.0 L1584.0,696.9 L1584.5,696.9 L1585.0,696.8 L1585.5,696.7 L1586.0,696.7 L1586.5,696.7 L1587.0,696.6 L1587.5,696.6 L1588.0,696.6 L1588.5,696.6 L1589.0,696.7 L1589.5,696.7 L1590.0,696.8 L1590.5,696.8 L1591.0,696.9 L1591.5,696.9 L1592.0,697.0 L1592.5,697.0 L1593.0,697.1 L1593.5,697.1 L1594.0,697.1 L1594.5,697.2 L1595.0,697.2 L1595.5,697.2 L1596.0,697.3 L1596.5,697.3 L1597.0,697.2 L1597.5,697.2 L1598.0,697.2 L1598.5,697.1 L1599.0,697.0 L1599.5,697.0 L1600.0,696.9 L1600.5,696.8 L1601.0,696.8 L1601.5,696.8 L1602.0,696.7 L1602.5,696.8 L1603.0,696.8 L1603.5,696.8 L1604.0,696.9 L1604.5,696.9 L1605.0,697.0 L1605.5,697.0 L1606.0,697.0 L1606.5,697.0 L1607.0,697.0 L1607.5,697.0 L1608.0,697.0 L1608.5,697.1 L1609.0,697.1 L1609.5,697.1 L1610.0,697.1 L1610.5,697.2 L1611.0,697.2 L1611.5,697.2 L1612.0,697.3 L1612.5,697.3 L1613.0,697.4 L1613.5,697.4 L1614.0,697.4 L1614.5,697.4 L1615.0,697.4 L1615.5,697.4 L1616.0,697.4 L1616.5,697.4 L1617.0,697.4 L1617.5,697.3 L1618.0,697.3 L1618.5,697.3 L1619.0,697.3 L1619.5,697.3 L1620.0,697.3 L1620.5,697.3 L1621.0,697.3 L1621.5,697.3 L1622.0,697.3 L1622.5,697.3 L1623.0,697.3 L1623.5,697.3 L1624.0,697.3 L1624.5,697.3 L1625.0,697.3 L1625.5,697.2 L1626.0,697.2 L1626.5,697.2 L1627.0,697.2 L1627.5,697.1 L1628.0,697.1 L1628.5,697.1 L1629.0,697.1 L1629.5,697.0 L1630.0,697.0 L1630.5,697.0 L1631.0,697.0 L1631.5,697.0 L1632.0,697.0 L1632.5,697.0 L1633.0,697.0 L1633.5,697.0 L1634.0,697.1 L1634.5,697.1 L1635.0,697.1 L1635.5,697.1 L1636.0,697.1 L1636.5,697.1 L1637.0,697.1 L1637.5,697.0 L1638.0,697.0 L1638.5,697.0 L1639.0,697.0 L1639.5,696.9 L1640.0,696.9 L1640.5,696.9 L1641.0,696.8 L1641.5,696.8 L1642.0,696.8 L1642.5,696.7 L1643.0,696.7 L1643.5,696.7 L1644.0,696.7 L1644.5,696.7 L1645.0,696.8 L1645.5,696.9 L1646.0,696.9 L1646.5,697.0 L1647.0,697.1 L1647.5,697.1 L1648.0,697.2 L1648.5,697.2 L1649.0,697.2 L1649.5,697.2 L1650.0,697.2 L1650.5,697.2 L1651.0,697.2 L1651.5,697.3 L1652.0,697.3 L1652.5,697.3 L1653.0,697.3 L1653.5,697.3 L1654.0,697.3 L1654.5,697.3 L1655.0,697.2 L1655.5,697.2 L1656.0,697.1 L1656.5,697.1 L1657.0,697.0 L1657.5,696.9 L1658.0,696.9 L1658.5,696.9 L1659.0,696.9 L1659.5,696.9 L1660.0,696.8 L1660.5,696.8 L1661.0,696.8 L1661.5,696.8 L1662.0,696.8 L1662.5,696.8 L1663.0,696.8 L1663.5,696.8 L1664.0,696.8 L1664.5,696.8 L1665.0,696.9 L1665.5,696.9 L1666.0,697.0 L1666.5,697.0 L1667.0,697.1 L1667.5,697.1 L1668.0,697.1 L1668.5,697.1 L1669.0,697.0 L1669.5,697.0 L1670.0,696.9 L1670.5,696.9 L1671.0,696.8 L1671.5,696.8 L1672.0,696.7 L1672.5,696.7 L1673.0,696.7 L1673.5,696.7 L1674.0,696.7 L1674.5,696.8 L1675.0,696.8 L1675.5,696.8 L1676.0,696.9 L1676.5,696.9 L1677.0,696.9 L1677.5,696.9 L1678.0,696.9 L1678.5,696.9 L1679.0,696.9 L1679.5,696.8 L1680.0,696.8 L1680.5,696.7 L1681.0,696.7 L1681.5,696.7 L1682.0,696.7 L1682.5,696.8 L1683.0,696.8 L1683.5,696.8 L1684.0,696.9 L1684.5,696.9 L1685.0,696.9 L1685.5,696.9 L1686.0,696.8 L1686.5,696.8 L1687.0,696.7 L1687.5,696.6 L1688.0,696.5 L1688.5,696.5 L1689.0,696.4 L1689.5,696.4 L1690.0,696.4 L1690.5,696.4 L1691.0,696.4 L1691.5,696.4 L1692.0,696.5 L1692.5,696.6 L1693.0,696.6 L1693.5,696.7 L1694.0,696.7 L1694.5,696.8 L1695.0,696.8 L1695.5,696.8 L1696.0,696.8 L1696.5,696.7 L1697.0,696.7 L1697.5,696.7 L1698.0,696.6 L1698.5,696.5 L1699.0,696.4 L1699.5,696.3 L1700.0,696.2 L1700.5,696.0 L1701.0,695.8 L1701.5,695.5 L1702.0,695.2 L1702.5,694.8 L1703.0,694.4 L1703.5,694.1 L1704.0,693.8 L1704.5,693.5 L1705.0,693.3 L1705.5,693.2 L1706.0,693.2 L1706.5,693.2 L1707.0,693.4 L1707.5,693.7 L1708.0,694.0 L1708.5,694.3 L1709.0,694.7 L1709.5,695.1 L1710.0,695.4 L1710.5,695.7 L1711.0,695.9 L1711.5,696.1 L1712.0,696.3 L1712.5,696.4 L1713.0,696.5 L1713.5,696.5 L1714.0,696.5 L1714.5,696.6 L1715.0,696.6 L1715.5,696.6 L1716.0,696.6 L1716.5,696.6 L1717.0,696.6 L1717.5,696.6 L1718.0,696.6 L1718.5,696.6 L1719.0,696.6 L1719.5,696.5 L1720.0,696.5 L1720.5,696.4 L1721.0,696.4 L1721.5,696.3 L1722.0,696.3 L1722.5,696.3 L1723.0,696.2 L1723.5,696.2 L1724.0,696.3 L1724.5,696.3 L1725.0,696.3 L1725.5,696.4 L1726.0,696.5 L1726.5,696.6 L1727.0,696.7 L1727.5,696.8 L1728.0,696.9 L1728.5,697.0 L1729.0,697.1 L1729.5,697.2 L1730.0,697.2 L1730.5,697.3 L1731.0,697.4" fill="none" stroke="#eea035" stroke-width="1.8" stroke-linejoin="round"/>
<path d="M175.0,697.3 L175.5,697.3 L176.0,697.3 L176.5,697.4 L177.0,697.4 L177.5,697.4 L178.0,697.5 L178.5,697.5 L179.0,697.5 L179.5,697.4 L180.0,697.4 L180.5,697.3 L181.0,697.3 L181.5,697.2 L182.0,697.2 L182.5,697.2 L183.0,697.2 L183.5,697.1 L184.0,697.0 L184.5,696.8 L185.0,696.5 L185.5,696.1 L186.0,695.5 L186.5,694.8 L187.0,694.1 L187.5,693.4 L188.0,692.9 L188.5,692.5 L189.0,692.4 L189.5,692.5 L190.0,692.9 L190.5,693.4 L191.0,694.1 L191.5,694.7 L192.0,695.4 L192.5,695.9 L193.0,696.4 L193.5,696.7 L194.0,696.9 L194.5,697.1 L195.0,697.2 L195.5,697.3 L196.0,697.4 L196.5,697.4 L197.0,697.4 L197.5,697.3 L198.0,697.2 L198.5,697.1 L199.0,697.1 L199.5,697.0 L200.0,697.0 L200.5,697.1 L201.0,697.2 L201.5,697.3 L202.0,697.3 L202.5,697.4 L203.0,697.4 L203.5,697.4 L204.0,697.4 L204.5,697.4 L205.0,697.4 L205.5,697.4 L206.0,697.4 L206.5,697.4 L207.0,697.4 L207.5,697.4 L208.0,697.4 L208.5,697.4 L209.0,697.4 L209.5,697.4 L210.0,697.3 L210.5,697.2 L211.0,697.2 L211.5,697.1 L212.0,697.1 L212.5,697.1 L213.0,697.2 L213.5,697.2 L214.0,697.2 L214.5,697.3 L215.0,697.3 L215.5,697.3 L216.0,697.3 L216.5,697.3 L217.0,697.3 L217.5,697.3 L218.0,697.3 L218.5,697.4 L219.0,697.4 L219.5,697.4 L220.0,697.4 L220.5,697.4 L221.0,697.4 L221.5,697.4 L222.0,697.3 L222.5,697.3 L223.0,697.3 L223.5,697.2 L224.0,697.2 L224.5,697.2 L225.0,697.3 L225.5,697.3 L226.0,697.3 L226.5,697.3 L227.0,697.3 L227.5,697.3 L228.0,697.2 L228.5,697.2 L229.0,697.2 L229.5,697.2 L230.0,697.2 L230.5,697.2 L231.0,697.2 L231.5,697.3 L232.0,697.3 L232.5,697.3 L233.0,697.3 L233.5,697.2 L234.0,697.1 L234.5,697.1 L235.0,697.0 L235.5,697.0 L236.0,697.1 L236.5,697.1 L237.0,697.2 L237.5,697.3 L238.0,697.3 L238.5,697.3 L239.0,697.3 L239.5,697.3 L240.0,697.2 L240.5,697.2 L241.0,697.2 L241.5,697.3 L242.0,697.3 L242.5,697.4 L243.0,697.4 L243.5,697.4 L244.0,697.4 L244.5,697.4 L245.0,697.3 L245.5,697.3 L246.0,697.2 L246.5,697.1 L247.0,697.1 L247.5,697.0 L248.0,697.1 L248.5,697.1 L249.0,697.2 L249.5,697.2 L250.0,697.3 L250.5,697.3 L251.0,697.4 L251.5,697.4 L252.0,697.3 L252.5,697.3 L253.0,697.3 L253.5,697.3 L254.0,697.2 L254.5,697.2 L255.0,697.2 L255.5,697.2 L256.0,697.3 L256.5,697.3 L257.0,697.3 L257.5,697.4 L258.0,697.4 L258.5,697.4 L259.0,697.4 L259.5,697.4 L260.0,697.4 L260.5,697.4 L261.0,697.4 L261.5,697.4 L262.0,697.4 L262.5,697.4 L263.0,697.4 L263.5,697.4 L264.0,697.4 L264.5,697.4 L265.0,697.4 L265.5,697.5 L266.0,697.5 L266.5,697.5 L267.0,697.5 L267.5,697.4 L268.0,697.4 L268.5,697.4 L269.0,697.3 L269.5,697.3 L270.0,697.3 L270.5,697.3 L271.0,697.3 L271.5,697.3 L272.0,697.4 L272.5,697.4 L273.0,697.4 L273.5,697.4 L274.0,697.4 L274.5,697.4 L275.0,697.4 L275.5,697.4 L276.0,697.4 L276.5,697.3 L277.0,697.3 L277.5,697.3 L278.0,697.4 L278.5,697.4 L279.0,697.4 L279.5,697.4 L280.0,697.4 L280.5,697.3 L281.0,697.3 L281.5,697.3 L282.0,697.3 L282.5,697.3 L283.0,697.3 L283.5,697.3 L284.0,697.3 L284.5,697.4 L285.0,697.4 L285.5,697.3 L286.0,697.3 L286.5,697.3 L287.0,697.2 L287.5,697.2 L288.0,697.2 L288.5,697.2 L289.0,697.2 L289.5,697.2 L290.0,697.2 L290.5,697.3 L291.0,697.3 L291.5,697.3 L292.0,697.3 L292.5,697.3 L293.0,697.2 L293.5,697.2 L294.0,697.2 L294.5,697.2 L295.0,697.2 L295.5,697.3 L296.0,697.3 L296.5,697.3 L297.0,697.4 L297.5,697.4 L298.0,697.4 L298.5,697.3 L299.0,697.3 L299.5,697.3 L300.0,697.3 L300.5,697.4 L301.0,697.4 L301.5,697.4 L302.0,697.4 L302.5,697.5 L303.0,697.5 L303.5,697.5 L304.0,697.5 L304.5,697.4 L305.0,697.4 L305.5,697.3 L306.0,697.3 L306.5,697.3 L307.0,697.3 L307.5,697.3 L308.0,697.4 L308.5,697.4 L309.0,697.4 L309.5,697.4 L310.0,697.4 L310.5,697.3 L311.0,697.3 L311.5,697.2 L312.0,697.1 L312.5,697.1 L313.0,697.0 L313.5,697.0 L314.0,697.0 L314.5,697.1 L315.0,697.1 L315.5,697.2 L316.0,697.2 L316.5,697.3 L317.0,697.3 L317.5,697.4 L318.0,697.4 L318.5,697.4 L319.0,697.4 L319.5,697.4 L320.0,697.4 L320.5,697.4 L321.0,697.4 L321.5,697.4 L322.0,697.4 L322.5,697.4 L323.0,697.4 L323.5,697.4 L324.0,697.4 L324.5,697.4 L325.0,697.5 L325.5,697.5 L326.0,697.4 L326.5,697.4 L327.0,697.4 L327.5,697.3 L328.0,697.3 L328.5,697.3 L329.0,697.2 L329.5,697.2 L330.0,697.3 L330.5,697.3 L331.0,697.3 L331.5,697.3 L332.0,697.4 L332.5,697.4 L333.0,697.4 L333.5,697.4 L334.0,697.4 L334.5,697.4 L335.0,697.3 L335.5,697.3 L336.0,697.1 L336.5,696.9 L337.0,696.3 L337.5,695.4 L338.0,694.2 L338.5,692.4 L339.0,690.3 L339.5,688.2 L340.0,686.2 L340.5,684.8 L341.0,684.2 L341.5,684.7 L342.0,686.0 L342.5,687.9 L343.0,690.0 L343.5,692.1 L344.0,693.8 L344.5,695.1 L345.0,696.1 L345.5,696.7 L346.0,697.0 L346.5,697.2 L347.0,697.3 L347.5,697.3 L348.0,697.3 L348.5,697.3 L349.0,697.3 L349.5,697.2 L350.0,697.3 L350.5,697.3 L351.0,697.4 L351.5,697.4 L352.0,697.4 L352.5,697.4 L353.0,697.4 L353.5,697.4 L354.0,697.4 L354.5,697.3 L355.0,697.3 L355.5,697.2 L356.0,697.2 L356.5,697.2 L357.0,697.3 L357.5,697.3 L358.0,697.4 L358.5,697.4 L359.0,697.4 L359.5,697.3 L360.0,697.3 L360.5,697.2 L361.0,697.1 L361.5,697.1 L362.0,697.1 L362.5,697.1 L363.0,697.2 L363.5,697.3 L364.0,697.3 L364.5,697.4 L365.0,697.4 L365.5,697.4 L366.0,697.4 L366.5,697.4 L367.0,697.4 L367.5,697.4 L368.0,697.3 L368.5,697.3 L369.0,697.3 L369.5,697.4 L370.0,697.4 L370.5,697.4 L371.0,697.4 L371.5,697.4 L372.0,697.5 L372.5,697.5 L373.0,697.4 L373.5,697.4 L374.0,697.4 L374.5,697.3 L375.0,697.3 L375.5,697.2 L376.0,697.2 L376.5,697.1 L377.0,697.1 L377.5,697.0 L378.0,697.0 L378.5,697.1 L379.0,697.1 L379.5,697.1 L380.0,697.1 L380.5,697.1 L381.0,697.1 L381.5,697.1 L382.0,697.1 L382.5,697.0 L383.0,697.0 L383.5,697.1 L384.0,697.1 L384.5,697.1 L385.0,697.1 L385.5,697.1 L386.0,697.1 L386.5,697.1 L387.0,697.1 L387.5,697.1 L388.0,697.1 L388.5,697.1 L389.0,697.1 L389.5,697.1 L390.0,697.2 L390.5,697.2 L391.0,697.3 L391.5,697.3 L392.0,697.4 L392.5,697.4 L393.0,697.4 L393.5,697.4 L394.0,697.4 L394.5,697.3 L395.0,697.2 L395.5,697.2 L396.0,697.1 L396.5,697.1 L397.0,697.1 L397.5,697.2 L398.0,697.2 L398.5,697.3 L399.0,697.3 L399.5,697.4 L400.0,697.4 L400.5,697.4 L401.0,697.4 L401.5,697.4 L402.0,697.4 L402.5,697.4 L403.0,697.4 L403.5,697.5 L404.0,697.5 L404.5,697.5 L405.0,697.5 L405.5,697.4 L406.0,697.4 L406.5,697.4 L407.0,697.4 L407.5,697.3 L408.0,697.3 L408.5,697.3 L409.0,697.2 L409.5,697.2 L410.0,697.2 L410.5,697.2 L411.0,697.2 L411.5,697.3 L412.0,697.3 L412.5,697.3 L413.0,697.4 L413.5,697.4 L414.0,697.4 L414.5,697.3 L415.0,697.3 L415.5,697.3 L416.0,697.3 L416.5,697.3 L417.0,697.3 L417.5,697.4 L418.0,697.4 L418.5,697.4 L419.0,697.4 L419.5,697.4 L420.0,697.3 L420.5,697.3 L421.0,697.2 L421.5,697.2 L422.0,697.1 L422.5,697.1 L423.0,697.0 L423.5,697.0 L424.0,697.1 L424.5,697.1 L425.0,697.1 L425.5,697.2 L426.0,697.3 L426.5,697.3 L427.0,697.4 L427.5,697.4 L428.0,697.4 L428.5,697.4 L429.0,697.4 L429.5,697.4 L430.0,697.4 L430.5,697.4 L431.0,697.4 L431.5,697.4 L432.0,697.4 L432.5,697.4 L433.0,697.4 L433.5,697.4 L434.0,697.4 L434.5,697.4 L435.0,697.4 L435.5,697.4 L436.0,697.3 L436.5,697.2 L437.0,697.0 L437.5,696.8 L438.0,696.5 L438.5,696.2 L439.0,696.0 L439.5,695.8 L440.0,695.8 L440.5,695.9 L441.0,696.1 L441.5,696.4 L442.0,696.6 L442.5,696.9 L443.0,697.1 L443.5,697.3 L444.0,697.3 L444.5,697.4 L445.0,697.4 L445.5,697.3 L446.0,697.2 L446.5,697.1 L447.0,697.1 L447.5,697.0 L448.0,697.0 L448.5,697.0 L449.0,697.1 L449.5,697.2 L450.0,697.3 L450.5,697.4 L451.0,697.4 L451.5,697.4 L452.0,697.4 L452.5,697.3 L453.0,697.3 L453.5,697.2 L454.0,697.2 L454.5,697.1 L455.0,697.1 L455.5,697.0 L456.0,697.0 L456.5,697.0 L457.0,697.1 L457.5,697.1 L458.0,697.2 L458.5,697.2 L459.0,697.2 L459.5,697.1 L460.0,697.0 L460.5,696.8 L461.0,696.7 L461.5,696.6 L462.0,696.5 L462.5,696.6 L463.0,696.7 L463.5,696.9 L464.0,697.0 L464.5,697.2 L465.0,697.2 L465.5,697.2 L466.0,697.1 L466.5,697.1 L467.0,696.9 L467.5,696.8 L468.0,696.7 L468.5,696.6 L469.0,696.6 L469.5,696.6 L470.0,696.6 L470.5,696.7 L471.0,696.8 L471.5,696.9 L472.0,697.0 L472.5,697.1 L473.0,697.2 L473.5,697.3 L474.0,697.3 L474.5,697.3 L475.0,697.3 L475.5,697.2 L476.0,697.1 L476.5,697.0 L477.0,697.0 L477.5,696.9 L478.0,697.0 L478.5,697.0 L479.0,697.1 L479.5,697.2 L480.0,697.3 L480.5,697.3 L481.0,697.4 L481.5,697.3 L482.0,697.3 L482.5,697.2 L483.0,697.1 L483.5,697.0 L484.0,696.9 L484.5,696.9 L485.0,696.9 L485.5,696.9 L486.0,697.0 L486.5,697.0 L487.0,697.1 L487.5,697.1 L488.0,697.1 L488.5,697.0 L489.0,696.9 L489.5,696.8 L490.0,696.3 L490.5,693.0 L491.0,683.5 L491.5,671.0 L492.0,662.3 L492.5,659.0 L493.0,658.5 L493.5,658.6 L494.0,659.1 L494.5,661.8 L495.0,669.4 L495.5,681.7 L496.0,692.3 L496.5,696.5 L497.0,697.1 L497.5,697.0 L498.0,696.8 L498.5,696.7 L499.0,696.6 L499.5,696.6 L500.0,696.6 L500.5,696.7 L501.0,696.8 L501.5,697.0 L502.0,697.1 L502.5,697.2 L503.0,697.3 L503.5,697.3 L504.0,697.2 L504.5,697.2 L505.0,697.1 L505.5,697.0 L506.0,697.0 L506.5,697.0 L507.0,697.1 L507.5,697.2 L508.0,697.2 L508.5,697.3 L509.0,697.2 L509.5,697.1 L510.0,697.0 L510.5,696.8 L511.0,696.7 L511.5,696.5 L512.0,696.4 L512.5,696.3 L513.0,696.4 L513.5,696.5 L514.0,696.6 L514.5,696.8 L515.0,696.9 L515.5,697.1 L516.0,697.1 L516.5,697.1 L517.0,697.0 L517.5,696.8 L518.0,696.5 L518.5,696.1 L519.0,695.7 L519.5,695.4 L520.0,695.1 L520.5,694.8 L521.0,694.4 L521.5,694.0 L522.0,693.5 L522.5,692.9 L523.0,692.2 L523.5,691.5 L524.0,690.9 L524.5,690.5 L525.0,690.3 L525.5,690.4 L526.0,690.7 L526.5,691.3 L527.0,692.0 L527.5,692.8 L528.0,693.7 L528.5,694.4 L529.0,695.1 L529.5,695.7 L530.0,696.1 L530.5,696.4 L531.0,696.6 L531.5,696.7 L532.0,696.7 L532.5,696.7 L533.0,696.7 L533.5,696.6 L534.0,696.6 L534.5,696.7 L535.0,696.8 L535.5,696.9 L536.0,697.0 L536.5,697.1 L537.0,697.2 L537.5,697.2 L538.0,697.2 L538.5,697.2 L539.0,697.1 L539.5,697.0 L540.0,696.9 L540.5,696.8 L541.0,696.7 L541.5,696.7 L542.0,696.7 L542.5,696.7 L543.0,696.8 L543.5,696.9 L544.0,697.0 L544.5,697.1 L545.0,697.1 L545.5,697.0 L546.0,696.9 L546.5,696.8 L547.0,696.6 L547.5,696.5 L548.0,696.3 L548.5,696.2 L549.0,696.2 L549.5,696.2 L550.0,696.2 L550.5,696.3 L551.0,696.5 L551.5,696.7 L552.0,696.8 L552.5,697.0 L553.0,697.1 L553.5,697.2 L554.0,697.3 L554.5,697.3 L555.0,697.2 L555.5,697.1 L556.0,696.9 L556.5,696.6 L557.0,696.3 L557.5,696.0 L558.0,695.7 L558.5,695.6 L559.0,695.5 L559.5,695.6 L560.0,695.8 L560.5,696.1 L561.0,696.4 L561.5,696.7 L562.0,697.0 L562.5,697.2 L563.0,697.3 L563.5,697.4 L564.0,697.4 L564.5,697.3 L565.0,697.3 L565.5,697.2 L566.0,697.0 L566.5,696.9 L567.0,696.8 L567.5,696.6 L568.0,696.6 L568.5,696.5 L569.0,696.6 L569.5,696.6 L570.0,696.7 L570.5,696.9 L571.0,697.0 L571.5,697.1 L572.0,697.2 L572.5,697.3 L573.0,697.3 L573.5,697.2 L574.0,696.9 L574.5,696.6 L575.0,696.1 L575.5,695.6 L576.0,695.1 L576.5,694.7 L577.0,694.5 L577.5,694.6 L578.0,695.0 L578.5,695.4 L579.0,695.8 L579.5,696.1 L580.0,696.2 L580.5,696.1 L581.0,695.9 L581.5,695.6 L582.0,695.2 L582.5,694.9 L583.0,694.7 L583.5,694.5 L584.0,694.6 L584.5,694.7 L585.0,695.0 L585.5,695.3 L586.0,695.7 L586.5,696.1 L587.0,696.4 L587.5,696.6 L588.0,696.6 L588.5,696.6 L589.0,696.4 L589.5,696.2 L590.0,696.1 L590.5,696.0 L591.0,696.0 L591.5,696.0 L592.0,696.1 L592.5,696.1 L593.0,696.1 L593.5,695.9 L594.0,695.8 L594.5,695.6 L595.0,695.5 L595.5,695.6 L596.0,695.8 L596.5,696.0 L597.0,696.4 L597.5,696.7 L598.0,696.9 L598.5,697.1 L599.0,697.2 L599.5,697.1 L600.0,697.0 L600.5,696.7 L601.0,696.3 L601.5,696.0 L602.0,695.7 L602.5,695.7 L603.0,695.8 L603.5,696.1 L604.0,696.5 L604.5,696.8 L605.0,697.1 L605.5,697.3 L606.0,697.4 L606.5,697.4 L607.0,697.5 L607.5,697.4 L608.0,697.4 L608.5,697.3 L609.0,697.2 L609.5,697.0 L610.0,696.9 L610.5,696.7 L611.0,696.7 L611.5,696.6 L612.0,696.7 L612.5,696.8 L613.0,696.9 L613.5,697.0 L614.0,697.0 L614.5,697.0 L615.0,696.9 L615.5,696.8 L616.0,696.7 L616.5,696.6 L617.0,696.5 L617.5,696.5 L618.0,696.6 L618.5,696.7 L619.0,696.7 L619.5,696.8 L620.0,696.8 L620.5,696.7 L621.0,696.7 L621.5,696.6 L622.0,696.5 L622.5,696.5 L623.0,696.5 L623.5,696.5 L624.0,696.5 L624.5,696.5 L625.0,696.6 L625.5,696.6 L626.0,696.6 L626.5,696.6 L627.0,696.6 L627.5,696.7 L628.0,696.7 L628.5,696.8 L629.0,696.9 L629.5,697.0 L630.0,697.1 L630.5,697.2 L631.0,697.2 L631.5,697.2 L632.0,697.1 L632.5,697.0 L633.0,696.8 L633.5,696.5 L634.0,696.3 L634.5,696.0 L635.0,695.7 L635.5,695.5 L636.0,695.3 L636.5,695.3 L637.0,695.3 L637.5,695.3 L638.0,695.3 L638.5,695.2 L639.0,695.1 L639.5,694.9 L640.0,694.4 L640.5,692.3 L641.0,686.0 L641.5,672.5 L642.0,653.1 L642.5,632.6 L643.0,616.3 L643.5,606.3 L644.0,601.7 L644.5,600.3 L645.0,600.2 L645.5,600.3 L646.0,600.5 L646.5,601.7 L647.0,605.7 L647.5,614.6 L648.0,629.6 L648.5,649.0 L649.0,668.1 L649.5,681.4 L650.0,687.1 L650.5,687.8 L651.0,687.1 L651.5,686.8 L652.0,687.4 L652.5,688.9 L653.0,690.8 L653.5,692.5 L654.0,693.8 L654.5,694.5 L655.0,694.5 L655.5,693.8 L656.0,692.5 L656.5,690.4 L657.0,687.8 L657.5,684.9 L658.0,682.2 L658.5,680.0 L659.0,678.9 L659.5,679.0 L660.0,680.3 L660.5,682.5 L661.0,685.1 L661.5,687.7 L662.0,689.7 L662.5,690.9 L663.0,691.1 L663.5,690.4 L664.0,689.1 L664.5,687.6 L665.0,686.4 L665.5,685.9 L666.0,686.2 L666.5,687.2 L667.0,688.8 L667.5,690.6 L668.0,692.2 L668.5,693.4 L669.0,694.3 L669.5,694.7 L670.0,694.9 L670.5,694.9 L671.0,694.8 L671.5,694.7 L672.0,694.7 L672.5,694.6 L673.0,694.7 L673.5,694.8 L674.0,695.1 L674.5,695.4 L675.0,695.8 L675.5,696.2 L676.0,696.6 L676.5,696.9 L677.0,697.0 L677.5,697.0 L678.0,696.9 L678.5,696.5 L679.0,695.9 L679.5,695.2 L680.0,694.2 L680.5,693.1 L681.0,692.0 L681.5,690.9 L682.0,689.9 L682.5,689.0 L683.0,688.5 L683.5,688.1 L684.0,688.1 L684.5,688.3 L685.0,688.7 L685.5,689.3 L686.0,689.9 L686.5,690.7 L687.0,691.4 L687.5,692.1 L688.0,692.8 L688.5,693.5 L689.0,694.1 L689.5,694.7 L690.0,695.2 L690.5,695.6 L691.0,696.0 L691.5,696.2 L692.0,696.3 L692.5,696.3 L693.0,696.1 L693.5,695.7 L694.0,695.3 L694.5,694.7 L695.0,694.2 L695.5,693.7 L696.0,693.4 L696.5,693.2 L697.0,693.2 L697.5,693.4 L698.0,693.8 L698.5,694.2 L699.0,694.5 L699.5,694.9 L700.0,695.2 L700.5,695.4 L701.0,695.7 L701.5,695.8 L702.0,695.9 L702.5,696.0 L703.0,695.9 L703.5,695.7 L704.0,695.4 L704.5,695.0 L705.0,694.5 L705.5,694.0 L706.0,693.4 L706.5,692.8 L707.0,692.2 L707.5,691.5 L708.0,690.8 L708.5,690.1 L709.0,689.5 L709.5,688.8 L710.0,688.3 L710.5,687.9 L711.0,687.8 L711.5,688.0 L712.0,688.5 L712.5,689.3 L713.0,690.2 L713.5,691.2 L714.0,692.1 L714.5,692.9 L715.0,693.5 L715.5,693.9 L716.0,694.2 L716.5,694.3 L717.0,694.3 L717.5,694.3 L718.0,694.3 L718.5,694.4 L719.0,694.5 L719.5,694.6 L720.0,694.7 L720.5,694.8 L721.0,694.9 L721.5,694.9 L722.0,694.9 L722.5,694.9 L723.0,694.9 L723.5,694.8 L724.0,694.8 L724.5,694.7 L725.0,694.7 L725.5,694.7 L726.0,694.8 L726.5,695.1 L727.0,695.4 L727.5,695.8 L728.0,696.2 L728.5,696.6 L729.0,696.9 L729.5,697.0 L730.0,697.0 L730.5,696.7 L731.0,696.3 L731.5,695.7 L732.0,695.0 L732.5,694.3 L733.0,693.6 L733.5,693.0 L734.0,692.4 L734.5,691.8 L735.0,691.1 L735.5,690.4 L736.0,689.6 L736.5,688.9 L737.0,688.3 L737.5,687.9 L738.0,687.9 L738.5,688.2 L739.0,688.8 L739.5,689.7 L740.0,690.6 L740.5,691.6 L741.0,692.5 L741.5,693.0 L742.0,693.2 L742.5,693.1 L743.0,692.6 L743.5,692.0 L744.0,691.4 L744.5,690.9 L745.0,690.6 L745.5,690.7 L746.0,691.0 L746.5,691.5 L747.0,692.1 L747.5,692.7 L748.0,693.1 L748.5,693.4 L749.0,693.6 L749.5,693.6 L750.0,693.6 L750.5,693.5 L751.0,693.5 L751.5,693.6 L752.0,693.8 L752.5,694.1 L753.0,694.5 L753.5,695.0 L754.0,695.5 L754.5,696.0 L755.0,696.4 L755.5,696.7 L756.0,696.9 L756.5,697.0 L757.0,696.9 L757.5,696.7 L758.0,696.5 L758.5,696.1 L759.0,695.8 L759.5,695.4 L760.0,695.0 L760.5,694.7 L761.0,694.5 L761.5,694.4 L762.0,694.4 L762.5,694.6 L763.0,694.7 L763.5,695.0 L764.0,695.2 L764.5,695.5 L765.0,695.7 L765.5,695.8 L766.0,695.8 L766.5,695.8 L767.0,695.6 L767.5,695.4 L768.0,695.1 L768.5,694.9 L769.0,694.7 L769.5,694.6 L770.0,694.6 L770.5,694.6 L771.0,694.6 L771.5,694.6 L772.0,694.5 L772.5,694.2 L773.0,694.0 L773.5,693.7 L774.0,693.5 L774.5,693.4 L775.0,693.5 L775.5,693.7 L776.0,694.0 L776.5,694.4 L777.0,694.8 L777.5,695.2 L778.0,695.6 L778.5,695.8 L779.0,696.0 L779.5,696.1 L780.0,696.0 L780.5,696.0 L781.0,695.9 L781.5,695.7 L782.0,695.6 L782.5,695.4 L783.0,695.4 L783.5,695.3 L784.0,695.4 L784.5,695.5 L785.0,695.6 L785.5,695.6 L786.0,695.6 L786.5,695.5 L787.0,695.0 L787.5,694.1 L788.0,692.3 L788.5,689.6 L789.0,685.9 L789.5,681.8 L790.0,678.1 L790.5,675.7 L791.0,675.5 L791.5,677.5 L792.0,679.9 L792.5,678.0 L793.0,662.9 L793.5,628.6 L794.0,579.9 L794.5,530.4 L795.0,492.2 L795.5,469.3 L796.0,459.0 L796.5,455.9 L797.0,455.6 L797.5,455.8 L798.0,456.7 L798.5,460.9 L799.0,473.2 L799.5,498.6 L800.0,538.8 L800.5,587.9 L801.0,632.7 L801.5,660.9 L802.0,670.7 L802.5,670.0 L803.0,667.4 L803.5,667.2 L804.0,670.0 L804.5,675.2 L805.0,681.3 L805.5,686.9 L806.0,691.3 L806.5,694.1 L807.0,695.7 L807.5,696.3 L808.0,696.3 L808.5,696.0 L809.0,695.6 L809.5,695.2 L810.0,694.8 L810.5,694.4 L811.0,693.9 L811.5,693.1 L812.0,691.5 L812.5,688.9 L813.0,685.1 L813.5,679.9 L814.0,673.5 L814.5,666.1 L815.0,658.3 L815.5,650.7 L816.0,644.1 L816.5,639.3 L817.0,637.0 L817.5,637.4 L818.0,640.6 L818.5,646.1 L819.0,653.1 L819.5,660.9 L820.0,668.6 L820.5,675.7 L821.0,681.6 L821.5,686.2 L822.0,689.6 L822.5,691.9 L823.0,693.4 L823.5,694.3 L824.0,695.0 L824.5,695.5 L825.0,695.9 L825.5,696.3 L826.0,696.6 L826.5,696.9 L827.0,697.0 L827.5,697.1 L828.0,697.0 L828.5,696.8 L829.0,696.6 L829.5,696.3 L830.0,696.0 L830.5,695.7 L831.0,695.5 L831.5,695.4 L832.0,695.4 L832.5,695.5 L833.0,695.7 L833.5,695.9 L834.0,696.1 L834.5,696.1 L835.0,696.0 L835.5,695.8 L836.0,695.5 L836.5,695.2 L837.0,694.9 L837.5,694.7 L838.0,694.5 L838.5,694.3 L839.0,693.8 L839.5,692.7 L840.0,691.0 L840.5,688.5 L841.0,685.1 L841.5,681.1 L842.0,676.5 L842.5,671.9 L843.0,667.7 L843.5,664.6 L844.0,662.8 L844.5,662.6 L845.0,663.9 L845.5,666.6 L846.0,670.0 L846.5,673.7 L847.0,677.0 L847.5,679.7 L848.0,681.4 L848.5,682.5 L849.0,683.0 L849.5,683.5 L850.0,684.3 L850.5,685.5 L851.0,687.2 L851.5,689.2 L852.0,691.1 L852.5,692.9 L853.0,694.3 L853.5,695.3 L854.0,695.9 L854.5,696.2 L855.0,696.4 L855.5,696.4 L856.0,696.4 L856.5,696.4 L857.0,696.4 L857.5,696.5 L858.0,696.6 L858.5,696.8 L859.0,696.9 L859.5,697.0 L860.0,697.2 L860.5,697.3 L861.0,697.3 L861.5,697.4 L862.0,697.4 L862.5,697.5 L863.0,697.5 L863.5,697.5 L864.0,697.5 L864.5,697.5 L865.0,697.5 L865.5,697.5 L866.0,697.5 L866.5,697.5 L867.0,697.5 L867.5,697.5 L868.0,697.5 L868.5,697.5 L869.0,697.5 L869.5,697.5 L870.0,697.5 L870.5,697.5 L871.0,697.5 L871.5,697.5 L872.0,697.5 L872.5,697.5 L873.0,697.5 L873.5,697.5 L874.0,697.5 L874.5,697.5 L875.0,697.5 L875.5,697.5 L876.0,697.5 L876.5,697.5 L877.0,697.5 L877.5,697.5 L878.0,697.5 L878.5,697.5 L879.0,697.5 L879.5,697.5 L880.0,697.5 L880.5,697.5 L881.0,697.5 L881.5,697.5 L882.0,697.5 L882.5,697.5 L883.0,697.5 L883.5,697.5 L884.0,697.5 L884.5,697.5 L885.0,697.5 L885.5,697.5 L886.0,697.5 L886.5,697.5 L887.0,697.5 L887.5,697.5 L888.0,697.5 L888.5,697.5 L889.0,697.5 L889.5,697.5 L890.0,697.5 L890.5,697.5 L891.0,697.5 L891.5,697.5 L892.0,697.5 L892.5,697.5 L893.0,697.5 L893.5,697.5 L894.0,697.5 L894.5,697.5 L895.0,697.5 L895.5,697.5 L896.0,697.5 L896.5,697.5 L897.0,697.5 L897.5,697.5 L898.0,697.5 L898.5,697.5 L899.0,697.5 L899.5,697.5 L900.0,697.5 L900.5,697.5 L901.0,697.5 L901.5,697.5 L902.0,697.5 L902.5,697.5 L903.0,697.5 L903.5,697.5 L904.0,697.5 L904.5,697.5 L905.0,697.5 L905.5,697.5 L906.0,697.5 L906.5,697.5 L907.0,697.5 L907.5,697.5 L908.0,697.5 L908.5,697.5 L909.0,697.5 L909.5,697.5 L910.0,697.5 L910.5,697.5 L911.0,697.5 L911.5,697.5 L912.0,697.5 L912.5,697.5 L913.0,697.5 L913.5,697.5 L914.0,697.5 L914.5,697.5 L915.0,697.5 L915.5,697.5 L916.0,697.5 L916.5,697.5 L917.0,697.5 L917.5,697.5 L918.0,697.5 L918.5,697.5 L919.0,697.5 L919.5,697.5 L920.0,697.5 L920.5,697.5 L921.0,697.5 L921.5,697.5 L922.0,697.5 L922.5,697.5 L923.0,697.5 L923.5,697.5 L924.0,697.5 L924.5,697.5 L925.0,697.5 L925.5,697.5 L926.0,697.5 L926.5,697.5 L927.0,697.5 L927.5,697.5 L928.0,697.5 L928.5,697.5 L929.0,697.5 L929.5,697.5 L930.0,697.5 L930.5,697.5 L931.0,697.5 L931.5,697.5 L932.0,697.5 L932.5,697.5 L933.0,697.5 L933.5,697.5 L934.0,697.5 L934.5,697.5 L935.0,697.5 L935.5,697.5 L936.0,697.5 L936.5,697.5 L937.0,697.5 L937.5,697.5 L938.0,697.5 L938.5,697.5 L939.0,697.5 L939.5,697.5 L940.0,697.5 L940.5,697.5 L941.0,697.5 L941.5,697.5 L942.0,697.5 L942.5,697.5 L943.0,697.5 L943.5,697.5 L944.0,697.5 L944.5,697.5 L945.0,697.5 L945.5,697.5 L946.0,697.5 L946.5,697.5 L947.0,697.5 L947.5,697.5 L948.0,697.5 L948.5,697.5 L949.0,697.5 L949.5,697.5 L950.0,697.5 L950.5,697.5 L951.0,697.5 L951.5,697.5 L952.0,697.5 L952.5,697.5 L953.0,697.5 L953.5,697.5 L954.0,697.5 L954.5,697.5 L955.0,697.5 L955.5,697.5 L956.0,697.5 L956.5,697.5 L957.0,697.5 L957.5,697.5 L958.0,697.5 L958.5,697.5 L959.0,697.5 L959.5,697.5 L960.0,697.5 L960.5,697.5 L961.0,697.5 L961.5,697.5 L962.0,697.5 L962.5,697.5 L963.0,697.5 L963.5,697.5 L964.0,697.5 L964.5,697.5 L965.0,697.5 L965.5,697.5 L966.0,697.5 L966.5,697.5 L967.0,697.5 L967.5,697.5 L968.0,697.5 L968.5,697.5 L969.0,697.5 L969.5,697.5 L970.0,697.5 L970.5,697.5 L971.0,697.5 L971.5,697.5 L972.0,697.5 L972.5,697.5 L973.0,697.5 L973.5,697.5 L974.0,697.5 L974.5,697.5 L975.0,697.5 L975.5,697.5 L976.0,697.5 L976.5,697.5 L977.0,697.5 L977.5,697.5 L978.0,697.5 L978.5,697.5 L979.0,697.5 L979.5,697.5 L980.0,697.5 L980.5,697.5 L981.0,697.5 L981.5,697.5 L982.0,697.5 L982.5,697.5 L983.0,697.5 L983.5,697.5 L984.0,697.5 L984.5,697.5 L985.0,697.5 L985.5,697.5 L986.0,697.5 L986.5,697.5 L987.0,697.5 L987.5,697.5 L988.0,697.5 L988.5,697.5 L989.0,697.5 L989.5,697.5 L990.0,697.5 L990.5,697.5 L991.0,697.5 L991.5,697.5 L992.0,697.5 L992.5,697.5 L993.0,697.5 L993.5,697.5 L994.0,697.5 L994.5,697.5 L995.0,697.5 L995.5,697.5 L996.0,697.5 L996.5,697.5 L997.0,697.5 L997.5,697.5 L998.0,697.5 L998.5,697.5 L999.0,697.5 L999.5,697.5 L1000.0,697.5 L1000.5,697.5 L1001.0,697.5 L1001.5,697.5 L1002.0,697.5 L1002.5,697.5 L1003.0,697.5 L1003.5,697.5 L1004.0,697.5 L1004.5,697.5 L1005.0,697.5 L1005.5,697.5 L1006.0,697.5 L1006.5,697.4 L1007.0,697.4 L1007.5,697.4 L1008.0,697.3 L1008.5,697.2 L1009.0,697.1 L1009.5,697.0 L1010.0,696.9 L1010.5,696.8 L1011.0,696.7 L1011.5,696.7 L1012.0,696.6 L1012.5,696.7 L1013.0,696.7 L1013.5,696.8 L1014.0,696.8 L1014.5,696.8 L1015.0,696.8 L1015.5,696.8 L1016.0,696.7 L1016.5,696.6 L1017.0,696.5 L1017.5,696.5 L1018.0,696.6 L1018.5,696.7 L1019.0,696.9 L1019.5,697.1 L1020.0,697.2 L1020.5,697.3 L1021.0,697.3 L1021.5,697.3 L1022.0,697.2 L1022.5,697.0 L1023.0,696.8 L1023.5,696.7 L1024.0,696.6 L1024.5,696.5 L1025.0,696.6 L1025.5,696.8 L1026.0,697.0 L1026.5,697.2 L1027.0,697.3 L1027.5,697.4 L1028.0,697.4 L1028.5,697.5 L1029.0,697.4 L1029.5,697.4 L1030.0,697.3 L1030.5,697.2 L1031.0,697.1 L1031.5,696.9 L1032.0,696.8 L1032.5,696.7 L1033.0,696.7 L1033.5,696.8 L1034.0,696.9 L1034.5,697.0 L1035.0,697.1 L1035.5,697.2 L1036.0,697.2 L1036.5,697.3 L1037.0,697.3 L1037.5,697.3 L1038.0,697.3 L1038.5,697.3 L1039.0,697.3 L1039.5,697.3 L1040.0,697.3 L1040.5,697.2 L1041.0,697.1 L1041.5,697.1 L1042.0,697.0 L1042.5,697.0 L1043.0,697.0 L1043.5,697.1 L1044.0,697.2 L1044.5,697.3 L1045.0,697.3 L1045.5,697.4 L1046.0,697.4 L1046.5,697.4 L1047.0,697.4 L1047.5,697.4 L1048.0,697.3 L1048.5,697.1 L1049.0,696.9 L1049.5,696.8 L1050.0,696.7 L1050.5,696.6 L1051.0,696.7 L1051.5,696.8 L1052.0,697.0 L1052.5,697.2 L1053.0,697.3 L1053.5,697.4 L1054.0,697.4 L1054.5,697.5 L1055.0,697.5 L1055.5,697.4 L1056.0,697.4 L1056.5,697.3 L1057.0,697.3 L1057.5,697.2 L1058.0,697.1 L1058.5,697.1 L1059.0,697.1 L1059.5,697.1 L1060.0,697.1 L1060.5,697.2 L1061.0,697.3 L1061.5,697.3 L1062.0,697.4 L1062.5,697.4 L1063.0,697.4 L1063.5,697.3 L1064.0,697.2 L1064.5,697.2 L1065.0,697.1 L1065.5,697.0 L1066.0,697.0 L1066.5,697.0 L1067.0,697.0 L1067.5,697.0 L1068.0,697.0 L1068.5,697.0 L1069.0,697.0 L1069.5,696.9 L1070.0,696.7 L1070.5,696.7 L1071.0,696.6 L1071.5,696.7 L1072.0,696.7 L1072.5,696.9 L1073.0,697.0 L1073.5,697.1 L1074.0,697.2 L1074.5,697.1 L1075.0,697.0 L1075.5,696.6 L1076.0,696.0 L1076.5,695.1 L1077.0,693.9 L1077.5,692.5 L1078.0,690.8 L1078.5,689.2 L1079.0,687.8 L1079.5,686.8 L1080.0,686.5 L1080.5,686.8 L1081.0,687.8 L1081.5,689.1 L1082.0,690.6 L1082.5,692.0 L1083.0,693.0 L1083.5,693.4 L1084.0,693.1 L1084.5,692.4 L1085.0,691.4 L1085.5,690.6 L1086.0,690.4 L1086.5,690.7 L1087.0,691.7 L1087.5,692.8 L1088.0,693.7 L1088.5,694.0 L1089.0,693.7 L1089.5,692.8 L1090.0,691.7 L1090.5,690.8 L1091.0,690.5 L1091.5,690.9 L1092.0,691.9 L1092.5,693.1 L1093.0,694.1 L1093.5,693.9 L1094.0,690.4 L1094.5,679.5 L1095.0,654.0 L1095.5,605.4 L1096.0,528.8 L1096.5,430.6 L1097.0,333.4 L1097.5,269.1 L1098.0,259.7 L1098.5,281.1 L1099.0,315.2 L1099.5,352.4 L1100.0,388.7 L1100.5,422.4 L1101.0,453.1 L1101.5,480.8 L1102.0,505.5 L1102.5,527.5 L1103.0,547.0 L1103.5,564.2 L1104.0,579.3 L1104.5,592.2 L1105.0,602.9 L1105.5,611.7 L1106.0,618.5 L1106.5,623.8 L1107.0,628.1 L1107.5,632.4 L1108.0,637.1 L1108.5,642.6 L1109.0,648.9 L1109.5,655.5 L1110.0,661.9 L1110.5,667.7 L1111.0,672.6 L1111.5,676.6 L1112.0,679.9 L1112.5,682.3 L1113.0,684.2 L1113.5,685.7 L1114.0,686.9 L1114.5,687.7 L1115.0,688.3 L1115.5,688.8 L1116.0,689.1 L1116.5,689.2 L1117.0,689.4 L1117.5,689.6 L1118.0,689.8 L1118.5,690.2 L1119.0,690.8 L1119.5,691.4 L1120.0,692.2 L1120.5,693.1 L1121.0,693.9 L1121.5,694.6 L1122.0,695.2 L1122.5,695.5 L1123.0,695.7 L1123.5,695.5 L1124.0,695.2 L1124.5,694.8 L1125.0,694.4 L1125.5,694.3 L1126.0,694.3 L1126.5,694.5 L1127.0,694.8 L1127.5,695.0 L1128.0,695.1 L1128.5,695.1 L1129.0,695.0 L1129.5,694.8 L1130.0,694.6 L1130.5,694.3 L1131.0,694.0 L1131.5,693.6 L1132.0,693.3 L1132.5,693.0 L1133.0,693.0 L1133.5,693.1 L1134.0,693.4 L1134.5,693.9 L1135.0,694.4 L1135.5,694.9 L1136.0,695.3 L1136.5,695.5 L1137.0,695.6 L1137.5,695.6 L1138.0,695.6 L1138.5,695.7 L1139.0,695.9 L1139.5,696.1 L1140.0,696.3 L1140.5,696.5 L1141.0,696.6 L1141.5,696.6 L1142.0,696.4 L1142.5,696.2 L1143.0,696.0 L1143.5,695.6 L1144.0,695.1 L1144.5,694.6 L1145.0,693.9 L1145.5,693.2 L1146.0,692.4 L1146.5,691.5 L1147.0,690.7 L1147.5,689.9 L1148.0,689.5 L1148.5,689.3 L1149.0,689.5 L1149.5,690.0 L1150.0,690.8 L1150.5,691.8 L1151.0,692.8 L1151.5,693.7 L1152.0,694.5 L1152.5,695.1 L1153.0,695.6 L1153.5,695.9 L1154.0,696.2 L1154.5,696.5 L1155.0,696.7 L1155.5,696.8 L1156.0,696.8 L1156.5,696.7 L1157.0,696.4 L1157.5,696.1 L1158.0,695.8 L1158.5,695.4 L1159.0,695.0 L1159.5,694.6 L1160.0,694.3 L1160.5,694.1 L1161.0,694.0 L1161.5,694.0 L1162.0,694.0 L1162.5,694.0 L1163.0,694.1 L1163.5,694.1 L1164.0,694.2 L1164.5,694.3 L1165.0,694.4 L1165.5,694.6 L1166.0,695.0 L1166.5,695.4 L1167.0,695.8 L1167.5,696.1 L1168.0,696.4 L1168.5,696.4 L1169.0,696.4 L1169.5,696.1 L1170.0,695.7 L1170.5,695.2 L1171.0,694.6 L1171.5,693.8 L1172.0,693.0 L1172.5,692.2 L1173.0,691.4 L1173.5,690.9 L1174.0,690.5 L1174.5,690.3 L1175.0,690.4 L1175.5,690.6 L1176.0,690.9 L1176.5,691.3 L1177.0,691.7 L1177.5,692.1 L1178.0,692.4 L1178.5,692.8 L1179.0,693.2 L1179.5,693.5 L1180.0,693.8 L1180.5,694.1 L1181.0,694.4 L1181.5,694.7 L1182.0,695.0 L1182.5,695.3 L1183.0,695.6 L1183.5,696.0 L1184.0,696.3 L1184.5,696.6 L1185.0,696.8 L1185.5,696.9 L1186.0,696.9 L1186.5,696.7 L1187.0,696.3 L1187.5,695.8 L1188.0,695.1 L1188.5,694.4 L1189.0,693.9 L1189.5,693.5 L1190.0,693.3 L1190.5,693.4 L1191.0,693.5 L1191.5,693.7 L1192.0,693.8 L1192.5,694.0 L1193.0,694.2 L1193.5,694.2 L1194.0,694.3 L1194.5,694.3 L1195.0,694.4 L1195.5,694.6 L1196.0,694.8 L1196.5,695.0 L1197.0,695.3 L1197.5,695.6 L1198.0,695.8 L1198.5,696.0 L1199.0,696.1 L1199.5,696.2 L1200.0,696.1 L1200.5,696.0 L1201.0,695.7 L1201.5,695.3 L1202.0,694.7 L1202.5,693.8 L1203.0,692.8 L1203.5,691.4 L1204.0,689.8 L1204.5,688.0 L1205.0,686.0 L1205.5,683.9 L1206.0,681.7 L1206.5,679.7 L1207.0,678.0 L1207.5,676.6 L1208.0,675.6 L1208.5,675.2 L1209.0,675.3 L1209.5,676.0 L1210.0,677.1 L1210.5,678.6 L1211.0,680.4 L1211.5,682.4 L1212.0,684.3 L1212.5,686.2 L1213.0,687.9 L1213.5,689.3 L1214.0,690.5 L1214.5,691.4 L1215.0,692.3 L1215.5,693.0 L1216.0,693.8 L1216.5,694.5 L1217.0,695.2 L1217.5,695.8 L1218.0,696.2 L1218.5,696.5 L1219.0,696.6 L1219.5,696.5 L1220.0,696.4 L1220.5,696.3 L1221.0,696.1 L1221.5,696.0 L1222.0,695.9 L1222.5,695.9 L1223.0,695.9 L1223.5,696.0 L1224.0,696.2 L1224.5,696.4 L1225.0,696.5 L1225.5,696.7 L1226.0,696.7 L1226.5,696.6 L1227.0,696.5 L1227.5,696.1 L1228.0,695.6 L1228.5,695.0 L1229.0,694.1 L1229.5,693.0 L1230.0,691.7 L1230.5,690.1 L1231.0,688.2 L1231.5,686.0 L1232.0,683.4 L1232.5,680.5 L1233.0,677.2 L1233.5,673.7 L1234.0,670.2 L1234.5,666.7 L1235.0,663.6 L1235.5,660.9 L1236.0,659.0 L1236.5,657.9 L1237.0,657.6 L1237.5,658.2 L1238.0,659.5 L1238.5,661.6 L1239.0,664.1 L1239.5,667.1 L1240.0,670.3 L1240.5,673.6 L1241.0,676.9 L1241.5,680.1 L1242.0,683.1 L1242.5,685.8 L1243.0,688.3 L1243.5,690.4 L1244.0,692.1 L1244.5,693.5 L1245.0,694.4 L1245.5,694.4 L1246.0,690.9 L1246.5,677.9 L1247.0,650.0 L1247.5,609.3 L1248.0,566.3 L1248.5,531.7 L1249.0,510.3 L1249.5,500.1 L1250.0,496.8 L1250.5,496.4 L1251.0,496.4 L1251.5,496.8 L1252.0,499.3 L1252.5,507.8 L1253.0,526.6 L1253.5,558.4 L1254.0,599.6 L1254.5,640.3 L1255.0,668.9 L1255.5,681.3 L1256.0,682.1 L1256.5,678.3 L1257.0,673.8 L1257.5,670.6 L1258.0,669.3 L1258.5,670.4 L1259.0,673.5 L1259.5,677.8 L1260.0,682.5 L1260.5,686.8 L1261.0,690.0 L1261.5,692.2 L1262.0,693.3 L1262.5,693.3 L1263.0,692.4 L1263.5,690.8 L1264.0,688.6 L1264.5,686.4 L1265.0,684.5 L1265.5,683.5 L1266.0,683.6 L1266.5,684.8 L1267.0,686.7 L1267.5,689.0 L1268.0,691.1 L1268.5,693.0 L1269.0,694.4 L1269.5,695.4 L1270.0,696.1 L1270.5,696.6 L1271.0,696.9 L1271.5,697.1 L1272.0,697.1 L1272.5,697.1 L1273.0,697.0 L1273.5,696.9 L1274.0,696.8 L1274.5,696.7 L1275.0,696.6 L1275.5,696.6 L1276.0,696.6 L1276.5,696.6 L1277.0,696.6 L1277.5,696.6 L1278.0,696.5 L1278.5,696.5 L1279.0,696.4 L1279.5,696.4 L1280.0,696.4 L1280.5,696.5 L1281.0,696.6 L1281.5,696.7 L1282.0,696.9 L1282.5,697.1 L1283.0,697.2 L1283.5,697.2 L1284.0,697.2 L1284.5,697.2 L1285.0,697.0 L1285.5,696.8 L1286.0,696.6 L1286.5,696.3 L1287.0,696.0 L1287.5,695.9 L1288.0,695.8 L1288.5,695.8 L1289.0,695.9 L1289.5,696.1 L1290.0,696.3 L1290.5,696.5 L1291.0,696.6 L1291.5,696.6 L1292.0,696.4 L1292.5,696.2 L1293.0,695.9 L1293.5,695.7 L1294.0,695.6 L1294.5,695.6 L1295.0,695.8 L1295.5,696.1 L1296.0,696.3 L1296.5,696.5 L1297.0,696.5 L1297.5,696.3 L1298.0,696.1 L1298.5,695.8 L1299.0,695.6 L1299.5,695.4 L1300.0,695.3 L1300.5,695.4 L1301.0,695.6 L1301.5,695.8 L1302.0,696.1 L1302.5,696.2 L1303.0,696.3 L1303.5,696.3 L1304.0,696.3 L1304.5,696.2 L1305.0,696.0 L1305.5,695.9 L1306.0,695.9 L1306.5,695.9 L1307.0,695.9 L1307.5,696.0 L1308.0,696.2 L1308.5,696.2 L1309.0,696.2 L1309.5,696.1 L1310.0,695.9 L1310.5,695.6 L1311.0,695.3 L1311.5,695.2 L1312.0,695.2 L1312.5,695.4 L1313.0,695.8 L1313.5,696.1 L1314.0,696.3 L1314.5,696.4 L1315.0,696.4 L1315.5,696.3 L1316.0,696.1 L1316.5,695.8 L1317.0,695.7 L1317.5,695.5 L1318.0,695.5 L1318.5,695.5 L1319.0,695.7 L1319.5,695.9 L1320.0,696.1 L1320.5,696.4 L1321.0,696.7 L1321.5,696.9 L1322.0,697.1 L1322.5,697.2 L1323.0,697.2 L1323.5,697.3 L1324.0,697.2 L1324.5,697.1 L1325.0,696.9 L1325.5,696.7 L1326.0,696.5 L1326.5,696.4 L1327.0,696.4 L1327.5,696.4 L1328.0,696.5 L1328.5,696.5 L1329.0,696.5 L1329.5,696.3 L1330.0,696.2 L1330.5,696.0 L1331.0,695.9 L1331.5,695.9 L1332.0,696.0 L1332.5,696.2 L1333.0,696.4 L1333.5,696.6 L1334.0,696.8 L1334.5,696.9 L1335.0,696.9 L1335.5,696.8 L1336.0,696.6 L1336.5,696.3 L1337.0,695.9 L1337.5,695.3 L1338.0,694.7 L1338.5,693.8 L1339.0,692.8 L1339.5,691.8 L1340.0,690.8 L1340.5,690.0 L1341.0,689.5 L1341.5,689.5 L1342.0,690.0 L1342.5,690.9 L1343.0,692.0 L1343.5,693.3 L1344.0,694.4 L1344.5,695.4 L1345.0,696.1 L1345.5,696.6 L1346.0,697.0 L1346.5,697.1 L1347.0,697.2 L1347.5,697.1 L1348.0,696.9 L1348.5,696.7 L1349.0,696.5 L1349.5,696.3 L1350.0,696.3 L1350.5,696.4 L1351.0,696.6 L1351.5,696.9 L1352.0,697.1 L1352.5,697.3 L1353.0,697.4 L1353.5,697.4 L1354.0,697.4 L1354.5,697.4 L1355.0,697.4 L1355.5,697.3 L1356.0,697.2 L1356.5,697.1 L1357.0,696.9 L1357.5,696.8 L1358.0,696.7 L1358.5,696.7 L1359.0,696.7 L1359.5,696.7 L1360.0,696.8 L1360.5,696.8 L1361.0,696.8 L1361.5,696.7 L1362.0,696.6 L1362.5,696.4 L1363.0,696.1 L1363.5,695.8 L1364.0,695.6 L1364.5,695.3 L1365.0,695.1 L1365.5,694.8 L1366.0,694.5 L1366.5,694.0 L1367.0,693.3 L1367.5,692.3 L1368.0,691.2 L1368.5,689.9 L1369.0,688.7 L1369.5,687.7 L1370.0,687.0 L1370.5,686.8 L1371.0,686.9 L1371.5,687.4 L1372.0,688.2 L1372.5,689.2 L1373.0,690.2 L1373.5,691.3 L1374.0,692.3 L1374.5,693.3 L1375.0,694.1 L1375.5,694.8 L1376.0,695.4 L1376.5,695.8 L1377.0,696.2 L1377.5,696.5 L1378.0,696.8 L1378.5,696.9 L1379.0,697.1 L1379.5,697.2 L1380.0,697.2 L1380.5,697.1 L1381.0,697.1 L1381.5,696.9 L1382.0,696.7 L1382.5,696.5 L1383.0,696.4 L1383.5,696.2 L1384.0,696.0 L1384.5,695.8 L1385.0,695.4 L1385.5,694.7 L1386.0,693.8 L1386.5,692.5 L1387.0,691.0 L1387.5,689.3 L1388.0,687.6 L1388.5,686.2 L1389.0,685.1 L1389.5,684.6 L1390.0,684.7 L1390.5,685.3 L1391.0,686.3 L1391.5,687.5 L1392.0,688.6 L1392.5,689.4 L1393.0,689.6 L1393.5,689.2 L1394.0,688.2 L1394.5,686.8 L1395.0,685.4 L1395.5,684.3 L1396.0,683.8 L1396.5,684.2 L1397.0,685.3 L1397.5,687.0 L1398.0,688.8 L1398.5,689.8 L1399.0,686.9 L1399.5,676.5 L1400.0,659.9 L1400.5,643.8 L1401.0,633.2 L1401.5,628.5 L1402.0,627.3 L1402.5,627.2 L1403.0,627.3 L1403.5,627.9 L1404.0,631.0 L1404.5,639.4 L1405.0,654.3 L1405.5,672.4 L1406.0,687.1 L1406.5,694.3 L1407.0,696.3 L1407.5,696.6 L1408.0,696.8 L1408.5,696.8 L1409.0,696.8 L1409.5,696.7 L1410.0,696.6 L1410.5,696.4 L1411.0,696.1 L1411.5,695.9 L1412.0,695.7 L1412.5,695.6 L1413.0,695.6 L1413.5,695.6 L1414.0,695.8 L1414.5,695.9 L1415.0,696.1 L1415.5,696.2 L1416.0,696.4 L1416.5,696.4 L1417.0,696.4 L1417.5,696.4 L1418.0,696.4 L1418.5,696.4 L1419.0,696.4 L1419.5,696.5 L1420.0,696.6 L1420.5,696.7 L1421.0,696.8 L1421.5,697.0 L1422.0,697.1 L1422.5,697.2 L1423.0,697.3 L1423.5,697.3 L1424.0,697.3 L1424.5,697.2 L1425.0,697.0 L1425.5,696.8 L1426.0,696.7 L1426.5,696.6 L1427.0,696.5 L1427.5,696.6 L1428.0,696.6 L1428.5,696.7 L1429.0,696.6 L1429.5,696.5 L1430.0,696.3 L1430.5,696.1 L1431.0,695.8 L1431.5,695.6 L1432.0,695.4 L1432.5,695.3 L1433.0,695.3 L1433.5,695.4 L1434.0,695.6 L1434.5,695.8 L1435.0,696.0 L1435.5,696.2 L1436.0,696.3 L1436.5,696.4 L1437.0,696.5 L1437.5,696.6 L1438.0,696.7 L1438.5,696.8 L1439.0,696.8 L1439.5,696.9 L1440.0,696.9 L1440.5,696.8 L1441.0,696.7 L1441.5,696.6 L1442.0,696.4 L1442.5,696.4 L1443.0,696.3 L1443.5,696.3 L1444.0,696.4 L1444.5,696.6 L1445.0,696.7 L1445.5,696.9 L1446.0,697.1 L1446.5,697.2 L1447.0,697.3 L1447.5,697.3 L1448.0,697.3 L1448.5,697.2 L1449.0,697.0 L1449.5,696.8 L1450.0,696.4 L1450.5,696.2 L1451.0,695.9 L1451.5,695.9 L1452.0,696.0 L1452.5,696.2 L1453.0,696.5 L1453.5,696.8 L1454.0,697.0 L1454.5,697.1 L1455.0,697.1 L1455.5,697.0 L1456.0,696.9 L1456.5,696.8 L1457.0,696.6 L1457.5,696.5 L1458.0,696.4 L1458.5,696.4 L1459.0,696.4 L1459.5,696.4 L1460.0,696.5 L1460.5,696.6 L1461.0,696.7 L1461.5,696.7 L1462.0,696.7 L1462.5,696.8 L1463.0,696.7 L1463.5,696.7 L1464.0,696.7 L1464.5,696.8 L1465.0,696.8 L1465.5,696.8 L1466.0,696.8 L1466.5,696.8 L1467.0,696.7 L1467.5,696.6 L1468.0,696.3 L1468.5,696.0 L1469.0,695.7 L1469.5,695.5 L1470.0,695.3 L1470.5,695.3 L1471.0,695.4 L1471.5,695.7 L1472.0,696.0 L1472.5,696.3 L1473.0,696.7 L1473.5,696.9 L1474.0,697.1 L1474.5,697.1 L1475.0,697.0 L1475.5,696.8 L1476.0,696.4 L1476.5,695.9 L1477.0,695.5 L1477.5,695.1 L1478.0,694.9 L1478.5,694.9 L1479.0,695.0 L1479.5,695.3 L1480.0,695.6 L1480.5,696.0 L1481.0,696.3 L1481.5,696.6 L1482.0,696.7 L1482.5,696.8 L1483.0,696.8 L1483.5,696.7 L1484.0,696.5 L1484.5,696.4 L1485.0,696.3 L1485.5,696.3 L1486.0,696.4 L1486.5,696.5 L1487.0,696.7 L1487.5,696.8 L1488.0,697.0 L1488.5,697.2 L1489.0,697.3 L1489.5,697.3 L1490.0,697.4 L1490.5,697.4 L1491.0,697.3 L1491.5,697.2 L1492.0,697.1 L1492.5,697.0 L1493.0,696.9 L1493.5,696.8 L1494.0,696.8 L1494.5,696.8 L1495.0,696.8 L1495.5,696.9 L1496.0,696.9 L1496.5,696.9 L1497.0,696.8 L1497.5,696.8 L1498.0,696.7 L1498.5,696.7 L1499.0,696.7 L1499.5,696.7 L1500.0,696.8 L1500.5,696.9 L1501.0,697.0 L1501.5,697.0 L1502.0,697.1 L1502.5,697.0 L1503.0,697.0 L1503.5,697.0 L1504.0,697.0 L1504.5,697.1 L1505.0,697.1 L1505.5,697.2 L1506.0,697.3 L1506.5,697.3 L1507.0,697.3 L1507.5,697.3 L1508.0,697.3 L1508.5,697.3 L1509.0,697.2 L1509.5,697.2 L1510.0,697.2 L1510.5,697.3 L1511.0,697.3 L1511.5,697.3 L1512.0,697.3 L1512.5,697.2 L1513.0,697.2 L1513.5,697.2 L1514.0,697.1 L1514.5,697.1 L1515.0,697.0 L1515.5,697.0 L1516.0,697.0 L1516.5,697.0 L1517.0,697.0 L1517.5,696.9 L1518.0,696.9 L1518.5,696.8 L1519.0,696.6 L1519.5,696.4 L1520.0,696.2 L1520.5,695.9 L1521.0,695.5 L1521.5,695.0 L1522.0,694.5 L1522.5,693.9 L1523.0,693.3 L1523.5,692.7 L1524.0,692.1 L1524.5,691.7 L1525.0,691.6 L1525.5,691.7 L1526.0,692.0 L1526.5,692.6 L1527.0,693.3 L1527.5,694.0 L1528.0,694.7 L1528.5,695.4 L1529.0,696.0 L1529.5,696.4 L1530.0,696.7 L1530.5,696.9 L1531.0,697.1 L1531.5,697.1 L1532.0,697.1 L1532.5,697.1 L1533.0,697.0 L1533.5,697.0 L1534.0,697.0 L1534.5,697.0 L1535.0,697.0 L1535.5,697.1 L1536.0,697.1 L1536.5,697.2 L1537.0,697.3 L1537.5,697.4 L1538.0,697.4 L1538.5,697.4 L1539.0,697.3 L1539.5,697.2 L1540.0,697.1 L1540.5,696.9 L1541.0,696.7 L1541.5,696.5 L1542.0,696.4 L1542.5,696.3 L1543.0,696.3 L1543.5,696.4 L1544.0,696.6 L1544.5,696.8 L1545.0,696.9 L1545.5,697.1 L1546.0,697.2 L1546.5,697.2 L1547.0,697.2 L1547.5,697.2 L1548.0,697.2 L1548.5,697.2 L1549.0,697.3 L1549.5,697.3 L1550.0,697.2 L1550.5,696.9 L1551.0,695.1 L1551.5,690.0 L1552.0,682.0 L1552.5,674.2 L1553.0,669.2 L1553.5,667.0 L1554.0,666.4 L1554.5,666.4 L1555.0,666.5 L1555.5,667.1 L1556.0,669.3 L1556.5,674.3 L1557.0,682.0 L1557.5,690.0 L1558.0,695.0 L1558.5,696.7 L1559.0,696.9 L1559.5,696.8 L1560.0,696.8 L1560.5,696.7 L1561.0,696.6 L1561.5,696.6 L1562.0,696.7 L1562.5,696.8 L1563.0,696.8 L1563.5,696.9 L1564.0,697.0 L1564.5,697.1 L1565.0,697.1 L1565.5,697.0 L1566.0,696.9 L1566.5,696.8 L1567.0,696.8 L1567.5,696.8 L1568.0,696.8 L1568.5,696.9 L1569.0,697.1 L1569.5,697.2 L1570.0,697.3 L1570.5,697.4 L1571.0,697.4 L1571.5,697.5 L1572.0,697.5 L1572.5,697.4 L1573.0,697.4 L1573.5,697.4 L1574.0,697.3 L1574.5,697.3 L1575.0,697.2 L1575.5,697.2 L1576.0,697.1 L1576.5,697.1 L1577.0,697.1 L1577.5,697.2 L1578.0,697.2 L1578.5,697.2 L1579.0,697.2 L1579.5,697.2 L1580.0,697.2 L1580.5,697.1 L1581.0,697.1 L1581.5,697.1 L1582.0,697.1 L1582.5,697.0 L1583.0,697.0 L1583.5,696.9 L1584.0,696.8 L1584.5,696.6 L1585.0,696.5 L1585.5,696.4 L1586.0,696.3 L1586.5,696.3 L1587.0,696.4 L1587.5,696.6 L1588.0,696.8 L1588.5,697.0 L1589.0,697.1 L1589.5,697.3 L1590.0,697.3 L1590.5,697.4 L1591.0,697.4 L1591.5,697.3 L1592.0,697.3 L1592.5,697.2 L1593.0,697.2 L1593.5,697.1 L1594.0,697.1 L1594.5,697.1 L1595.0,697.1 L1595.5,697.1 L1596.0,697.2 L1596.5,697.2 L1597.0,697.3 L1597.5,697.3 L1598.0,697.4 L1598.5,697.4 L1599.0,697.4 L1599.5,697.3 L1600.0,697.3 L1600.5,697.1 L1601.0,696.9 L1601.5,696.7 L1602.0,696.6 L1602.5,696.5 L1603.0,696.5 L1603.5,696.6 L1604.0,696.7 L1604.5,696.9 L1605.0,697.1 L1605.5,697.3 L1606.0,697.3 L1606.5,697.4 L1607.0,697.3 L1607.5,697.3 L1608.0,697.1 L1608.5,697.0 L1609.0,696.9 L1609.5,696.9 L1610.0,696.9 L1610.5,697.0 L1611.0,697.1 L1611.5,697.2 L1612.0,697.3 L1612.5,697.4 L1613.0,697.4 L1613.5,697.5 L1614.0,697.5 L1614.5,697.4 L1615.0,697.4 L1615.5,697.4 L1616.0,697.3 L1616.5,697.3 L1617.0,697.3 L1617.5,697.2 L1618.0,697.2 L1618.5,697.2 L1619.0,697.2 L1619.5,697.3 L1620.0,697.3 L1620.5,697.4 L1621.0,697.4 L1621.5,697.4 L1622.0,697.4 L1622.5,697.4 L1623.0,697.4 L1623.5,697.4 L1624.0,697.3 L1624.5,697.3 L1625.0,697.2 L1625.5,697.2 L1626.0,697.1 L1626.5,697.1 L1627.0,697.1 L1627.5,697.2 L1628.0,697.2 L1628.5,697.2 L1629.0,697.2 L1629.5,697.2 L1630.0,697.1 L1630.5,697.0 L1631.0,697.0 L1631.5,696.9 L1632.0,696.9 L1632.5,696.9 L1633.0,696.9 L1633.5,697.0 L1634.0,697.1 L1634.5,697.1 L1635.0,697.2 L1635.5,697.3 L1636.0,697.3 L1636.5,697.3 L1637.0,697.2 L1637.5,697.0 L1638.0,696.9 L1638.5,696.8 L1639.0,696.8 L1639.5,696.8 L1640.0,696.9 L1640.5,697.0 L1641.0,697.0 L1641.5,697.0 L1642.0,696.9 L1642.5,696.8 L1643.0,696.7 L1643.5,696.6 L1644.0,696.5 L1644.5,696.5 L1645.0,696.6 L1645.5,696.7 L1646.0,696.8 L1646.5,696.9 L1647.0,697.0 L1647.5,697.1 L1648.0,697.2 L1648.5,697.2 L1649.0,697.3 L1649.5,697.2 L1650.0,697.2 L1650.5,697.2 L1651.0,697.1 L1651.5,697.2 L1652.0,697.2 L1652.5,697.3 L1653.0,697.4 L1653.5,697.4 L1654.0,697.4 L1654.5,697.4 L1655.0,697.3 L1655.5,697.2 L1656.0,697.1 L1656.5,696.9 L1657.0,696.8 L1657.5,696.8 L1658.0,696.8 L1658.5,696.9 L1659.0,697.1 L1659.5,697.2 L1660.0,697.3 L1660.5,697.4 L1661.0,697.4 L1661.5,697.3 L1662.0,697.3 L1662.5,697.2 L1663.0,697.0 L1663.5,696.9 L1664.0,696.7 L1664.5,696.6 L1665.0,696.5 L1665.5,696.5 L1666.0,696.6 L1666.5,696.7 L1667.0,696.8 L1667.5,697.0 L1668.0,697.1 L1668.5,697.1 L1669.0,697.0 L1669.5,696.9 L1670.0,696.7 L1670.5,696.5 L1671.0,696.4 L1671.5,696.3 L1672.0,696.4 L1672.5,696.6 L1673.0,696.8 L1673.5,697.0 L1674.0,697.2 L1674.5,697.3 L1675.0,697.4 L1675.5,697.4 L1676.0,697.4 L1676.5,697.3 L1677.0,697.1 L1677.5,696.9 L1678.0,696.8 L1678.5,696.6 L1679.0,696.5 L1679.5,696.5 L1680.0,696.6 L1680.5,696.7 L1681.0,696.9 L1681.5,697.1 L1682.0,697.3 L1682.5,697.4 L1683.0,697.4 L1683.5,697.5 L1684.0,697.4 L1684.5,697.4 L1685.0,697.3 L1685.5,697.2 L1686.0,697.0 L1686.5,696.8 L1687.0,696.6 L1687.5,696.4 L1688.0,696.3 L1688.5,696.3 L1689.0,696.4 L1689.5,696.6 L1690.0,696.7 L1690.5,696.8 L1691.0,696.9 L1691.5,696.9 L1692.0,696.9 L1692.5,696.9 L1693.0,696.9 L1693.5,696.9 L1694.0,697.0 L1694.5,697.0 L1695.0,697.1 L1695.5,697.1 L1696.0,697.1 L1696.5,697.0 L1697.0,696.8 L1697.5,696.6 L1698.0,696.5 L1698.5,696.4 L1699.0,696.4 L1699.5,696.5 L1700.0,696.5 L1700.5,696.5 L1701.0,696.3 L1701.5,695.9 L1702.0,695.2 L1702.5,694.3 L1703.0,693.1 L1703.5,691.8 L1704.0,690.4 L1704.5,689.0 L1705.0,688.0 L1705.5,687.3 L1706.0,687.1 L1706.5,687.4 L1707.0,688.1 L1707.5,689.2 L1708.0,690.5 L1708.5,691.9 L1709.0,693.1 L1709.5,694.3 L1710.0,695.2 L1710.5,695.9 L1711.0,696.4 L1711.5,696.7 L1712.0,696.8 L1712.5,696.8 L1713.0,696.8 L1713.5,696.6 L1714.0,696.5 L1714.5,696.5 L1715.0,696.5 L1715.5,696.6 L1716.0,696.8 L1716.5,696.9 L1717.0,697.0 L1717.5,697.1 L1718.0,697.0 L1718.5,696.9 L1719.0,696.8 L1719.5,696.6 L1720.0,696.5 L1720.5,696.4 L1721.0,696.4 L1721.5,696.4 L1722.0,696.4 L1722.5,696.4 L1723.0,696.5 L1723.5,696.4 L1724.0,696.4 L1724.5,696.3 L1725.0,696.3 L1725.5,696.3 L1726.0,696.3 L1726.5,696.4 L1727.0,696.5 L1727.5,696.7 L1728.0,696.9 L1728.5,697.0 L1729.0,697.2 L1729.5,697.3 L1730.0,697.4 L1730.5,697.4 L1731.0,697.5" fill="none" stroke="#111" stroke-width="1.5" stroke-linejoin="round"/>
<path d="M1097.2 258 L1097.2 694" stroke="#2d6fd8" stroke-width="1.4"/>
<path d="M1250.2 505 L1250.2 694" stroke="#2a64c8" stroke-width="1.3"/>
<path d="M1251.6 505 L1251.6 694" stroke="#a8c8f2" stroke-width="1.3"/>
<path d="M175,682.21 L177,682.04 L179,681.87 L181,681.70 L183,681.52 L185,681.35 L187,681.17 L189,680.99 L191,680.81 L193,680.63 L195,680.44 L197,680.26 L199,680.07 L201,679.87 L203,679.68 L205,679.49 L207,679.29 L209,679.09 L211,678.89 L213,678.68 L215,678.48 L217,678.27 L219,678.06 L221,677.85 L223,677.63 L225,677.41 L227,677.19 L229,676.97 L231,676.75 L233,676.52 L235,676.29 L237,676.06 L239,675.83 L241,675.59 L243,675.35 L245,675.11 L247,674.87 L249,674.62 L251,674.37 L253,674.12 L255,673.86 L257,673.61 L259,673.35 L261,673.08 L263,672.82 L265,672.55 L267,672.28 L269,672.00 L271,671.73 L273,671.45 L275,671.16 L277,670.88 L279,670.59 L281,670.29 L283,670.00 L285,669.70 L287,669.40 L289,669.09 L291,668.79 L293,668.47 L295,668.16 L297,667.84 L299,667.52 L301,667.19 L303,666.87 L305,666.53 L307,666.20 L309,665.86 L311,665.52 L313,665.17 L315,664.82 L317,664.47 L319,664.11 L321,663.75 L323,663.38 L325,663.01 L327,662.64 L329,662.26 L331,661.88 L333,661.50 L335,661.11 L337,660.71 L339,660.31 L341,659.91 L343,659.51 L345,659.10 L347,658.68 L349,658.26 L351,657.84 L353,657.41 L355,656.98 L357,656.54 L359,656.10 L361,655.65 L363,655.20 L365,654.74 L367,654.28 L369,653.81 L371,653.34 L373,652.87 L375,652.39 L377,651.90 L379,651.41 L381,650.91 L383,650.41 L385,649.90 L387,649.39 L389,648.87 L391,648.35 L393,647.82 L395,647.28 L397,646.74 L399,646.19 L401,645.64 L403,645.08 L405,644.52 L407,643.95 L409,643.37 L411,642.79 L413,642.20 L415,641.61 L417,641.00 L419,640.40 L421,639.78 L423,639.16 L425,638.53 L427,637.90 L429,637.26 L431,636.61 L433,635.96 L435,635.29 L437,634.63 L439,633.95 L441,633.27 L443,632.58 L445,631.88 L447,631.17 L449,630.46 L451,629.74 L453,629.01 L455,628.28 L457,627.53 L459,626.78 L461,626.02 L463,625.25 L465,624.48 L467,623.69 L469,622.90 L471,622.10 L473,621.29 L475,620.47 L477,619.65 L479,618.81 L481,617.97 L483,617.11 L485,616.25 L487,615.38 L489,614.50 L491,613.61 L493,612.71 L495,611.80 L497,610.88 L499,609.95 L501,609.01 L503,608.06 L505,607.10 L507,606.13 L509,605.15 L511,604.16 L513,603.16 L515,602.15 L517,601.13 L519,600.10 L521,599.05 L523,598.00 L525,596.93 L527,595.85 L529,594.76 L531,593.66 L533,592.55 L535,591.42 L537,590.29 L539,589.14 L541,587.98 L543,586.81 L545,585.62 L547,584.42 L549,583.21 L551,581.99 L553,580.75 L555,579.50 L557,578.23 L559,576.96 L561,575.67 L563,574.36 L565,573.04 L567,571.71 L569,570.36 L571,569.00 L573,567.63 L575,566.24 L577,564.83 L579,563.41 L581,561.98 L583,560.52 L585,559.06 L587,557.58 L589,556.08 L591,554.57 L593,553.04 L595,551.49 L597,549.93 L599,548.35 L601,546.75 L603,545.14 L605,543.51 L607,541.86 L609,540.20 L611,538.51 L613,536.81 L615,535.09 L617,533.36 L619,531.60 L621,529.83 L623,528.03 L625,526.22 L627,524.39 L629,522.54 L631,520.67 L633,518.77 L635,516.86 L637,514.93 L639,512.98 L641,511.01 L643,509.01 L645,507.00 L647,504.96 L649,502.90 L651,500.82 L653,498.72 L655,496.59 L657,494.44 L659,492.27 L661,490.08 L663,487.86 L665,485.62 L667,483.36 L669,481.07 L671,478.75 L673,476.42 L675,474.05 L677,471.66 L679,469.25 L681,466.81 L683,464.35 L685,461.85 L687,459.33 L689,456.79 L691,454.22 L693,451.62 L695,448.99 L697,446.33 L699,443.65 L701,440.94 L703,438.20 L705,435.43 L707,432.63 L709,429.80 L711,426.94 L713,424.04 L715,421.12 L717,418.17 L719,415.19 L721,412.17 L723,409.12 L725,406.04 L727,402.93 L729,399.78 L731,396.60 L733,393.39 L735,390.14 L737,386.85 L739,383.54 L741,380.18 L743,376.79 L745,373.37 L747,369.91 L749,366.41 L751,362.87 L753,359.30 L755,355.68 L757,352.03 L759,348.34 L761,344.62 L763,340.85 L765,337.04 L767,333.19 L769,329.30 L771,325.37 L773,321.39 L775,317.38 L777,313.32 L779,309.21 L781,305.07 L783,300.88 L785,296.64 L787,292.36 L789,288.04 L791,283.66 L793,279.25 L795,274.78 L797,270.27 L799,265.70 L801,261.09 L803,256.44 L805,251.73 L807,246.97 L809,242.16 L811,237.30 L813,232.38 L815,227.42 L817,222.40 L819,217.33 L821,212.20 L823,207.02 L825,201.78 L827,196.49 L829,191.14 L831,185.74 L833,180.27 L835,174.75 L837,169.17 L839,163.53 L841,157.83 L843,152.07 L845,146.25 L847,140.37 L849,134.42 L851,128.41 L853,122.34 L855,116.20 L857,109.99 L859,103.72 L861,97.38 L863,90.98 L865,84.50 L867,77.96 L869,71.35 L871,64.67 L873,57.91 L875,51.09 L877,44.19 L879,37.21 L881,30.17 L883,23.05 L885,15.85 L887,8.57 L889,1.22 L891,-6.21 L893,-13.72 L895,-21.31 L897,-28.98 L899,-36.73 L901,-44.57 L903,-52.49 L905,-60.49 L907,-68.58 L909,-76.76 L911,-85.02 L913,-93.37 L915,-101.81 L917,-110.34 L919,-118.96 L921,-127.67 L923,-136.48 L925,-145.38 L927,-154.37 L929,-163.46 L931,-172.65 L933,-181.93 L935,-191.32 L937,-200.80 L939,-210.39 L941,-220.07 L943,-229.86 L945,-239.76 L947,-249.76 L948.0,-254.80 L955.0,-254.80 L949,-254.80 L951,-254.80 L953,-254.80 L955,-254.80 L957,-244.75 L959,-234.80 L961,-224.96 L963,-215.22 L965,-205.58 L967,-196.05 L969,-186.61 L971,-177.28 L973,-168.04 L975,-158.90 L977,-149.86 L979,-140.91 L981,-132.06 L983,-123.30 L985,-114.64 L987,-106.06 L989,-97.58 L991,-89.18 L993,-80.88 L995,-72.66 L997,-64.53 L999,-56.48 L1001,-48.52 L1003,-40.64 L1005,-32.85 L1007,-25.14 L1009,-17.51 L1011,-9.96 L1013,-2.49 L1015,4.91 L1017,12.22 L1019,19.46 L1021,26.62 L1023,33.70 L1025,40.71 L1027,47.65 L1029,54.51 L1031,61.30 L1033,68.02 L1035,74.66 L1037,81.24 L1039,87.75 L1041,94.19 L1043,100.56 L1045,106.86 L1047,113.10 L1049,119.27 L1051,125.38 L1053,131.42 L1055,137.40 L1057,143.32 L1059,149.17 L1061,154.96 L1063,160.69 L1065,166.36 L1067,171.97 L1069,177.52 L1071,183.01 L1073,188.45 L1075,193.82 L1077,199.14 L1079,204.41 L1081,209.62 L1083,214.77 L1085,219.87 L1087,224.91 L1089,229.91 L1091,234.85 L1093,239.73 L1095,244.57 L1097,249.35 L1099,254.09 L1101,258.77 L1103,263.41 L1105,267.99 L1107,272.53 L1109,277.02 L1111,281.46 L1113,285.86 L1115,290.20 L1117,294.51 L1119,298.77 L1121,302.98 L1123,307.15 L1125,311.27 L1127,315.35 L1129,319.39 L1131,323.38 L1133,327.34 L1135,331.25 L1137,335.12 L1139,338.95 L1141,342.74 L1143,346.48 L1145,350.19 L1147,353.86 L1149,357.50 L1151,361.09 L1153,364.64 L1155,368.16 L1157,371.64 L1159,375.09 L1161,378.49 L1163,381.86 L1165,385.20 L1167,388.50 L1169,391.77 L1171,395.00 L1173,398.19 L1175,401.36 L1177,404.49 L1179,407.59 L1181,410.65 L1183,413.68 L1185,416.68 L1187,419.65 L1189,422.59 L1191,425.49 L1193,428.37 L1195,431.21 L1197,434.03 L1199,436.81 L1201,439.57 L1203,442.30 L1205,445.00 L1207,447.67 L1209,450.31 L1211,452.92 L1213,455.51 L1215,458.07 L1217,460.60 L1219,463.10 L1221,465.58 L1223,468.03 L1225,470.46 L1227,472.86 L1229,475.24 L1231,477.59 L1233,479.91 L1235,482.21 L1237,484.49 L1239,486.74 L1241,488.97 L1243,491.18 L1245,493.36 L1247,495.52 L1249,497.66 L1251,499.77 L1253,501.86 L1255,503.93 L1257,505.98 L1259,508.01 L1261,510.01 L1263,512.00 L1265,513.96 L1267,515.90 L1269,517.82 L1271,519.72 L1273,521.60 L1275,523.47 L1277,525.31 L1279,527.13 L1281,528.93 L1283,530.72 L1285,532.48 L1287,534.23 L1289,535.96 L1291,537.67 L1293,539.36 L1295,541.03 L1297,542.69 L1299,544.33 L1301,545.95 L1303,547.55 L1305,549.14 L1307,550.71 L1309,552.27 L1311,553.80 L1313,555.32 L1315,556.83 L1317,558.32 L1319,559.79 L1321,561.25 L1323,562.69 L1325,564.12 L1327,565.54 L1329,566.93 L1331,568.32 L1333,569.68 L1335,571.04 L1337,572.38 L1339,573.70 L1341,575.02 L1343,576.31 L1345,577.60 L1347,578.87 L1349,580.12 L1351,581.37 L1353,582.60 L1355,583.82 L1357,585.02 L1359,586.21 L1361,587.39 L1363,588.56 L1365,589.72 L1367,590.86 L1369,591.99 L1371,593.11 L1373,594.21 L1375,595.31 L1377,596.39 L1379,597.46 L1381,598.53 L1383,599.58 L1385,600.61 L1387,601.64 L1389,602.66 L1391,603.66 L1393,604.66 L1395,605.64 L1397,606.62 L1399,607.58 L1401,608.54 L1403,609.48 L1405,610.42 L1407,611.34 L1409,612.25 L1411,613.16 L1413,614.05 L1415,614.94 L1417,615.82 L1419,616.68 L1421,617.54 L1423,618.39 L1425,619.23 L1427,620.06 L1429,620.88 L1431,621.70 L1433,622.50 L1435,623.30 L1437,624.09 L1439,624.87 L1441,625.64 L1443,626.40 L1445,627.16 L1447,627.91 L1449,628.65 L1451,629.38 L1453,630.10 L1455,630.82 L1457,631.53 L1459,632.23 L1461,632.92 L1463,633.61 L1465,634.29 L1467,634.96 L1469,635.63 L1471,636.28 L1473,636.94 L1475,637.58 L1477,638.22 L1479,638.85 L1481,639.47 L1483,640.09 L1485,640.70 L1487,641.31 L1489,641.90 L1491,642.50 L1493,643.08 L1495,643.66 L1497,644.23 L1499,644.80 L1501,645.36 L1503,645.92 L1505,646.47 L1507,647.01 L1509,647.55 L1511,648.08 L1513,648.61 L1515,649.13 L1517,649.65 L1519,650.16 L1521,650.66 L1523,651.16 L1525,651.65 L1527,652.14 L1529,652.63 L1531,653.11 L1533,653.58 L1535,654.05 L1537,654.51 L1539,654.97 L1541,655.43 L1543,655.87 L1545,656.32 L1547,656.76 L1549,657.19 L1551,657.62 L1553,658.05 L1555,658.47 L1557,658.89 L1559,659.30 L1561,659.71 L1563,660.11 L1565,660.51 L1567,660.91 L1569,661.30 L1571,661.69 L1573,662.07 L1575,662.45 L1577,662.83 L1579,663.20 L1581,663.56 L1583,663.93 L1585,664.29 L1587,664.64 L1589,664.99 L1591,665.34 L1593,665.69 L1595,666.03 L1597,666.37 L1599,666.70 L1601,667.03 L1603,667.36 L1605,667.68 L1607,668.00 L1609,668.32 L1611,668.63 L1613,668.94 L1615,669.25 L1617,669.55 L1619,669.85 L1621,670.15 L1623,670.44 L1625,670.73 L1627,671.02 L1629,671.30 L1631,671.59 L1633,671.86 L1635,672.14 L1637,672.41 L1639,672.68 L1641,672.95 L1643,673.21 L1645,673.48 L1647,673.73 L1649,673.99 L1651,674.24 L1653,674.50 L1655,674.74 L1657,674.99 L1659,675.23 L1661,675.47 L1663,675.71 L1665,675.94 L1667,676.18 L1669,676.41 L1671,676.64 L1673,676.86 L1675,677.08 L1677,677.30 L1679,677.52 L1681,677.74 L1683,677.95 L1685,678.16 L1687,678.37 L1689,678.58 L1691,678.79 L1693,678.99 L1695,679.19 L1697,679.39 L1699,679.58 L1701,679.78 L1703,679.97 L1705,680.16 L1707,680.35 L1709,680.54 L1711,680.72 L1713,680.90 L1715,681.08 L1717,681.26 L1719,681.44 L1721,681.61 L1723,681.79 L1725,681.96 L1727,682.13 L1729,682.29 L1731,682.46" fill="none" stroke="#111" stroke-width="1.5"/>
</g>
<polygon points="645.50,589.30 656.15,597.04 652.08,609.56 638.92,609.56 634.85,597.04" fill="none" stroke="#222" stroke-width="2.2" stroke-linejoin="miter"/>
<polygon points="797.20,445.80 807.85,453.54 803.78,466.06 790.62,466.06 786.55,453.54" fill="none" stroke="#222" stroke-width="2.2" stroke-linejoin="miter"/>
<polygon points="1097.50,245.70 1108.72,253.85 1104.44,267.05 1090.56,267.05 1086.28,253.85" fill="none" stroke="#1a66dd" stroke-width="2.2" stroke-linejoin="miter"/>
<text x="647" y="583.5" font-size="17.2" fill="#333" text-anchor="middle" font-weight="400" >Pipe End</text>
<text x="798.5" y="439.5" font-size="17.2" fill="#333" text-anchor="middle" font-weight="400" >Pipe End</text>
<text x="1099" y="239" font-size="17.2" fill="#333" text-anchor="middle" font-weight="400" >Pipe End</text>
<text x="873" y="257" font-size="17.3" fill="#333" text-anchor="start" font-weight="400" >pipe end opposite wall_1</text>
<rect x="37" y="720" width="1832" height="18" fill="#24221f"/>
<rect x="36" y="738" width="1833" height="1.5" fill="#ffffff"/>
<text x="169.9400000000001" y="733" font-size="14.4" font-weight="700" fill="#fff" stroke="#fff" stroke-width="0.3" text-anchor="middle" letter-spacing="-0.5">-12</text>
<text x="234.8200000000001" y="733" font-size="14.4" font-weight="700" fill="#fff" stroke="#fff" stroke-width="0.3" text-anchor="middle" letter-spacing="-0.5">-11</text>
<text x="299.7000000000001" y="733" font-size="14.4" font-weight="700" fill="#fff" stroke="#fff" stroke-width="0.3" text-anchor="middle" letter-spacing="-0.5">-10</text>
<text x="364.5800000000001" y="733" font-size="14.4" font-weight="700" fill="#fff" stroke="#fff" stroke-width="0.3" text-anchor="middle" letter-spacing="-0.5">-9</text>
<text x="429.4600000000001" y="733" font-size="14.4" font-weight="700" fill="#fff" stroke="#fff" stroke-width="0.3" text-anchor="middle" letter-spacing="-0.5">-8</text>
<text x="494.3400000000001" y="733" font-size="14.4" font-weight="700" fill="#fff" stroke="#fff" stroke-width="0.3" text-anchor="middle" letter-spacing="-0.5">-7</text>
<text x="559.22" y="733" font-size="14.4" font-weight="700" fill="#fff" stroke="#fff" stroke-width="0.3" text-anchor="middle" letter-spacing="-0.5">-6</text>
<text x="624.1" y="733" font-size="14.4" font-weight="700" fill="#fff" stroke="#fff" stroke-width="0.3" text-anchor="middle" letter-spacing="-0.5">-5</text>
<text x="688.98" y="733" font-size="14.4" font-weight="700" fill="#fff" stroke="#fff" stroke-width="0.3" text-anchor="middle" letter-spacing="-0.5">-4</text>
<text x="753.86" y="733" font-size="14.4" font-weight="700" fill="#fff" stroke="#fff" stroke-width="0.3" text-anchor="middle" letter-spacing="-0.5">-3</text>
<text x="818.74" y="733" font-size="14.4" font-weight="700" fill="#fff" stroke="#fff" stroke-width="0.3" text-anchor="middle" letter-spacing="-0.5">-2</text>
<text x="883.62" y="733" font-size="14.4" font-weight="700" fill="#fff" stroke="#fff" stroke-width="0.3" text-anchor="middle" letter-spacing="-0.5">-1</text>
<text x="948.5" y="733" font-size="14.4" font-weight="700" fill="#fff" stroke="#fff" stroke-width="0.3" text-anchor="middle" letter-spacing="-0.5">0</text>
<text x="1013.38" y="733" font-size="14.4" font-weight="700" fill="#fff" stroke="#fff" stroke-width="0.3" text-anchor="middle" letter-spacing="-0.5">1</text>
<text x="1078.26" y="733" font-size="14.4" font-weight="700" fill="#fff" stroke="#fff" stroke-width="0.3" text-anchor="middle" letter-spacing="-0.5">2</text>
<text x="1143.14" y="733" font-size="14.4" font-weight="700" fill="#fff" stroke="#fff" stroke-width="0.3" text-anchor="middle" letter-spacing="-0.5">3</text>
<text x="1208.02" y="733" font-size="14.4" font-weight="700" fill="#fff" stroke="#fff" stroke-width="0.3" text-anchor="middle" letter-spacing="-0.5">4</text>
<text x="1272.8999999999999" y="733" font-size="14.4" font-weight="700" fill="#fff" stroke="#fff" stroke-width="0.3" text-anchor="middle" letter-spacing="-0.5">5</text>
<text x="1337.78" y="733" font-size="14.4" font-weight="700" fill="#fff" stroke="#fff" stroke-width="0.3" text-anchor="middle" letter-spacing="-0.5">6</text>
<text x="1402.66" y="733" font-size="14.4" font-weight="700" fill="#fff" stroke="#fff" stroke-width="0.3" text-anchor="middle" letter-spacing="-0.5">7</text>
<text x="1467.54" y="733" font-size="14.4" font-weight="700" fill="#fff" stroke="#fff" stroke-width="0.3" text-anchor="middle" letter-spacing="-0.5">8</text>
<text x="1532.4199999999998" y="733" font-size="14.4" font-weight="700" fill="#fff" stroke="#fff" stroke-width="0.3" text-anchor="middle" letter-spacing="-0.5">9</text>
<text x="1597.3" y="733" font-size="14.4" font-weight="700" fill="#fff" stroke="#fff" stroke-width="0.3" text-anchor="middle" letter-spacing="-0.5">10</text>
<text x="1662.18" y="733" font-size="14.4" font-weight="700" fill="#fff" stroke="#fff" stroke-width="0.3" text-anchor="middle" letter-spacing="-0.5">11</text>
<text x="1727.06" y="733" font-size="14.4" font-weight="700" fill="#fff" stroke="#fff" stroke-width="0.3" text-anchor="middle" letter-spacing="-0.5">12</text>
<text x="1791.9399999999998" y="733" font-size="14.4" font-weight="700" fill="#fff" stroke="#fff" stroke-width="0.3" text-anchor="middle" letter-spacing="-0.5">13 m</text>
<path d="M1131.3 498.5 A118 118 0 1 0 1367.3 498.5 A118 118 0 1 0 1131.3 498.5 Z M1179.0 498.5 A70.3 70.3 0 1 1 1319.6 498.5 A70.3 70.3 0 1 1 1179.0 498.5 Z" fill="none" stroke="#000" stroke-width="2.5" opacity="0.35" filter="url(#ringsh)"/>
<path d="M1131.3 498.5 A118 118 0 1 0 1367.3 498.5 A118 118 0 1 0 1131.3 498.5 Z M1179.0 498.5 A70.3 70.3 0 1 1 1319.6 498.5 A70.3 70.3 0 1 1 1179.0 498.5 Z" fill="#000" fill-opacity="0.667" fill-rule="evenodd" stroke="#222" stroke-width="1.2"/>
<path d="M1205.87 388.25 A118.5 118.5 0 0 1 1292.73 388.25 L1275.07 433.09 A70.3 70.3 0 0 0 1223.53 433.09 Z" fill="#ffffff" stroke="#222" stroke-width="1.3"/>
<text x="1249.3" y="412" font-size="15.5" font-weight="700" fill="#e88a0a" text-anchor="middle">DAC</text>
<g transform="translate(1178.4 431.5) rotate(45)"><path d="M-2.8 -8.5 L2.8 -8.5 L2.8 8 L0 12.5 L-2.8 8 Z" fill="none" stroke="#dedede" stroke-width="1.7" stroke-linejoin="miter"/><rect x="-3.4" y="-13.5" width="6.8" height="4" rx="1" fill="#dedede"/></g>
<path d="M1313 417 L1320 425 L1315.5 425 L1315.5 435 L1320 435 L1313 443 L1306 435 L1310.5 435 L1310.5 425 L1306 425 Z" fill="#dedede"/>
<rect x="1326" y="485" width="10.5" height="10.5" fill="#dedede"/><circle cx="1345" cy="490.3" r="5.5" fill="#dedede"/>
<path d="M1326 510 L1331.5 500.5 L1337 510 Z" fill="#dedede"/><path d="M1345 499.5 V510.5 M1339.5 505 H1350.5" stroke="#dedede" stroke-width="2.4"/>
<rect x="1309" y="543" width="18.5" height="3" fill="#dedede"/><rect x="1314.5" y="541" width="7.5" height="3" fill="#dedede"/>
<path d="M1310.5 547 H1326 V565 Q1326 566.5 1324.5 566.5 H1312 Q1310.5 566.5 1310.5 565 Z" fill="#dedede"/>
<rect x="1315" y="550" width="2" height="12" fill="#545454"/><rect x="1319.5" y="550" width="2" height="12" fill="#545454"/>
<text x="1250.3" y="481" font-size="17.4" font-weight="700" fill="#333" text-anchor="middle">Pipe End</text>
<polygon points="1249.80,485.30 1262.35,494.42 1257.56,509.18 1242.04,509.18 1237.25,494.42" fill="#0a64f0" stroke="#0a64f0" stroke-width="1" stroke-linejoin="miter"/>
<rect x="1216" y="316" width="56" height="46.5" rx="23.25" ry="23.25" fill="#545454" stroke="#3a3a3a" stroke-width="0.8"/>
<text x="1244.0" y="344.75" font-size="15" fill="#e4e4e4" text-anchor="middle">DAC</text>
<rect x="1109" y="359" width="52" height="46.5" rx="23.25" ry="23.25" fill="#545454" stroke="#3a3a3a" stroke-width="0.8"/>
<text x="1135.0" y="387.75" font-size="15" fill="#e4e4e4" text-anchor="middle">Edit</text>
<rect x="1340" y="359" width="67" height="46.5" rx="23.25" ry="23.25" fill="#545454" stroke="#3a3a3a" stroke-width="0.8"/>
<text x="1373.5" y="387.75" font-size="15" fill="#e4e4e4" text-anchor="middle">Offset</text>
<rect x="1402" y="460.5" width="87" height="46.5" rx="23.25" ry="23.25" fill="#545454" stroke="#3a3a3a" stroke-width="0.8"/>
<text x="1445.5" y="489.25" font-size="15" fill="#e4e4e4" text-anchor="middle">Edit Type</text>
<rect x="1362" y="567" width="70" height="46.5" rx="23.25" ry="23.25" fill="#545454" stroke="#3a3a3a" stroke-width="0.8"/>
<text x="1397.0" y="595.75" font-size="15" fill="#e4e4e4" text-anchor="middle">Delete</text>
<rect x="37" y="743" width="137" height="181" fill="#c0c0c0"/>
<rect x="1732" y="743" width="137" height="181" fill="#c0c0c0"/>
<rect x="175" y="743" width="1556" height="181" fill="#0000ff"/>
<rect x="173" y="743" width="2" height="181" fill="#000"/>
<rect x="1731" y="743" width="2" height="181" fill="#000"/>
<rect x="175" y="921.5" width="1556" height="1.5" fill="#9a9aff"/>
<rect x="37" y="741.70" width="19" height="2.6" fill="#444"/>
<rect x="37" y="764.35" width="9.5" height="2.2" fill="#444"/>
<rect x="37" y="786.60" width="19" height="2.6" fill="#444"/>
<rect x="37" y="809.25" width="9.5" height="2.2" fill="#444"/>
<rect x="37" y="831.50" width="19" height="2.6" fill="#444"/>
<rect x="37" y="854.15" width="9.5" height="2.2" fill="#444"/>
<rect x="37" y="876.40" width="19" height="2.6" fill="#444"/>
<rect x="37" y="899.05" width="9.5" height="2.2" fill="#444"/>
<clipPath id="cscanclip"><rect x="37" y="742" width="137" height="182"/></clipPath>
<g clip-path="url(#cscanclip)">
<text x="68" y="743.5" font-size="14.6" font-weight="700" fill="#e6e6e6" stroke="#2e2e2e" stroke-width="2.2" paint-order="stroke" stroke-linejoin="round" letter-spacing="-0.6">0</text>
<text x="68" y="788.5" font-size="14.6" font-weight="700" fill="#e6e6e6" stroke="#2e2e2e" stroke-width="2.2" paint-order="stroke" stroke-linejoin="round" letter-spacing="-0.6">90</text>
<text x="68" y="833.5" font-size="14.6" font-weight="700" fill="#e6e6e6" stroke="#2e2e2e" stroke-width="2.2" paint-order="stroke" stroke-linejoin="round" letter-spacing="-0.6">180</text>
<text x="68" y="878.5" font-size="14.6" font-weight="700" fill="#e6e6e6" stroke="#2e2e2e" stroke-width="2.2" paint-order="stroke" stroke-linejoin="round" letter-spacing="-0.6">270</text>
<text x="68" y="923.5" font-size="14.6" font-weight="700" fill="#e6e6e6" stroke="#2e2e2e" stroke-width="2.2" paint-order="stroke" stroke-linejoin="round" letter-spacing="-0.6">360 °</text>
</g>
<rect x="168.44" y="905" width="2.4" height="18.5" fill="#555"/>
<rect x="201.08" y="914.5" width="2" height="9" fill="#1a1a7a"/>
<rect x="233.32" y="905" width="2.4" height="18.5" fill="#1a1a7a"/>
<rect x="265.96" y="914.5" width="2" height="9" fill="#1a1a7a"/>
<rect x="298.20" y="905" width="2.4" height="18.5" fill="#1a1a7a"/>
<rect x="330.84" y="914.5" width="2" height="9" fill="#1a1a7a"/>
<rect x="363.08" y="905" width="2.4" height="18.5" fill="#1a1a7a"/>
<rect x="395.72" y="914.5" width="2" height="9" fill="#1a1a7a"/>
<rect x="427.96" y="905" width="2.4" height="18.5" fill="#1a1a7a"/>
<rect x="460.60" y="914.5" width="2" height="9" fill="#1a1a7a"/>
<rect x="492.84" y="905" width="2.4" height="18.5" fill="#1a1a7a"/>
<rect x="525.48" y="914.5" width="2" height="9" fill="#1a1a7a"/>
<rect x="557.72" y="905" width="2.4" height="18.5" fill="#1a1a7a"/>
<rect x="590.36" y="914.5" width="2" height="9" fill="#1a1a7a"/>
<rect x="622.60" y="905" width="2.4" height="18.5" fill="#1a1a7a"/>
<rect x="655.24" y="914.5" width="2" height="9" fill="#1a1a7a"/>
<rect x="687.48" y="905" width="2.4" height="18.5" fill="#1a1a7a"/>
<rect x="720.12" y="914.5" width="2" height="9" fill="#1a1a7a"/>
<rect x="752.36" y="905" width="2.4" height="18.5" fill="#1a1a7a"/>
<rect x="785.00" y="914.5" width="2" height="9" fill="#1a1a7a"/>
<rect x="817.24" y="905" width="2.4" height="18.5" fill="#1a1a7a"/>
<rect x="849.88" y="914.5" width="2" height="9" fill="#1a1a7a"/>
<rect x="882.12" y="905" width="2.4" height="18.5" fill="#1a1a7a"/>
<rect x="914.76" y="914.5" width="2" height="9" fill="#1a1a7a"/>
<rect x="947.00" y="905" width="2.4" height="18.5" fill="#1a1a7a"/>
<rect x="979.64" y="914.5" width="2" height="9" fill="#1a1a7a"/>
<rect x="1011.88" y="905" width="2.4" height="18.5" fill="#1a1a7a"/>
<rect x="1044.52" y="914.5" width="2" height="9" fill="#1a1a7a"/>
<rect x="1076.76" y="905" width="2.4" height="18.5" fill="#1a1a7a"/>
<rect x="1109.40" y="914.5" width="2" height="9" fill="#1a1a7a"/>
<rect x="1141.64" y="905" width="2.4" height="18.5" fill="#1a1a7a"/>
<rect x="1174.28" y="914.5" width="2" height="9" fill="#1a1a7a"/>
<rect x="1206.52" y="905" width="2.4" height="18.5" fill="#1a1a7a"/>
<rect x="1239.16" y="914.5" width="2" height="9" fill="#1a1a7a"/>
<rect x="1271.40" y="905" width="2.4" height="18.5" fill="#1a1a7a"/>
<rect x="1304.04" y="914.5" width="2" height="9" fill="#1a1a7a"/>
<rect x="1336.28" y="905" width="2.4" height="18.5" fill="#1a1a7a"/>
<rect x="1368.92" y="914.5" width="2" height="9" fill="#1a1a7a"/>
<rect x="1401.16" y="905" width="2.4" height="18.5" fill="#1a1a7a"/>
<rect x="1433.80" y="914.5" width="2" height="9" fill="#1a1a7a"/>
<rect x="1466.04" y="905" width="2.4" height="18.5" fill="#1a1a7a"/>
<rect x="1498.68" y="914.5" width="2" height="9" fill="#1a1a7a"/>
<rect x="1530.92" y="905" width="2.4" height="18.5" fill="#1a1a7a"/>
<rect x="1563.56" y="914.5" width="2" height="9" fill="#1a1a7a"/>
<rect x="1595.80" y="905" width="2.4" height="18.5" fill="#1a1a7a"/>
<rect x="1628.44" y="914.5" width="2" height="9" fill="#1a1a7a"/>
<rect x="1660.68" y="905" width="2.4" height="18.5" fill="#1a1a7a"/>
<rect x="1693.32" y="914.5" width="2" height="9" fill="#1a1a7a"/>
<rect x="1725.56" y="905" width="2.4" height="18.5" fill="#1a1a7a"/>
<rect x="1758.20" y="914.5" width="2" height="9" fill="#555"/>
<rect x="1790.44" y="905" width="2.4" height="18.5" fill="#555"/>
<rect x="37" y="924" width="1831" height="17.5" fill="#24221f"/>
<text x="169.9400000000001" y="937" font-size="14.4" font-weight="700" fill="#fff" stroke="#fff" stroke-width="0.3" text-anchor="middle" letter-spacing="-0.5">-12</text>
<text x="234.8200000000001" y="937" font-size="14.4" font-weight="700" fill="#fff" stroke="#fff" stroke-width="0.3" text-anchor="middle" letter-spacing="-0.5">-11</text>
<text x="299.7000000000001" y="937" font-size="14.4" font-weight="700" fill="#fff" stroke="#fff" stroke-width="0.3" text-anchor="middle" letter-spacing="-0.5">-10</text>
<text x="364.5800000000001" y="937" font-size="14.4" font-weight="700" fill="#fff" stroke="#fff" stroke-width="0.3" text-anchor="middle" letter-spacing="-0.5">-9</text>
<text x="429.4600000000001" y="937" font-size="14.4" font-weight="700" fill="#fff" stroke="#fff" stroke-width="0.3" text-anchor="middle" letter-spacing="-0.5">-8</text>
<text x="494.3400000000001" y="937" font-size="14.4" font-weight="700" fill="#fff" stroke="#fff" stroke-width="0.3" text-anchor="middle" letter-spacing="-0.5">-7</text>
<text x="559.22" y="937" font-size="14.4" font-weight="700" fill="#fff" stroke="#fff" stroke-width="0.3" text-anchor="middle" letter-spacing="-0.5">-6</text>
<text x="624.1" y="937" font-size="14.4" font-weight="700" fill="#fff" stroke="#fff" stroke-width="0.3" text-anchor="middle" letter-spacing="-0.5">-5</text>
<text x="688.98" y="937" font-size="14.4" font-weight="700" fill="#fff" stroke="#fff" stroke-width="0.3" text-anchor="middle" letter-spacing="-0.5">-4</text>
<text x="753.86" y="937" font-size="14.4" font-weight="700" fill="#fff" stroke="#fff" stroke-width="0.3" text-anchor="middle" letter-spacing="-0.5">-3</text>
<text x="818.74" y="937" font-size="14.4" font-weight="700" fill="#fff" stroke="#fff" stroke-width="0.3" text-anchor="middle" letter-spacing="-0.5">-2</text>
<text x="883.62" y="937" font-size="14.4" font-weight="700" fill="#fff" stroke="#fff" stroke-width="0.3" text-anchor="middle" letter-spacing="-0.5">-1</text>
<text x="948.5" y="937" font-size="14.4" font-weight="700" fill="#fff" stroke="#fff" stroke-width="0.3" text-anchor="middle" letter-spacing="-0.5">0</text>
<text x="1013.38" y="937" font-size="14.4" font-weight="700" fill="#fff" stroke="#fff" stroke-width="0.3" text-anchor="middle" letter-spacing="-0.5">1</text>
<text x="1078.26" y="937" font-size="14.4" font-weight="700" fill="#fff" stroke="#fff" stroke-width="0.3" text-anchor="middle" letter-spacing="-0.5">2</text>
<text x="1143.14" y="937" font-size="14.4" font-weight="700" fill="#fff" stroke="#fff" stroke-width="0.3" text-anchor="middle" letter-spacing="-0.5">3</text>
<text x="1208.02" y="937" font-size="14.4" font-weight="700" fill="#fff" stroke="#fff" stroke-width="0.3" text-anchor="middle" letter-spacing="-0.5">4</text>
<text x="1272.8999999999999" y="937" font-size="14.4" font-weight="700" fill="#fff" stroke="#fff" stroke-width="0.3" text-anchor="middle" letter-spacing="-0.5">5</text>
<text x="1337.78" y="937" font-size="14.4" font-weight="700" fill="#fff" stroke="#fff" stroke-width="0.3" text-anchor="middle" letter-spacing="-0.5">6</text>
<text x="1402.66" y="937" font-size="14.4" font-weight="700" fill="#fff" stroke="#fff" stroke-width="0.3" text-anchor="middle" letter-spacing="-0.5">7</text>
<text x="1467.54" y="937" font-size="14.4" font-weight="700" fill="#fff" stroke="#fff" stroke-width="0.3" text-anchor="middle" letter-spacing="-0.5">8</text>
<text x="1532.4199999999998" y="937" font-size="14.4" font-weight="700" fill="#fff" stroke="#fff" stroke-width="0.3" text-anchor="middle" letter-spacing="-0.5">9</text>
<text x="1597.3" y="937" font-size="14.4" font-weight="700" fill="#fff" stroke="#fff" stroke-width="0.3" text-anchor="middle" letter-spacing="-0.5">10</text>
<text x="1662.18" y="937" font-size="14.4" font-weight="700" fill="#fff" stroke="#fff" stroke-width="0.3" text-anchor="middle" letter-spacing="-0.5">11</text>
<text x="1727.06" y="937" font-size="14.4" font-weight="700" fill="#fff" stroke="#fff" stroke-width="0.3" text-anchor="middle" letter-spacing="-0.5">12</text>
<text x="1791.9399999999998" y="937" font-size="14.4" font-weight="700" fill="#fff" stroke="#fff" stroke-width="0.3" text-anchor="middle" letter-spacing="-0.5">13 m</text>
<rect x="0" y="942" width="1870" height="88" fill="#ffffff"/>
<rect x="37.5" y="947.5" width="1829" height="44.5" fill="#ffffff" stroke="#222" stroke-width="1.6" filter="url(#btnsh)"/>
<text x="77" y="975.5" font-size="14" fill="#222" text-anchor="middle" font-weight="400" >128 kHz</text>
<rect x="134.5" y="968.5" width="1427.5" height="1" fill="#9a9a9a"/>
<rect x="134.00" y="948.5" width="1" height="43" fill="#a8a8a8"/>
<rect x="183.18" y="948.5" width="1" height="43" fill="#a8a8a8"/>
<rect x="232.36" y="948.5" width="1" height="43" fill="#a8a8a8"/>
<rect x="281.54" y="948.5" width="1" height="43" fill="#a8a8a8"/>
<rect x="330.72" y="948.5" width="1" height="43" fill="#a8a8a8"/>
<rect x="379.90" y="948.5" width="1" height="43" fill="#a8a8a8"/>
<rect x="429.08" y="948.5" width="1" height="43" fill="#a8a8a8"/>
<rect x="478.26" y="948.5" width="1" height="43" fill="#a8a8a8"/>
<rect x="527.44" y="948.5" width="1" height="43" fill="#a8a8a8"/>
<rect x="576.62" y="948.5" width="1" height="43" fill="#a8a8a8"/>
<rect x="625.80" y="948.5" width="1" height="43" fill="#a8a8a8"/>
<rect x="674.98" y="948.5" width="1" height="43" fill="#a8a8a8"/>
<rect x="724.16" y="948.5" width="1" height="43" fill="#a8a8a8"/>
<rect x="773.34" y="948.5" width="1" height="43" fill="#a8a8a8"/>
<rect x="822.52" y="948.5" width="1" height="43" fill="#a8a8a8"/>
<rect x="871.70" y="948.5" width="1" height="43" fill="#a8a8a8"/>
<rect x="920.88" y="948.5" width="1" height="43" fill="#a8a8a8"/>
<rect x="970.06" y="948.5" width="1" height="43" fill="#a8a8a8"/>
<rect x="1019.24" y="948.5" width="1" height="43" fill="#a8a8a8"/>
<rect x="1068.42" y="948.5" width="1" height="43" fill="#a8a8a8"/>
<rect x="1117.60" y="948.5" width="1" height="43" fill="#a8a8a8"/>
<rect x="1166.78" y="948.5" width="1" height="43" fill="#a8a8a8"/>
<rect x="1215.96" y="948.5" width="1" height="43" fill="#a8a8a8"/>
<rect x="1265.14" y="948.5" width="1" height="43" fill="#a8a8a8"/>
<rect x="1314.32" y="948.5" width="1" height="43" fill="#a8a8a8"/>
<rect x="1363.50" y="948.5" width="1" height="43" fill="#a8a8a8"/>
<rect x="1412.68" y="948.5" width="1" height="43" fill="#a8a8a8"/>
<rect x="1461.86" y="948.5" width="1" height="43" fill="#a8a8a8"/>
<rect x="1511.04" y="948.5" width="1" height="43" fill="#a8a8a8"/>
<rect x="1560.22" y="948.5" width="1" height="43" fill="#a8a8a8"/>
<rect x="808" y="948.3" width="31.2" height="43" fill="#ee8c00"/>
<rect x="823" y="948.3" width="1.2" height="43" fill="#ffc873"/>
<path d="M817 948.3 L830 948.3 L823.5 959 Z" fill="#222"/>
<circle cx="823.5" cy="970" r="7.2" fill="#222"/><rect x="822.5" y="965.5" width="2" height="9" fill="#fff"/>
<rect x="1004" y="948.3" width="31.7" height="43" fill="#ee8c00"/>
<rect x="1018.5" y="948.3" width="1.5" height="43" fill="#ffc873"/>
<text x="136.5" y="989.5" font-size="14.5" fill="#222" text-anchor="middle" font-weight="400" >100</text>
<text x="382.4" y="989.5" font-size="14.5" fill="#222" text-anchor="middle" font-weight="400" >110</text>
<text x="628.3" y="989.5" font-size="14.5" fill="#222" text-anchor="middle" font-weight="400" >120</text>
<text x="874.2" y="989.5" font-size="14.5" fill="#222" text-anchor="middle" font-weight="400" >130</text>
<text x="1120.1" y="989.5" font-size="14.5" fill="#222" text-anchor="middle" font-weight="400" >140</text>
<text x="1366.0" y="989.5" font-size="14.5" fill="#222" text-anchor="middle" font-weight="400" >150</text>
<text x="1579" y="989.5" font-size="15" fill="#222" text-anchor="middle" font-weight="400" >158 kHz</text>
<rect x="1617.7" y="948" width="1.6" height="44" fill="#222"/>
<rect x="1680.2" y="948" width="1.6" height="44" fill="#222"/>
<rect x="1742.2" y="948" width="1.6" height="44" fill="#222"/>
<rect x="1804.2" y="948" width="1.6" height="44" fill="#222"/>
<path d="M1638 954 H1654.5 L1664 963.5 V985 Q1664 988 1661 988 H1638.5 Q1635.8 988 1635.8 985 V957 Q1635.8 954 1638 954 Z" fill="#f0900a"/>
<path d="M1654.8 954.5 L1663.5 963.5 H1654.8 Z" fill="#ffffff"/>
<path d="M1655.5 955.5 L1662.5 962.5 H1655.5 Z" fill="#f0900a"/>
<rect x="1640" y="966" width="20" height="17" fill="#fff"/>
<path d="M1643.5 970 H1656.5 L1650 979 Z" fill="#222"/>
<polygon points="1712.00,952.50 1716.82,964.87 1730.07,965.63 1719.80,974.03 1723.17,986.87 1712.00,979.70 1700.83,986.87 1704.20,974.03 1693.93,965.63 1707.18,964.87" fill="#f0900a" stroke="#f0900a" stroke-width="2.5" stroke-linejoin="round"/>
<path d="M1783 955 L1767 970 L1783 985" fill="none" stroke="#222" stroke-width="5.8" stroke-linecap="round" stroke-linejoin="round"/>
<path d="M1828 955 L1844 970 L1828 985" fill="none" stroke="#222" stroke-width="5.8" stroke-linecap="round" stroke-linejoin="round"/>
<rect x="0" y="998" width="1920" height="32" fill="#ffffff"/>
<rect x="0.5" y="1000.5" width="54" height="28.5" fill="#fff" stroke="#555" stroke-width="1"/>
<circle cx="15.5" cy="1014.5" r="10.5" fill="#24211e"/>
<path d="M6 1014.5 H10 L12.5 1009 L15.5 1021 L18 1012 L19.5 1015.5 H25" fill="none" stroke="#fff" stroke-width="1.5"/>
<path d="M38 1012 L42.5 1016.5 L47 1012" fill="none" stroke="#333" stroke-width="1.5"/>
<text x="459.5" y="1020.5" font-size="14.5" fill="#222" text-anchor="middle" font-weight="400" >4,6 m, 446 mV (-0,36 dB)</text>
<text x="949" y="1020.5" font-size="14.5" fill="#222" text-anchor="middle" font-weight="400" >Torsional, 2 Ring, 6.35mm</text>
<text x="1772.5" y="1020.5" font-size="14.9" fill="#222" text-anchor="middle" font-weight="400" >Yellow IMG pipe</text>
<text x="1895" y="1020.5" font-size="14" fill="#222" text-anchor="middle" font-weight="400" >Test 3</text>
<g transform="rotate(-30 1695 1015)"><rect x="1681" y="1008" width="28" height="14" rx="7" fill="#24211e"/><ellipse cx="1686" cy="1015" rx="4.2" ry="5.8" fill="#fff"/><ellipse cx="1686" cy="1015" rx="2.6" ry="4.3" fill="#24211e"/></g>
<rect x="1837" y="1001" width="30" height="28" rx="7" fill="#24211e"/>
<path d="M1836 1014 H1843 L1846 1007 L1850 1022 L1853 1010 L1855 1015 H1868" fill="none" stroke="#fff" stroke-width="1.8"/>
<rect x="0" y="1030" width="1920" height="50" fill="#1b2a48"/>
<path d="M20 1045 L28.5 1043.8 V1054 H20 Z M30 1043.6 L41 1042 V1054 H30 Z M20 1055.3 H28.5 V1065.5 L20 1064.3 Z M30 1055.3 H41 V1067.3 L30 1065.7 Z" fill="#ffffff"/>
<rect x="60" y="1030" width="429" height="50" fill="#f0f0f0"/>
<circle cx="88.5" cy="1051" r="7" fill="none" stroke="#222" stroke-width="1.6"/><path d="M83.5 1056 L76 1063.5" stroke="#222" stroke-width="1.8"/>
<text x="110" y="1062" font-size="18.3" fill="#222" text-anchor="start" font-weight="400" >Type here to search</text>
<circle cx="519.5" cy="1055" r="8.5" fill="none" stroke="#fff" stroke-width="2"/>
<path d="M570 1046 H586 M570 1064 H586 M572.5 1049 H583.5 V1061 H572.5 Z M590 1046 V1049 M590 1052 V1064" fill="none" stroke="#fff" stroke-width="1.6"/>
<circle cx="643.8" cy="1054.8" r="15.2" fill="url(#edgegrad)"/>
<path d="M629 1057 Q630 1069 644 1070 Q652 1070 656 1066 Q648 1068 642 1064 Q636 1060 638 1054 Q640 1049 647 1049 Q654 1050 657 1056 Q658 1046 650 1042 Q640 1039 633 1046 Q629 1051 629 1057 Z" fill="#1a63b8"/>
<circle cx="645.5" cy="1055.5" r="4.2" fill="#1b2a48"/>
<path d="M645 1040 Q657 1041 659 1053 Q656 1047 648 1047 Q652 1044 645 1040 Z" fill="#6ad36a" opacity="0.85"/>
<circle cx="705.5" cy="1055" r="14.5" fill="#e33b2e"/><path d="M705.5 1055 L693 1062.25 A14.5 14.5 0 0 0 712.75 1067.55 Z" fill="#2ea043"/><path d="M705.5 1055 L712.75 1067.55 A14.5 14.5 0 0 0 718 1047.75 L705.5 1047.75 Z" fill="#f7c21c"/><circle cx="705.5" cy="1055" r="6.8" fill="#fff"/><circle cx="705.5" cy="1055" r="5.3" fill="#2a74e0"/>
<path d="M753 1044 H764 L767 1047 H782 V1067 H753 Z" fill="#e8a82a"/><rect x="753" y="1050" width="29" height="17" fill="#f7cf55"/><rect x="761" y="1058" width="13" height="9" fill="#2a7fd0"/><rect x="764" y="1061" width="7" height="6" fill="#f7cf55"/>
<rect x="743" y="1077" width="49" height="3" fill="#76b9ed"/>
<rect x="820" y="1043" width="22" height="24" rx="2" fill="#1a6fd0"/><rect x="814" y="1047" width="17" height="17" rx="2" fill="#0a5ab0"/><ellipse cx="822.5" cy="1055.5" rx="4.2" ry="5" fill="none" stroke="#fff" stroke-width="2"/>
<circle cx="900" cy="1047" r="4" fill="#7b83eb"/><rect x="893" y="1052" width="15" height="14" rx="6" fill="#7b83eb"/><circle cx="891" cy="1046" r="5" fill="#5059c9"/><rect x="883" y="1051" width="17" height="16" rx="3" fill="#5b5fc7"/><rect x="878" y="1048" width="15" height="15" rx="2" fill="#4b53bc"/><path d="M881 1052 H890 M885.5 1052 V1060" stroke="#fff" stroke-width="2"/>
<rect x="924" y="1030" width="61" height="50" fill="#4a5570"/><rect x="924" y="1076.5" width="61" height="3.5" fill="#76b9ed"/>
<rect x="939" y="1040" width="30" height="30" fill="#221e1c"/>
<text x="0" y="0" font-size="23" fill="#8c8c8c" text-anchor="middle" transform="translate(954 1063.8) scale(0.8 1)">SK</text>
<path d="M1582 1059 L1589 1052 L1596 1059" fill="none" stroke="#fff" stroke-width="1.5"/>
<circle cx="1624" cy="1047" r="2.6" fill="#7b83eb"/><circle cx="1628.5" cy="1049" r="2.2" fill="#7b83eb"/><rect x="1619" y="1051" width="12" height="9" rx="3" fill="#6a6fd8"/><rect x="1610" y="1047" width="12" height="12" rx="1.5" fill="#5059c9"/><text x="1616" y="1056.5" font-size="10" font-weight="700" fill="#fff" text-anchor="middle">T</text><path d="M1624.5 1056 L1630 1066 H1619 Z" fill="#f5b800"/><rect x="1624" y="1059" width="1.2" height="4" fill="#222"/>
<rect x="1641" y="1049.5" width="17" height="10" fill="none" stroke="#fff" stroke-width="1.3"/><rect x="1643.5" y="1052" width="9" height="5" fill="#fff"/><rect x="1658.5" y="1052.5" width="2" height="4" fill="#fff"/>
<circle cx="1680" cy="1055" r="9.5" fill="none" stroke="#fff" stroke-width="1.3"/><ellipse cx="1680" cy="1055" rx="4" ry="9.5" fill="none" stroke="#fff" stroke-width="1.2"/><path d="M1671 1052 H1689 M1671 1058 H1689" stroke="#fff" stroke-width="1.1"/><circle cx="1685.5" cy="1061" r="4" fill="#1b2a48" stroke="#fff" stroke-width="1.1"/><path d="M1683 1063.5 L1688 1058.5" stroke="#fff" stroke-width="1"/>
<path d="M1701 1051 H1705 L1710 1046 V1064 L1705 1059 H1701 Z" fill="none" stroke="#fff" stroke-width="1.3"/><path d="M1713 1051 Q1715 1055 1713 1059 M1716 1048 Q1720 1055 1716 1062" fill="none" stroke="#fff" stroke-width="1.3"/>
<text x="1747.5" y="1061" font-size="14.8" fill="#fff" text-anchor="middle" font-weight="400" >ENG</text>
<text x="1812" y="1049" font-size="14.8" fill="#fff" text-anchor="middle" font-weight="400" >10:39</text>
<text x="1812" y="1072" font-size="14.8" fill="#fff" text-anchor="middle" font-weight="400" >17-6-2022</text>
<path d="M1869 1045 H1889.5 V1060.5 H1875.5 L1870.5 1065 V1060.5 H1869 Z" fill="#ffffff"/><path d="M1872.5 1049 H1886 M1872.5 1052.5 H1886 M1872.5 1056 H1882" stroke="#1b2a48" stroke-width="1.3"/>
<circle cx="1888" cy="1064.3" r="9.2" fill="#2a2f3a" stroke="#9a9a9a" stroke-width="1"/><text x="1888" y="1069.3" font-size="13.5" font-weight="700" fill="#fff" text-anchor="middle">3</text>
<rect x="1914" y="1030" width="1" height="50" fill="#4a5670"/>
</svg>
</body></html>
